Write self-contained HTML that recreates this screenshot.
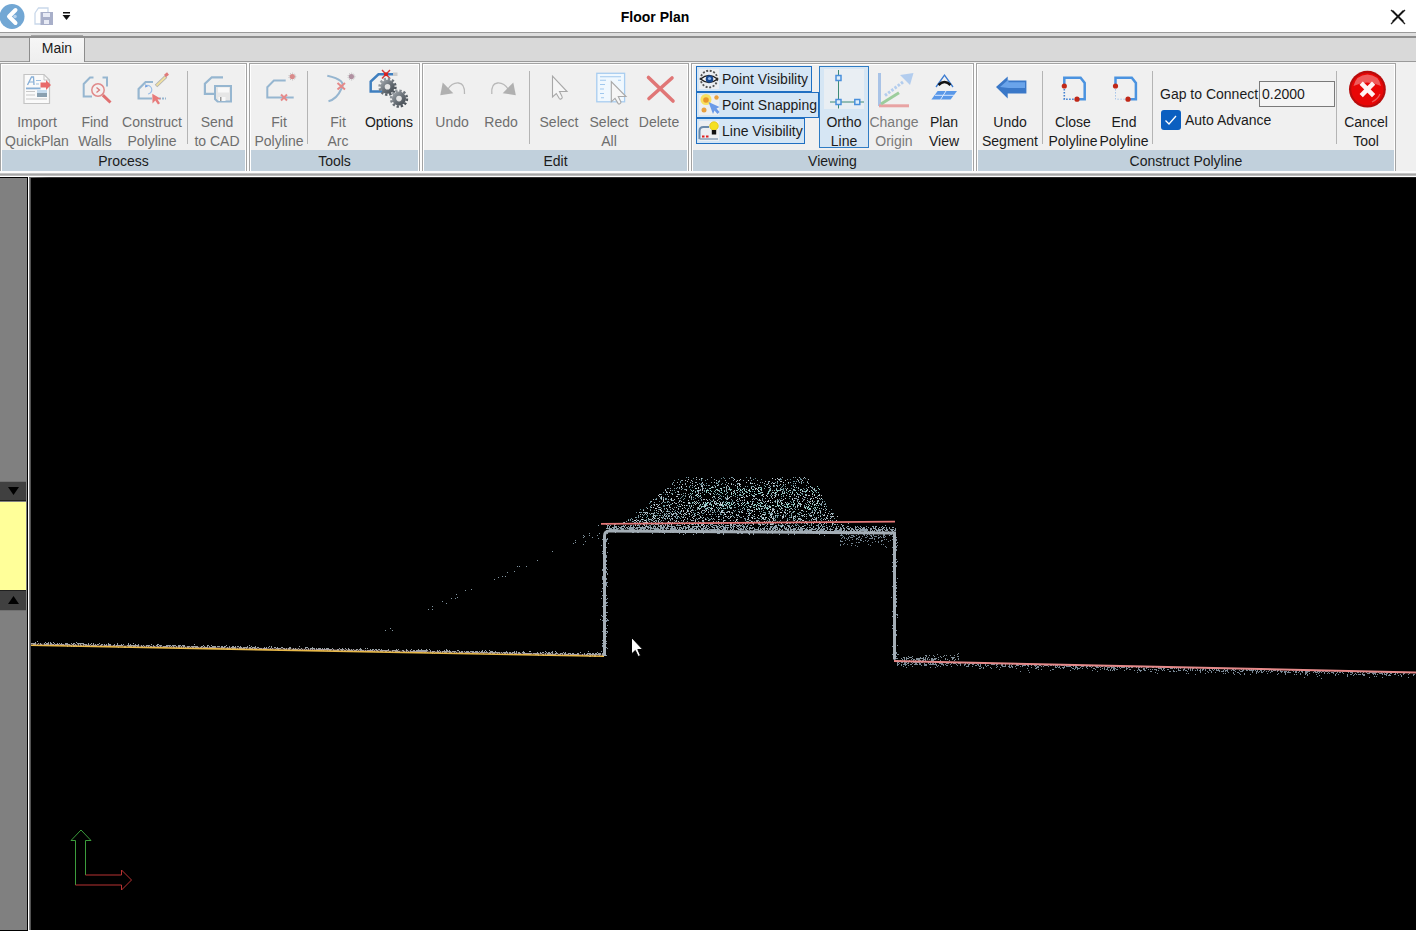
<!DOCTYPE html>
<html><head><meta charset="utf-8">
<style>
*{box-sizing:border-box}
html,body{margin:0;padding:0;width:1416px;height:932px;overflow:hidden;background:#fff;font-family:"Liberation Sans",sans-serif;position:relative}
.a{position:absolute}
.t{position:absolute;white-space:nowrap;font-size:14px;line-height:19px;color:#6e6e6e;text-align:center}
.k{color:#1b1b1b}
.grp{position:absolute;top:63px;height:108px;border:1px solid #a3a3a3;border-bottom:none;background:#f0f0f0;box-shadow:inset 1px 1px 0 #fff,inset -1px 0 0 #fff}
.gl{position:absolute;left:1px;right:1px;bottom:0;height:21px;background:#c1d0dc;font-size:14px;line-height:22px;text-align:center;color:#1b1b1b}
.sep{position:absolute;top:71px;width:1px;height:73px;background:#b4b4b4}
svg{position:absolute;overflow:visible}
</style></head><body>
<!-- title bar -->
<div class="a" style="left:0;top:0;width:1416px;height:32px;background:#fff"></div>
<div class="t k" style="left:600px;top:8px;width:110px;font-weight:bold;font-size:14px;color:#000">Floor Plan</div>
<svg style="left:1390px;top:9px" width="16" height="16"><path d="M1 1L15 15M15 1L1 15" stroke="#222" stroke-width="1.3"/></svg>
<!-- tab strip -->
<div class="a" style="left:0;top:32px;width:1416px;height:1px;background:#9a9a9a"></div>
<div class="a" style="left:0;top:33px;width:1416px;height:4px;background:#dedede"></div>
<div class="a" style="left:31px;top:35px;width:52px;height:1px;background:#a4a4a4"></div>
<div class="a" style="left:0;top:36px;width:1416px;height:2px;background:#8e8e8e"></div>
<div class="a" style="left:0;top:38px;width:1416px;height:24px;background:#d9d9d9"></div>
<div class="a" style="left:29px;top:38px;width:56px;height:25px;background:linear-gradient(#f6f6f6,#eeeeee);border-left:1px solid #8c8c8c;border-right:1px solid #8c8c8c"></div>
<div class="t k" style="left:30px;top:39px;width:54px;font-size:14px">Main</div>
<div class="a" style="left:0;top:61px;width:29px;height:1px;background:#9a9a9a"></div>
<div class="a" style="left:85px;top:61px;width:1331px;height:1px;background:#9a9a9a"></div>
<!-- ribbon background -->
<div class="a" style="left:0;top:62px;width:1416px;height:115px;background:#f0f0f0"></div>
<div class="a" style="left:0;top:171px;width:1416px;height:2px;background:#fcfcfc"></div>
<div class="a" style="left:0;top:173px;width:1416px;height:3px;background:linear-gradient(#d4d4d4,#a6a6a6,#c8c8c8)"></div>
<div class="a" style="left:247px;top:63px;width:2px;height:108px;background:#fcfcfc"></div><div class="a" style="left:420px;top:63px;width:2px;height:108px;background:#fcfcfc"></div><div class="a" style="left:689px;top:63px;width:2px;height:108px;background:#fcfcfc"></div><div class="a" style="left:974px;top:63px;width:2px;height:108px;background:#fcfcfc"></div>

<!-- groups -->
<div class="grp" style="left:0;width:247px"><div class="gl">Process</div></div>
<div class="grp" style="left:249px;width:171px"><div class="gl">Tools</div></div>
<div class="grp" style="left:422px;width:267px"><div class="gl">Edit</div></div>
<div class="grp" style="left:691px;width:283px"><div class="gl">Viewing</div></div>
<div class="grp" style="left:976px;width:420px"><div class="gl">Construct Polyline</div></div>

<!-- separators -->
<div class="sep" style="left:187px"></div>
<div class="sep" style="left:307px"></div>
<div class="sep" style="left:529px"></div>
<div class="sep" style="left:1042px"></div>
<div class="sep" style="left:1152px"></div>
<div class="sep" style="left:1336px"></div>

<!-- button labels -->
<div class="t" style="left:0px;top:113px;width:74px">Import<br>QuickPlan</div>
<div class="t" style="left:65px;top:113px;width:60px">Find<br>Walls</div>
<div class="t" style="left:117px;top:113px;width:70px">Construct<br>Polyline</div>
<div class="t" style="left:187px;top:113px;width:60px">Send<br>to CAD</div>
<div class="t" style="left:249px;top:113px;width:60px">Fit<br>Polyline</div>
<div class="t" style="left:308px;top:113px;width:60px">Fit<br>Arc</div>
<div class="t k" style="left:359px;top:113px;width:60px">Options</div>
<div class="t" style="left:422px;top:113px;width:60px">Undo</div>
<div class="t" style="left:471px;top:113px;width:60px">Redo</div>
<div class="t" style="left:529px;top:113px;width:60px">Select</div>
<div class="t" style="left:579px;top:113px;width:60px">Select<br>All</div>
<div class="t" style="left:629px;top:113px;width:60px">Delete</div>


<svg style="left:0;top:0" width="1416" height="180" viewBox="0 0 1416 180">
<!-- title bar icons -->
<circle cx="12" cy="16.5" r="12.5" fill="#72a7d4"/>
<path d="M15.5 10L9 16.5L15.5 23" fill="none" stroke="#fff" stroke-width="4" stroke-linecap="round" stroke-linejoin="round"/><circle cx="15" cy="16.5" r="1.8" fill="#b8d4ee"/>
<path d="M35 13L38.5 8H48V13" fill="none" stroke="#c9d8ea" stroke-width="1.3"/>
<path d="M35 13V24H41" fill="none" stroke="#c9d8ea" stroke-width="1.3"/>
<rect x="40.5" y="12" width="12.5" height="13" fill="#a8afc9"/>
<rect x="43" y="13" width="7" height="4" fill="#e8ebf5"/>
<rect x="44" y="20" width="5" height="4" fill="#e8ebf5"/>
<rect x="63" y="12" width="7" height="1.5" fill="#111"/>
<path d="M62.5 15L70.5 15L66.5 20Z" fill="#111"/>
<!-- close -->
<path d="M1392.5 10.5L1403.5 21.5M1403.5 10.5L1392.5 21.5" stroke="#111" stroke-width="1.3"/>

<!-- Import QuickPlan -->
<path d="M24 74.5H44L49.5 80V103.5H24Z" fill="#fafafa" stroke="#c4c4c4" stroke-width="1.2"/>
<path d="M44 74.5V80H49.5" fill="none" stroke="#c4c4c4" stroke-width="1"/>
<path d="M27.5 85L31.5 77H33.5L34 85" fill="none" stroke="#86aed6" stroke-width="1.3"/>
<path d="M29 82H33.5" stroke="#86aed6" stroke-width="1"/>
<path d="M36 80.5H41M36 84H39" stroke="#9dbfe0" stroke-width="1"/>
<rect x="26" y="87.5" width="14.5" height="1.8" fill="#8ab0d6"/>
<path d="M26 91.5H35M26 95H35M26 99H47" stroke="#c8c8c8" stroke-width="1"/>
<rect x="37" y="90" width="10" height="7" fill="#8aa0b0"/>
<rect x="37" y="90" width="10" height="3" fill="#c5dbee"/>
<path d="M40.5 82.5H46V80L51 85L46 90V87.5H40.5Z" fill="#e86a6a"/>

<!-- Find Walls -->
<path d="M93.5 77.5H90L83.7 84V96.5H92" fill="none" stroke="#96b6d0" stroke-width="2"/>
<path d="M102.5 77.5H107V86.5" fill="none" stroke="#96b6d0" stroke-width="2"/>
<circle cx="98" cy="90" r="6.2" fill="#f4f0f0" stroke="#e08a8a" stroke-width="1.5"/>
<path d="M96.5 87.5L99.5 90L96.5 92.5" fill="none" stroke="#d87a7a" stroke-width="1.3"/>
<path d="M102.8 95.2L110.5 102.5" stroke="#e07070" stroke-width="3"/>

<!-- Construct Polyline -->
<path d="M153 82H145.6L138.6 89V98.5H152" fill="none" stroke="#96b6d0" stroke-width="2.2"/>
<path d="M159 98.5H166" stroke="#96b6d0" stroke-width="1.8" stroke-dasharray="2 1"/>
<path d="M147 85.5A4 4 0 1 1 148 94" fill="none" stroke="#9bbfe8" stroke-width="1.2"/>
<path d="M145.5 84L148 86.5L145 87.5Z" fill="#6f9fe0"/>
<path d="M156 86L166 76.5" stroke="#b0b0b0" stroke-width="3.6"/>
<path d="M156.5 85.5L165.5 77" stroke="#f0e0a0" stroke-width="1.8"/>
<path d="M165 76L168 73.5" stroke="#e07a7a" stroke-width="3"/>
<path d="M152.3 93.8L152.5 103.5L155.3 100.6L158 104.5L160 103.3L157.5 99.5L161.2 99Z" fill="#e77b7b"/>

<!-- Send to CAD -->
<path d="M223 77.3H211.8L204.9 83.7V93.9H215" fill="none" stroke="#96b6d0" stroke-width="2.2"/>
<path d="M215 86H231V101.5H217.5L215 99Z" fill="#e6e6e6" stroke="#96b6d0" stroke-width="2"/>
<rect x="218" y="87.5" width="11" height="5" fill="#f8f8f8"/>
<rect x="218.5" y="97" width="7" height="4" fill="#f8f8f8"/>
<rect x="220" y="97" width="1.5" height="4" fill="#999"/>

<!-- Fit Polyline -->
<path d="M285.7 80.5H273.9L267.3 87.2V97.6H293.7" fill="none" stroke="#96b6d0" stroke-width="2"/>
<path d="M281 94.5L287 100.5M287 94.5L281 100.5" stroke="#e58a8a" stroke-width="2"/>
<circle cx="292.3" cy="76.6" r="2.6" fill="#d88a8a"/>
<circle cx="292.3" cy="76.6" r="3.4" fill="none" stroke="#a0a0a0" stroke-width="0.7" stroke-dasharray="1 1.2"/>

<!-- Fit Arc -->
<path d="M327.3 75.7Q347 80 341.5 88.5Q337 99 328.5 101.2" fill="none" stroke="#96b6d0" stroke-width="2"/>
<path d="M337.5 83L345 89.5M345 83L337.5 89.5" stroke="#e58a8a" stroke-width="2"/>
<circle cx="351.4" cy="76.6" r="2.6" fill="#b090a0"/>
<circle cx="351.4" cy="76.6" r="3.4" fill="none" stroke="#a0a0a0" stroke-width="0.7" stroke-dasharray="1 1.2"/>

<!-- Options -->
<path d="M396.5 74.3H378.5L370.7 81.6V91.5H386" fill="none" stroke="#3f7fbf" stroke-width="2.5"/>
<rect x="393" y="72.5" width="4.5" height="3.5" fill="#ccc"/>
<path d="M382 70L390 78.5M390 70L382 78.5" stroke="#d43a3a" stroke-width="1.4"/>
<circle cx="386" cy="74.3" r="2" fill="#d42020"/>
<defs><linearGradient id="gg" x1="0" y1="0" x2="1" y2="1"><stop offset="0" stop-color="#a8adb2"/><stop offset="0.5" stop-color="#6a7178"/><stop offset="1" stop-color="#3e454c"/></linearGradient></defs>
<g fill="url(#gg)"><circle cx="387.5" cy="86.8" r="7"/><circle cx="399" cy="98.6" r="7"/></g>
<circle cx="387.5" cy="86.8" r="7.9" fill="none" stroke="url(#gg)" stroke-width="2.6" stroke-dasharray="2.3 1.85"/>
<circle cx="399" cy="98.6" r="7.9" fill="none" stroke="url(#gg)" stroke-width="2.6" stroke-dasharray="2.3 1.85"/>
<circle cx="387.5" cy="86.8" r="2.8" fill="#e4e4e4"/>
<circle cx="399" cy="98.6" r="2.8" fill="#e4e4e4"/>

<!-- Undo / Redo -->
<path d="M447.7 89.5Q452 82.5 458.5 83Q465 83.5 464.5 94" fill="none" stroke="#b8b8b8" stroke-width="1.3"/>
<path d="M442.7 82.5L440.3 95.3L453.3 93.2Z" fill="#b0b0b0"/>
<path d="M508.4 89.5Q504 82.5 497.5 83Q491 83.5 491.8 94" fill="none" stroke="#b8b8b8" stroke-width="1.3"/>
<path d="M513.3 82.5L515.8 95.3L502.7 93.2Z" fill="#b0b0b0"/>

<!-- Select -->
<path d="M552.5 76.2V97L556.3 93.5L559.3 98.5Q560 99.5 561 99L562 98.2Q562.5 97.3 562 96.5L559.5 91.5H567Z" fill="#f6f6f6" stroke="#a8a8a8" stroke-width="1.1"/>
<!-- Select All -->
<rect x="596.8" y="73.3" width="27.8" height="28.5" fill="#f0f8fe" stroke="#a8cdf0" stroke-width="1.3"/>
<path d="M600 76.8H621M600 80.2H606M618 80.2H621M600 84.5H605M600 89H604M600 93.5H604M601 97.8H604" stroke="#a0c8ee" stroke-width="1.1"/>
<path d="M611.3 81.5V101.8L615 98.4L618 103.4Q618.7 104.3 619.7 103.9L620.7 103Q621.2 102.2 620.7 101.4L618.3 96.5H626Z" fill="#f6f6f6" stroke="#a8a8a8" stroke-width="1.1"/>
<!-- Delete -->
<path d="M648.5 77.5L673 101M672 78L649 98.5" stroke="#e07676" stroke-width="3.6" stroke-linecap="round"/>
</svg>


<!-- Viewing toggles -->
<div class="a" style="left:696px;top:66px;width:116px;height:26px;background:#d5e6f5;border:1px solid #1f6fc2"></div>
<div class="a" style="left:696px;top:92px;width:123px;height:26px;background:#d5e6f5;border:1px solid #1f6fc2"></div>
<div class="a" style="left:696px;top:118px;width:109px;height:26px;background:#d5e6f5;border:1px solid #1f6fc2"></div>
<div class="a" style="left:697px;top:91px;width:115px;height:2px;background:#1f6fc2"></div>
<div class="a" style="left:697px;top:117px;width:108px;height:2px;background:#1f6fc2"></div>
<div class="t k" style="left:722px;top:70px;text-align:left">Point Visibility</div>
<div class="t k" style="left:722px;top:96px;text-align:left">Point Snapping</div>
<div class="t k" style="left:722px;top:122px;text-align:left">Line Visibility</div>
<div class="a" style="left:819px;top:66px;width:50px;height:82px;background:#d6e6f4;border:1px solid #2f7cc4"></div>
<div class="a" style="left:824px;top:69px;width:40px;height:40px;background:#e9eef3"></div>
<div class="t k" style="left:814px;top:113px;width:60px">Ortho<br>Line</div>
<div class="t" style="left:864px;top:113px;width:60px;color:#7a7a7a">Change<br>Origin</div>
<div class="t k" style="left:914px;top:113px;width:60px">Plan<br>View</div>
<!-- Construct Polyline labels -->
<div class="t k" style="left:975px;top:113px;width:70px">Undo<br>Segment</div>
<div class="t k" style="left:1038px;top:113px;width:70px">Close<br>Polyline</div>
<div class="t k" style="left:1089px;top:113px;width:70px">End<br>Polyline</div>
<div class="t k" style="left:1160px;top:85px;text-align:left">Gap to Connect</div>
<div class="a" style="left:1259px;top:81px;width:76px;height:26px;background:#f4f4f4;border:1px solid #7a7a7a"></div>
<div class="t k" style="left:1262px;top:85px;text-align:left">0.2000</div>
<div class="a" style="left:1161px;top:110px;width:20px;height:20px;background:#0b5fc0;border-radius:3px"></div>
<div class="t k" style="left:1185px;top:111px;text-align:left">Auto Advance</div>
<div class="t k" style="left:1331px;top:113px;width:70px">Cancel<br>Tool</div>

<svg style="left:0;top:0" width="1416" height="180" viewBox="0 0 1416 180">
<!-- eye icon -->
<rect x="699" y="69" width="20" height="20" fill="#eceff2"/>
<rect x="699" y="95" width="20" height="20" fill="#eceff2"/>
<rect x="699" y="121" width="20" height="20" fill="#eceff2"/>
<g>
<circle cx="709" cy="79" r="8.3" fill="none" stroke="#555" stroke-width="1.8" stroke-dasharray="2 1.6"/>
<path d="M700.5 79Q709 72 717.5 79Q709 86 700.5 79Z" fill="#f4f4f4" stroke="#222" stroke-width="1.5"/>
<circle cx="709.5" cy="79" r="3.8" fill="#1a4a90"/>
<circle cx="709.5" cy="78.5" r="1.6" fill="#8fb8f0"/>
</g>
<!-- snapping -->
<g>
<circle cx="706" cy="99.5" r="5.5" fill="#f8e060"/>
<circle cx="706" cy="100" r="2.8" fill="#e8962a"/>
<circle cx="716.5" cy="97.5" r="2.2" fill="#e8a040"/>
<circle cx="704" cy="110" r="2.5" fill="#e8a040"/>
<path d="M708.5 102L713 114L714.5 110.5L717.5 114L719.5 112L716.5 108.5L719.5 107Z" fill="#6a9ae8"/>
</g>
<!-- line visibility -->
<g>
<path d="M699.5 139V131Q699.5 127 703.5 127H709" fill="none" stroke="#6a8aaa" stroke-width="2"/>
<path d="M699.5 139H718" stroke="#8aa0b8" stroke-width="1.5"/>
<rect x="702" y="135.5" width="2.5" height="2" fill="#e02020"/><rect x="706" y="135.5" width="2.5" height="2" fill="#e02020"/>
<circle cx="714" cy="126" r="4.3" fill="#f5e020" stroke="#d8b800" stroke-width="0.6"/>
<rect x="711.8" y="130" width="4.4" height="4.5" fill="#111"/>
</g>
<!-- ortho -->
<g>
<path d="M838.5 70V108.5M830 102H864" stroke="#3d8a76" stroke-width="1"/>
<rect x="836" y="75.5" width="5" height="5" fill="#dfeefa" stroke="#4a90dc" stroke-width="1.5"/>
<rect x="836" y="99.5" width="5" height="5" fill="#dfeefa" stroke="#4a90dc" stroke-width="1.5"/>
<rect x="854.8" y="99.5" width="5" height="5" fill="#dfeefa" stroke="#4a90dc" stroke-width="1.5"/>
</g>
<!-- change origin -->
<g>
<path d="M879.5 73V106" stroke="#a9c3e6" stroke-width="3"/>
<path d="M879 105.8H909" stroke="#e8a3a3" stroke-width="3"/>
<path d="M881 104L899 92.8" stroke="#9ccd9c" stroke-width="3"/>
<path d="M885 95.5L903 82" stroke="#b3cdee" stroke-width="3" stroke-dasharray="2.5 1.5"/>
<path d="M913.5 73L900 75L910 85Z" fill="#b3cdee"/>
</g>
<!-- plan view -->
<g>
<path d="M936 87L944.5 75L953 87" fill="none" stroke="#3a7ad0" stroke-width="1.3"/>
<path d="M938.5 85Q944.5 79 950.5 85" fill="none" stroke="#111" stroke-width="2.5"/>
<path d="M937.6 91H957L950.6 99.6H931.4Z" fill="#5a98e8"/>
<path d="M935 95.3H954M946 91L940.5 99.6" stroke="#d8e8ff" stroke-width="1"/>
</g>
<!-- undo segment arrow -->
<g>
<path d="M996 87L1007.7 76.5V80.6H1026.4V93.4H1007.7V98.6Z" fill="#3a78c8"/>
<path d="M1000 87L1008.5 79.5V82.3H1025V88H1008.5Z" fill="#6aa4ea"/>
</g>
<!-- close polyline -->
<g>
<path d="M1064.3 85.8V77.7H1080.6L1084.7 82.9V99.2H1077" fill="none" stroke="#4b93e0" stroke-width="2.5"/>
<path d="M1064.3 89V99.2H1075" fill="none" stroke="#3f7fd0" stroke-width="1.6" stroke-dasharray="1.6 1.4"/>
<circle cx="1064.3" cy="86" r="2.6" fill="#c02818"/>
<circle cx="1077" cy="99.2" r="2.6" fill="#c02818"/>
</g>
<!-- end polyline -->
<g>
<path d="M1115.5 85.8V77.7H1131.8L1135.9 82.9V99.2H1128" fill="none" stroke="#4b93e0" stroke-width="2.5"/>
<path d="M1115.5 89V99.2H1126" fill="none" stroke="#a9c6ea" stroke-width="1" stroke-dasharray="1.6 1.4"/>
<circle cx="1115.5" cy="86" r="2.6" fill="#c02818"/>
<circle cx="1128" cy="99.2" r="2.6" fill="#c02818"/>
</g>
<!-- check -->
<path d="M1165.5 120.5L1169 124L1176 116" fill="none" stroke="#fff" stroke-width="1.3"/>
<!-- cancel -->
<g>
<defs><radialGradient id="cg" cx="0.5" cy="0.4" r="0.6"><stop offset="0" stop-color="#ff3030"/><stop offset="0.75" stop-color="#e00808"/><stop offset="1" stop-color="#a00000"/></radialGradient></defs>
<circle cx="1367.4" cy="89.2" r="18.4" fill="#b80c0c"/>
<circle cx="1367.4" cy="89.2" r="16.2" fill="#e80606"/>
<path d="M1353.5 86Q1356 75 1367.4 74.5Q1379 75 1381 86Q1367 79 1353.5 86Z" fill="#f27878" opacity="0.75"/>
<path d="M1372 102Q1378 99 1380 94" fill="none" stroke="#f07070" stroke-width="1.2" opacity="0.8"/>
<path d="M1361.2 83.2L1373.6 95.6M1373.6 83.2L1361.2 95.6" stroke="#fff4f4" stroke-width="4.6"/>
</g>
</svg>

<!-- canvas -->
<div class="a" style="left:0;top:176px;width:1416px;height:756px;background:#fff"></div>
<div class="a" style="left:0;top:177px;width:28px;height:754px;background:#000"></div>
<div class="a" style="left:0;top:178px;width:27px;height:752px;background:#808080"></div>
<div class="a" style="left:29px;top:177px;width:1387px;height:753px;background:#000"></div>
<div class="a" style="left:29px;top:177px;width:2px;height:753px;background:linear-gradient(90deg,#9a9a9a,#3a3a3a)"></div>
<div class="a" style="left:29px;top:177px;width:1387px;height:1px;background:linear-gradient(90deg,#6a6a6a,#3a3a3a 20px,#202020)"></div>

<!-- left scrollbar -->
<div class="a" style="left:0;top:481px;width:26px;height:20px;background:#404040;border-top:1px solid #707070;border-bottom:1px solid #202020"></div>
<svg style="left:8px;top:487px" width="12" height="9"><path d="M0 0H11L5.5 8Z" fill="#000"/></svg>
<div class="a" style="left:0;top:502px;width:26px;height:88px;background:#ffff99"></div>
<div class="a" style="left:0;top:590px;width:26px;height:21px;background:#404040;border-top:1px solid #202020;border-bottom:1px solid #707070"></div>
<svg style="left:8px;top:596px" width="12" height="9"><path d="M0 8H11L5.5 0Z" fill="#000"/></svg>

<svg style="left:0;top:0" width="1416" height="932" viewBox="0 0 1416 932">
<path d="M743 480h1v1h-1zM685 484h1v1h-1zM681 480h1v1h-1zM775 516h1v1h-1zM693 520h1v1h-1zM650 510h1v1h-1zM679 500h1v1h-1zM726 491h1v1h-1zM753 501h1v1h-1zM682 480h1v1h-1zM669 507h1v1h-1zM672 503h1v1h-1zM798 519h1v1h-1zM721 524h1v1h-1zM729 518h1v1h-1zM668 513h1v1h-1zM803 520h1v1h-1zM801 483h1v1h-1zM683 499h1v1h-1zM750 482h1v1h-1zM657 518h1v1h-1zM671 524h1v1h-1zM775 493h1v1h-1zM646 525h1v1h-1zM748 522h1v1h-1zM709 499h1v1h-1zM674 485h1v1h-1zM797 501h1v1h-1zM685 513h1v1h-1zM743 525h1v1h-1zM711 477h1v1h-1zM811 512h1v1h-1zM797 513h1v1h-1zM668 488h1v1h-1zM785 516h1v1h-1zM776 490h1v1h-1zM692 481h1v1h-1zM742 491h1v1h-1zM669 505h1v1h-1zM687 521h1v1h-1zM741 490h1v1h-1zM801 479h1v1h-1zM697 509h1v1h-1zM719 481h1v1h-1zM667 494h1v1h-1zM700 490h1v1h-1zM804 522h1v1h-1zM725 514h1v1h-1zM658 511h1v1h-1zM810 509h1v1h-1zM668 488h1v1h-1zM812 487h1v1h-1zM725 484h1v1h-1zM786 523h1v1h-1zM808 483h1v1h-1zM805 495h1v1h-1zM698 521h1v1h-1zM821 508h1v1h-1zM709 493h1v1h-1zM816 525h1v1h-1zM750 491h1v1h-1zM734 526h1v1h-1zM751 525h1v1h-1zM678 509h1v1h-1zM701 497h1v1h-1zM675 513h1v1h-1zM815 508h1v1h-1zM831 516h1v1h-1zM741 497h1v1h-1zM699 508h1v1h-1zM734 507h1v1h-1zM731 483h1v1h-1zM736 515h1v1h-1zM659 522h1v1h-1zM813 502h1v1h-1zM772 523h1v1h-1zM745 520h1v1h-1zM682 517h1v1h-1zM764 488h1v1h-1zM685 489h1v1h-1zM712 486h1v1h-1zM679 488h1v1h-1zM739 516h1v1h-1zM773 508h1v1h-1zM749 513h1v1h-1zM672 484h1v1h-1zM639 521h1v1h-1zM800 519h1v1h-1zM733 524h1v1h-1zM742 512h1v1h-1zM740 486h1v1h-1zM796 481h1v1h-1zM768 518h1v1h-1zM690 485h1v1h-1zM761 487h1v1h-1zM817 513h1v1h-1zM763 510h1v1h-1zM759 499h1v1h-1zM822 501h1v1h-1zM768 487h1v1h-1zM738 523h1v1h-1zM812 488h1v1h-1zM728 489h1v1h-1zM690 482h1v1h-1zM756 521h1v1h-1zM781 503h1v1h-1zM737 501h1v1h-1zM798 494h1v1h-1zM792 509h1v1h-1zM714 479h1v1h-1zM653 514h1v1h-1zM751 480h1v1h-1zM762 482h1v1h-1zM671 513h1v1h-1zM646 517h1v1h-1zM785 484h1v1h-1zM698 518h1v1h-1zM748 519h1v1h-1zM791 504h1v1h-1zM726 516h1v1h-1zM694 486h1v1h-1zM755 485h1v1h-1zM831 517h1v1h-1zM637 522h1v1h-1zM806 521h1v1h-1zM824 514h1v1h-1zM772 478h1v1h-1zM733 484h1v1h-1zM726 490h1v1h-1zM649 521h1v1h-1zM842 526h1v1h-1zM677 487h1v1h-1zM645 512h1v1h-1zM705 518h1v1h-1zM695 519h1v1h-1zM742 502h1v1h-1zM635 517h1v1h-1zM644 512h1v1h-1zM804 506h1v1h-1zM796 498h1v1h-1zM678 523h1v1h-1zM814 517h1v1h-1zM759 522h1v1h-1zM698 491h1v1h-1zM727 512h1v1h-1zM799 494h1v1h-1zM661 499h1v1h-1zM737 517h1v1h-1zM752 515h1v1h-1zM730 496h1v1h-1zM806 516h1v1h-1zM754 495h1v1h-1zM794 503h1v1h-1zM694 516h1v1h-1zM720 505h1v1h-1zM774 493h1v1h-1zM718 499h1v1h-1zM818 501h1v1h-1zM681 516h1v1h-1zM696 494h1v1h-1zM654 512h1v1h-1zM776 494h1v1h-1zM771 483h1v1h-1zM652 520h1v1h-1zM659 509h1v1h-1zM773 483h1v1h-1zM774 509h1v1h-1zM696 479h1v1h-1zM748 518h1v1h-1zM787 522h1v1h-1zM716 523h1v1h-1zM651 522h1v1h-1zM769 512h1v1h-1zM656 520h1v1h-1zM690 495h1v1h-1zM664 505h1v1h-1zM700 489h1v1h-1zM794 495h1v1h-1zM768 481h1v1h-1zM719 516h1v1h-1zM688 494h1v1h-1zM763 501h1v1h-1zM717 505h1v1h-1zM747 501h1v1h-1zM659 515h1v1h-1zM759 521h1v1h-1zM781 523h1v1h-1zM797 499h1v1h-1zM769 491h1v1h-1zM757 520h1v1h-1zM705 505h1v1h-1zM630 526h1v1h-1zM772 523h1v1h-1zM663 497h1v1h-1zM723 520h1v1h-1zM802 498h1v1h-1zM772 490h1v1h-1zM679 494h1v1h-1zM765 514h1v1h-1zM747 522h1v1h-1zM718 517h1v1h-1zM695 515h1v1h-1zM780 488h1v1h-1zM703 523h1v1h-1zM702 488h1v1h-1zM670 526h1v1h-1zM670 520h1v1h-1zM653 513h1v1h-1zM630 525h1v1h-1zM673 482h1v1h-1zM666 511h1v1h-1zM689 513h1v1h-1zM744 509h1v1h-1zM723 496h1v1h-1zM634 522h1v1h-1zM782 508h1v1h-1zM744 508h1v1h-1zM739 522h1v1h-1zM800 518h1v1h-1zM665 499h1v1h-1zM689 503h1v1h-1zM773 486h1v1h-1zM816 505h1v1h-1zM710 514h1v1h-1zM782 510h1v1h-1zM731 512h1v1h-1zM710 490h1v1h-1zM798 519h1v1h-1zM752 501h1v1h-1zM804 499h1v1h-1zM733 516h1v1h-1zM679 487h1v1h-1zM749 493h1v1h-1zM682 508h1v1h-1zM829 526h1v1h-1zM661 503h1v1h-1zM767 523h1v1h-1zM729 506h1v1h-1zM766 495h1v1h-1zM737 483h1v1h-1zM807 502h1v1h-1zM664 514h1v1h-1zM777 515h1v1h-1zM713 523h1v1h-1zM730 516h1v1h-1zM794 518h1v1h-1zM786 521h1v1h-1zM648 523h1v1h-1zM795 515h1v1h-1zM692 493h1v1h-1zM667 517h1v1h-1zM662 518h1v1h-1zM819 523h1v1h-1zM815 510h1v1h-1zM785 513h1v1h-1zM763 514h1v1h-1zM778 524h1v1h-1zM667 492h1v1h-1zM689 514h1v1h-1zM771 514h1v1h-1zM789 511h1v1h-1zM718 484h1v1h-1zM785 510h1v1h-1zM693 507h1v1h-1zM772 495h1v1h-1zM638 517h1v1h-1zM780 478h1v1h-1zM830 516h1v1h-1zM726 486h1v1h-1zM647 512h1v1h-1zM668 499h1v1h-1zM702 487h1v1h-1zM713 506h1v1h-1zM762 506h1v1h-1zM762 517h1v1h-1zM819 510h1v1h-1zM778 525h1v1h-1zM734 517h1v1h-1zM729 487h1v1h-1zM782 492h1v1h-1zM721 499h1v1h-1zM641 512h1v1h-1zM710 494h1v1h-1zM726 489h1v1h-1zM710 508h1v1h-1zM804 491h1v1h-1zM677 511h1v1h-1zM669 492h1v1h-1zM681 486h1v1h-1zM676 518h1v1h-1zM749 509h1v1h-1zM783 484h1v1h-1zM783 496h1v1h-1zM637 520h1v1h-1zM654 512h1v1h-1zM657 504h1v1h-1zM795 485h1v1h-1zM708 509h1v1h-1zM765 507h1v1h-1zM642 521h1v1h-1zM803 478h1v1h-1zM693 524h1v1h-1zM656 524h1v1h-1zM768 521h1v1h-1zM665 524h1v1h-1zM764 512h1v1h-1zM776 488h1v1h-1zM665 498h1v1h-1zM803 515h1v1h-1zM689 513h1v1h-1zM688 511h1v1h-1zM797 516h1v1h-1zM760 482h1v1h-1zM801 515h1v1h-1zM658 507h1v1h-1zM653 515h1v1h-1zM759 523h1v1h-1zM759 500h1v1h-1zM782 491h1v1h-1zM677 494h1v1h-1zM660 513h1v1h-1zM695 519h1v1h-1zM718 494h1v1h-1zM782 526h1v1h-1zM655 520h1v1h-1zM697 494h1v1h-1zM734 502h1v1h-1zM675 516h1v1h-1zM746 526h1v1h-1zM735 524h1v1h-1zM704 490h1v1h-1zM678 502h1v1h-1zM635 522h1v1h-1zM783 493h1v1h-1zM676 488h1v1h-1zM754 487h1v1h-1zM655 524h1v1h-1zM731 508h1v1h-1zM769 485h1v1h-1zM643 522h1v1h-1zM631 525h1v1h-1zM719 498h1v1h-1zM811 523h1v1h-1zM793 516h1v1h-1zM794 516h1v1h-1zM807 490h1v1h-1zM777 499h1v1h-1zM692 509h1v1h-1zM815 497h1v1h-1zM712 508h1v1h-1zM664 523h1v1h-1zM727 523h1v1h-1zM761 515h1v1h-1zM680 513h1v1h-1zM746 496h1v1h-1zM762 524h1v1h-1zM750 477h1v1h-1zM797 506h1v1h-1zM712 524h1v1h-1zM670 509h1v1h-1zM780 489h1v1h-1zM677 514h1v1h-1zM686 489h1v1h-1zM707 502h1v1h-1zM681 510h1v1h-1zM793 501h1v1h-1zM774 511h1v1h-1zM771 494h1v1h-1zM824 506h1v1h-1zM745 486h1v1h-1zM778 501h1v1h-1zM690 511h1v1h-1zM811 519h1v1h-1zM816 519h1v1h-1zM697 507h1v1h-1zM738 506h1v1h-1zM676 525h1v1h-1zM744 518h1v1h-1zM688 477h1v1h-1zM798 487h1v1h-1zM702 524h1v1h-1zM778 495h1v1h-1zM757 484h1v1h-1zM748 518h1v1h-1zM665 518h1v1h-1zM670 519h1v1h-1zM782 517h1v1h-1zM770 489h1v1h-1zM742 497h1v1h-1zM791 494h1v1h-1zM691 515h1v1h-1zM709 519h1v1h-1zM798 502h1v1h-1zM783 488h1v1h-1zM707 479h1v1h-1zM728 518h1v1h-1zM689 505h1v1h-1zM672 500h1v1h-1zM705 506h1v1h-1zM629 523h1v1h-1zM727 496h1v1h-1zM677 491h1v1h-1zM820 523h1v1h-1zM776 506h1v1h-1zM737 483h1v1h-1zM712 523h1v1h-1zM739 491h1v1h-1zM805 497h1v1h-1zM795 509h1v1h-1zM775 500h1v1h-1zM810 486h1v1h-1zM834 524h1v1h-1zM806 518h1v1h-1zM697 519h1v1h-1zM665 489h1v1h-1zM632 519h1v1h-1zM724 490h1v1h-1zM704 522h1v1h-1zM795 507h1v1h-1zM761 516h1v1h-1zM816 497h1v1h-1zM715 487h1v1h-1zM737 495h1v1h-1zM704 507h1v1h-1zM742 508h1v1h-1zM721 489h1v1h-1zM716 502h1v1h-1zM815 504h1v1h-1zM746 489h1v1h-1zM789 515h1v1h-1zM729 497h1v1h-1zM713 487h1v1h-1zM785 502h1v1h-1zM826 521h1v1h-1zM628 526h1v1h-1zM710 508h1v1h-1zM752 523h1v1h-1zM676 521h1v1h-1zM765 504h1v1h-1zM691 499h1v1h-1zM742 510h1v1h-1zM775 492h1v1h-1zM793 477h1v1h-1zM787 510h1v1h-1zM750 513h1v1h-1zM685 523h1v1h-1zM710 493h1v1h-1zM683 521h1v1h-1zM780 515h1v1h-1zM756 520h1v1h-1zM702 518h1v1h-1zM643 512h1v1h-1zM697 523h1v1h-1zM649 523h1v1h-1zM780 515h1v1h-1zM746 492h1v1h-1zM795 506h1v1h-1zM769 521h1v1h-1zM782 518h1v1h-1zM678 492h1v1h-1zM666 515h1v1h-1zM737 515h1v1h-1zM726 498h1v1h-1zM754 499h1v1h-1zM651 519h1v1h-1zM658 513h1v1h-1zM695 524h1v1h-1zM692 502h1v1h-1zM715 487h1v1h-1zM738 525h1v1h-1zM742 500h1v1h-1zM775 516h1v1h-1zM794 490h1v1h-1zM692 510h1v1h-1zM695 482h1v1h-1zM787 479h1v1h-1zM793 511h1v1h-1zM789 503h1v1h-1zM795 516h1v1h-1zM771 494h1v1h-1zM811 487h1v1h-1zM801 481h1v1h-1zM786 521h1v1h-1zM821 503h1v1h-1zM799 512h1v1h-1zM726 504h1v1h-1zM667 488h1v1h-1zM666 491h1v1h-1zM832 513h1v1h-1zM646 523h1v1h-1zM681 520h1v1h-1zM740 522h1v1h-1zM632 519h1v1h-1zM772 482h1v1h-1zM733 478h1v1h-1zM709 493h1v1h-1zM710 510h1v1h-1zM684 498h1v1h-1zM719 523h1v1h-1zM781 500h1v1h-1zM701 524h1v1h-1zM824 526h1v1h-1zM740 522h1v1h-1zM731 477h1v1h-1zM716 483h1v1h-1zM733 480h1v1h-1zM692 520h1v1h-1zM678 492h1v1h-1zM699 496h1v1h-1zM685 483h1v1h-1zM699 490h1v1h-1zM816 517h1v1h-1zM640 521h1v1h-1zM812 496h1v1h-1zM762 508h1v1h-1zM679 484h1v1h-1zM792 525h1v1h-1zM676 515h1v1h-1zM675 492h1v1h-1zM824 504h1v1h-1zM709 514h1v1h-1zM793 512h1v1h-1zM804 505h1v1h-1zM661 520h1v1h-1zM826 518h1v1h-1zM818 524h1v1h-1zM670 488h1v1h-1zM726 505h1v1h-1zM653 519h1v1h-1zM650 519h1v1h-1zM764 488h1v1h-1zM753 486h1v1h-1zM727 517h1v1h-1zM703 488h1v1h-1zM730 523h1v1h-1zM654 502h1v1h-1zM820 504h1v1h-1zM814 509h1v1h-1zM698 500h1v1h-1zM814 490h1v1h-1zM770 486h1v1h-1zM766 521h1v1h-1zM804 514h1v1h-1zM806 504h1v1h-1zM835 521h1v1h-1zM635 523h1v1h-1zM764 515h1v1h-1zM830 514h1v1h-1zM798 496h1v1h-1zM673 500h1v1h-1zM635 520h1v1h-1zM665 524h1v1h-1zM718 510h1v1h-1zM806 494h1v1h-1zM770 517h1v1h-1zM809 515h1v1h-1zM758 520h1v1h-1zM749 520h1v1h-1zM704 504h1v1h-1zM668 501h1v1h-1zM750 520h1v1h-1zM666 513h1v1h-1zM726 488h1v1h-1zM789 517h1v1h-1zM790 482h1v1h-1zM744 502h1v1h-1zM710 504h1v1h-1zM724 513h1v1h-1zM821 504h1v1h-1zM741 490h1v1h-1zM764 502h1v1h-1zM758 491h1v1h-1zM667 524h1v1h-1zM747 521h1v1h-1zM749 515h1v1h-1zM782 500h1v1h-1zM703 521h1v1h-1zM815 519h1v1h-1zM769 513h1v1h-1zM767 505h1v1h-1zM635 517h1v1h-1zM742 524h1v1h-1zM698 512h1v1h-1zM811 490h1v1h-1zM650 519h1v1h-1zM716 507h1v1h-1zM770 500h1v1h-1zM765 518h1v1h-1zM642 514h1v1h-1zM759 511h1v1h-1zM780 520h1v1h-1zM660 510h1v1h-1zM668 515h1v1h-1zM701 511h1v1h-1zM821 498h1v1h-1zM659 504h1v1h-1zM673 514h1v1h-1zM765 522h1v1h-1zM691 496h1v1h-1zM791 513h1v1h-1zM754 505h1v1h-1zM742 508h1v1h-1zM765 498h1v1h-1zM741 503h1v1h-1zM690 507h1v1h-1zM675 512h1v1h-1zM645 520h1v1h-1zM662 515h1v1h-1zM819 521h1v1h-1zM705 508h1v1h-1zM760 522h1v1h-1zM757 480h1v1h-1zM697 526h1v1h-1zM737 497h1v1h-1zM786 490h1v1h-1zM640 516h1v1h-1zM668 525h1v1h-1zM720 514h1v1h-1zM754 514h1v1h-1zM726 499h1v1h-1zM790 511h1v1h-1zM718 522h1v1h-1zM630 519h1v1h-1zM772 523h1v1h-1zM712 514h1v1h-1zM781 507h1v1h-1zM779 502h1v1h-1zM696 501h1v1h-1zM797 494h1v1h-1zM701 483h1v1h-1zM837 524h1v1h-1zM646 514h1v1h-1zM832 513h1v1h-1zM739 524h1v1h-1zM730 514h1v1h-1zM793 523h1v1h-1zM814 519h1v1h-1zM662 522h1v1h-1zM801 513h1v1h-1zM796 525h1v1h-1zM725 508h1v1h-1zM812 504h1v1h-1zM798 505h1v1h-1zM817 503h1v1h-1zM788 522h1v1h-1zM689 497h1v1h-1zM770 509h1v1h-1zM731 496h1v1h-1zM738 511h1v1h-1zM781 523h1v1h-1zM682 517h1v1h-1zM745 519h1v1h-1zM731 499h1v1h-1zM810 513h1v1h-1zM656 521h1v1h-1zM722 511h1v1h-1zM754 516h1v1h-1zM748 480h1v1h-1zM772 510h1v1h-1zM690 523h1v1h-1zM826 525h1v1h-1zM772 514h1v1h-1zM683 495h1v1h-1zM758 518h1v1h-1zM701 499h1v1h-1zM747 526h1v1h-1zM712 526h1v1h-1zM661 522h1v1h-1zM748 511h1v1h-1zM817 525h1v1h-1zM709 485h1v1h-1zM718 481h1v1h-1zM710 524h1v1h-1zM770 521h1v1h-1zM644 520h1v1h-1zM755 498h1v1h-1zM739 494h1v1h-1zM745 504h1v1h-1zM658 522h1v1h-1zM771 493h1v1h-1zM732 512h1v1h-1zM658 520h1v1h-1zM717 490h1v1h-1zM716 504h1v1h-1zM705 519h1v1h-1zM707 505h1v1h-1zM763 518h1v1h-1zM729 478h1v1h-1zM656 499h1v1h-1zM711 482h1v1h-1zM741 517h1v1h-1zM706 503h1v1h-1zM787 525h1v1h-1zM719 523h1v1h-1zM772 513h1v1h-1zM699 502h1v1h-1zM813 489h1v1h-1zM826 523h1v1h-1zM760 493h1v1h-1zM721 484h1v1h-1zM714 519h1v1h-1zM747 525h1v1h-1zM638 515h1v1h-1zM753 495h1v1h-1zM718 522h1v1h-1zM776 489h1v1h-1zM809 491h1v1h-1zM674 522h1v1h-1zM669 515h1v1h-1zM701 485h1v1h-1zM727 498h1v1h-1zM698 492h1v1h-1zM811 516h1v1h-1zM809 508h1v1h-1zM724 504h1v1h-1zM787 504h1v1h-1zM786 503h1v1h-1zM667 522h1v1h-1zM748 511h1v1h-1zM795 498h1v1h-1zM821 524h1v1h-1zM699 505h1v1h-1zM696 482h1v1h-1zM750 478h1v1h-1zM665 516h1v1h-1zM706 505h1v1h-1zM708 485h1v1h-1zM710 502h1v1h-1zM779 490h1v1h-1zM752 521h1v1h-1zM722 510h1v1h-1zM725 497h1v1h-1zM756 506h1v1h-1zM789 512h1v1h-1zM813 519h1v1h-1zM803 500h1v1h-1zM835 524h1v1h-1zM689 516h1v1h-1zM772 514h1v1h-1zM677 517h1v1h-1zM783 515h1v1h-1zM671 513h1v1h-1zM749 506h1v1h-1zM720 498h1v1h-1zM689 506h1v1h-1zM674 516h1v1h-1zM707 525h1v1h-1zM762 500h1v1h-1zM726 501h1v1h-1zM821 498h1v1h-1zM822 526h1v1h-1zM736 520h1v1h-1zM695 492h1v1h-1zM772 495h1v1h-1zM782 477h1v1h-1zM706 491h1v1h-1zM761 495h1v1h-1zM742 491h1v1h-1zM679 504h1v1h-1zM822 502h1v1h-1zM799 482h1v1h-1zM753 498h1v1h-1zM693 505h1v1h-1zM720 512h1v1h-1zM812 522h1v1h-1zM644 524h1v1h-1zM703 524h1v1h-1zM825 504h1v1h-1zM793 500h1v1h-1zM681 494h1v1h-1zM667 502h1v1h-1zM655 508h1v1h-1zM773 517h1v1h-1zM810 499h1v1h-1zM659 517h1v1h-1zM758 508h1v1h-1zM689 496h1v1h-1zM728 486h1v1h-1zM811 525h1v1h-1zM798 499h1v1h-1zM762 518h1v1h-1zM672 515h1v1h-1zM767 493h1v1h-1zM706 510h1v1h-1zM739 522h1v1h-1zM776 525h1v1h-1zM665 525h1v1h-1zM800 512h1v1h-1zM674 516h1v1h-1zM798 509h1v1h-1zM702 485h1v1h-1zM805 521h1v1h-1zM642 519h1v1h-1zM632 521h1v1h-1zM792 498h1v1h-1zM677 494h1v1h-1zM737 487h1v1h-1zM791 515h1v1h-1zM672 508h1v1h-1zM681 489h1v1h-1zM772 508h1v1h-1zM655 516h1v1h-1zM659 519h1v1h-1zM785 524h1v1h-1zM692 485h1v1h-1zM800 505h1v1h-1z" fill="#9cb4c0" opacity="0.9"/>
<path d="M663 498h1v1h-1zM667 517h1v1h-1zM721 510h1v1h-1zM739 484h1v1h-1zM751 506h1v1h-1zM831 509h1v1h-1zM779 480h1v1h-1zM832 520h1v1h-1zM821 505h1v1h-1zM717 485h1v1h-1zM716 494h1v1h-1zM775 519h1v1h-1zM679 513h1v1h-1zM832 525h1v1h-1zM647 516h1v1h-1zM706 509h1v1h-1zM707 489h1v1h-1zM810 498h1v1h-1zM666 516h1v1h-1zM757 499h1v1h-1zM663 499h1v1h-1zM662 518h1v1h-1zM725 504h1v1h-1zM780 479h1v1h-1zM794 508h1v1h-1zM682 522h1v1h-1zM739 491h1v1h-1zM717 508h1v1h-1zM693 510h1v1h-1zM691 524h1v1h-1zM660 497h1v1h-1zM763 512h1v1h-1zM802 516h1v1h-1zM760 504h1v1h-1zM766 503h1v1h-1zM831 513h1v1h-1zM695 513h1v1h-1zM721 524h1v1h-1zM652 524h1v1h-1zM727 495h1v1h-1zM743 523h1v1h-1zM710 500h1v1h-1zM682 496h1v1h-1zM787 520h1v1h-1zM651 524h1v1h-1zM630 520h1v1h-1zM677 525h1v1h-1zM781 479h1v1h-1zM752 503h1v1h-1zM697 512h1v1h-1zM769 498h1v1h-1zM677 517h1v1h-1zM654 525h1v1h-1zM712 510h1v1h-1zM660 498h1v1h-1zM678 479h1v1h-1zM758 524h1v1h-1zM708 524h1v1h-1zM647 515h1v1h-1zM674 490h1v1h-1zM674 513h1v1h-1zM821 518h1v1h-1zM800 495h1v1h-1zM768 493h1v1h-1zM691 524h1v1h-1zM716 521h1v1h-1zM711 507h1v1h-1zM662 517h1v1h-1zM633 521h1v1h-1zM722 506h1v1h-1zM791 514h1v1h-1zM739 499h1v1h-1zM798 513h1v1h-1zM637 523h1v1h-1zM741 490h1v1h-1zM783 485h1v1h-1zM783 495h1v1h-1zM751 525h1v1h-1zM723 477h1v1h-1zM698 497h1v1h-1zM636 512h1v1h-1zM803 511h1v1h-1zM825 508h1v1h-1zM726 525h1v1h-1zM759 487h1v1h-1zM761 511h1v1h-1zM830 522h1v1h-1zM761 517h1v1h-1zM646 507h1v1h-1zM646 519h1v1h-1zM667 501h1v1h-1zM786 514h1v1h-1zM666 505h1v1h-1zM743 493h1v1h-1zM723 487h1v1h-1zM783 505h1v1h-1zM760 492h1v1h-1zM820 510h1v1h-1zM737 523h1v1h-1zM665 494h1v1h-1zM711 516h1v1h-1zM701 500h1v1h-1zM660 515h1v1h-1zM702 515h1v1h-1zM812 510h1v1h-1zM745 520h1v1h-1zM628 519h1v1h-1zM797 504h1v1h-1zM790 508h1v1h-1zM758 507h1v1h-1zM747 516h1v1h-1zM721 522h1v1h-1zM794 481h1v1h-1zM778 515h1v1h-1zM659 501h1v1h-1zM761 509h1v1h-1zM805 525h1v1h-1zM799 519h1v1h-1zM822 514h1v1h-1zM790 517h1v1h-1zM708 511h1v1h-1zM650 502h1v1h-1zM701 479h1v1h-1zM770 524h1v1h-1zM777 516h1v1h-1zM716 482h1v1h-1zM800 479h1v1h-1zM807 523h1v1h-1zM793 490h1v1h-1zM737 487h1v1h-1zM803 491h1v1h-1zM735 507h1v1h-1zM650 501h1v1h-1zM754 495h1v1h-1zM781 496h1v1h-1zM805 478h1v1h-1zM674 511h1v1h-1zM737 501h1v1h-1zM782 505h1v1h-1zM696 494h1v1h-1zM710 508h1v1h-1zM761 479h1v1h-1zM695 502h1v1h-1zM799 504h1v1h-1zM730 507h1v1h-1zM735 504h1v1h-1zM779 499h1v1h-1zM787 513h1v1h-1zM748 524h1v1h-1zM693 512h1v1h-1zM683 499h1v1h-1zM771 523h1v1h-1zM716 521h1v1h-1zM768 506h1v1h-1zM779 485h1v1h-1zM706 485h1v1h-1zM751 521h1v1h-1zM775 496h1v1h-1zM749 491h1v1h-1zM697 491h1v1h-1zM655 518h1v1h-1zM669 524h1v1h-1zM752 521h1v1h-1zM721 492h1v1h-1zM739 495h1v1h-1zM811 520h1v1h-1zM702 518h1v1h-1zM720 492h1v1h-1zM650 507h1v1h-1zM714 511h1v1h-1zM727 508h1v1h-1zM744 508h1v1h-1zM742 489h1v1h-1zM667 514h1v1h-1zM670 499h1v1h-1zM684 498h1v1h-1zM824 518h1v1h-1zM777 517h1v1h-1zM820 499h1v1h-1zM738 509h1v1h-1zM812 522h1v1h-1zM802 494h1v1h-1zM793 483h1v1h-1zM664 505h1v1h-1zM755 478h1v1h-1zM777 485h1v1h-1zM660 507h1v1h-1zM672 483h1v1h-1zM721 478h1v1h-1zM650 506h1v1h-1zM766 484h1v1h-1zM811 515h1v1h-1zM783 514h1v1h-1zM696 495h1v1h-1zM700 505h1v1h-1zM808 501h1v1h-1zM765 519h1v1h-1zM805 503h1v1h-1zM703 510h1v1h-1zM672 493h1v1h-1zM746 506h1v1h-1zM722 525h1v1h-1zM693 478h1v1h-1zM775 482h1v1h-1zM691 498h1v1h-1zM660 521h1v1h-1zM663 492h1v1h-1zM654 510h1v1h-1zM773 516h1v1h-1zM651 520h1v1h-1zM667 502h1v1h-1zM672 490h1v1h-1zM715 512h1v1h-1zM679 522h1v1h-1zM816 492h1v1h-1zM713 512h1v1h-1zM777 500h1v1h-1zM794 503h1v1h-1zM704 485h1v1h-1zM775 526h1v1h-1zM719 494h1v1h-1zM711 507h1v1h-1zM779 525h1v1h-1zM797 500h1v1h-1zM789 515h1v1h-1zM719 511h1v1h-1zM745 519h1v1h-1zM693 490h1v1h-1zM653 504h1v1h-1zM762 498h1v1h-1zM695 510h1v1h-1zM827 515h1v1h-1zM694 522h1v1h-1zM769 498h1v1h-1zM814 501h1v1h-1zM806 488h1v1h-1zM731 493h1v1h-1zM664 502h1v1h-1zM806 485h1v1h-1zM738 503h1v1h-1zM730 523h1v1h-1zM802 491h1v1h-1zM701 517h1v1h-1zM667 510h1v1h-1zM818 515h1v1h-1zM704 512h1v1h-1zM753 516h1v1h-1zM683 516h1v1h-1zM804 523h1v1h-1zM759 518h1v1h-1zM702 524h1v1h-1zM792 499h1v1h-1zM702 524h1v1h-1zM818 495h1v1h-1zM656 521h1v1h-1zM692 514h1v1h-1zM795 517h1v1h-1zM817 496h1v1h-1zM739 522h1v1h-1zM653 517h1v1h-1zM786 523h1v1h-1zM750 510h1v1h-1zM819 521h1v1h-1zM797 507h1v1h-1zM696 518h1v1h-1zM785 488h1v1h-1zM723 502h1v1h-1zM639 525h1v1h-1zM829 511h1v1h-1zM690 508h1v1h-1zM823 526h1v1h-1zM778 522h1v1h-1zM794 518h1v1h-1zM777 510h1v1h-1zM638 516h1v1h-1zM681 522h1v1h-1zM663 517h1v1h-1zM793 506h1v1h-1zM743 525h1v1h-1zM686 477h1v1h-1zM816 509h1v1h-1zM719 519h1v1h-1zM790 523h1v1h-1zM797 521h1v1h-1zM658 524h1v1h-1zM784 511h1v1h-1zM764 524h1v1h-1zM724 478h1v1h-1zM771 497h1v1h-1zM769 516h1v1h-1zM674 480h1v1h-1zM742 495h1v1h-1zM698 487h1v1h-1zM677 518h1v1h-1zM679 500h1v1h-1zM811 524h1v1h-1zM778 500h1v1h-1zM728 525h1v1h-1zM827 516h1v1h-1zM734 479h1v1h-1zM791 488h1v1h-1zM767 494h1v1h-1zM705 480h1v1h-1zM682 524h1v1h-1zM748 521h1v1h-1zM795 524h1v1h-1zM787 510h1v1h-1zM749 523h1v1h-1zM781 487h1v1h-1zM726 493h1v1h-1zM703 513h1v1h-1zM678 506h1v1h-1zM640 512h1v1h-1zM797 524h1v1h-1zM725 520h1v1h-1zM735 496h1v1h-1zM762 499h1v1h-1zM666 498h1v1h-1zM680 482h1v1h-1zM649 525h1v1h-1zM646 524h1v1h-1zM702 513h1v1h-1zM803 488h1v1h-1zM682 517h1v1h-1zM770 513h1v1h-1zM674 488h1v1h-1zM769 520h1v1h-1zM718 526h1v1h-1zM809 514h1v1h-1zM670 504h1v1h-1zM731 502h1v1h-1zM668 521h1v1h-1zM666 499h1v1h-1zM689 487h1v1h-1zM740 492h1v1h-1zM711 524h1v1h-1zM795 519h1v1h-1zM719 490h1v1h-1zM701 484h1v1h-1zM709 519h1v1h-1zM661 508h1v1h-1zM670 512h1v1h-1zM670 504h1v1h-1zM749 510h1v1h-1zM774 526h1v1h-1zM789 523h1v1h-1zM765 513h1v1h-1zM830 522h1v1h-1zM777 483h1v1h-1zM636 517h1v1h-1zM654 517h1v1h-1zM804 489h1v1h-1zM721 519h1v1h-1zM681 497h1v1h-1zM702 478h1v1h-1zM769 519h1v1h-1zM772 526h1v1h-1zM803 482h1v1h-1zM777 482h1v1h-1zM684 489h1v1h-1zM679 517h1v1h-1zM723 518h1v1h-1zM680 498h1v1h-1zM778 513h1v1h-1zM721 511h1v1h-1zM801 523h1v1h-1zM633 525h1v1h-1zM808 513h1v1h-1zM747 523h1v1h-1zM776 515h1v1h-1zM713 499h1v1h-1zM677 516h1v1h-1zM689 486h1v1h-1zM782 486h1v1h-1zM820 519h1v1h-1zM711 487h1v1h-1zM753 489h1v1h-1zM652 516h1v1h-1zM727 495h1v1h-1zM705 503h1v1h-1zM721 499h1v1h-1zM735 510h1v1h-1zM703 502h1v1h-1zM766 517h1v1h-1zM649 503h1v1h-1zM661 494h1v1h-1zM805 507h1v1h-1zM740 495h1v1h-1zM726 522h1v1h-1zM752 495h1v1h-1zM771 516h1v1h-1zM752 486h1v1h-1zM667 523h1v1h-1zM680 513h1v1h-1zM702 483h1v1h-1zM805 497h1v1h-1zM643 519h1v1h-1zM780 512h1v1h-1zM693 510h1v1h-1zM685 495h1v1h-1zM693 524h1v1h-1zM803 499h1v1h-1zM721 504h1v1h-1zM647 522h1v1h-1zM700 484h1v1h-1zM648 519h1v1h-1zM700 498h1v1h-1zM818 525h1v1h-1zM793 481h1v1h-1zM658 509h1v1h-1zM765 513h1v1h-1zM725 526h1v1h-1zM715 487h1v1h-1zM702 492h1v1h-1zM751 512h1v1h-1zM775 517h1v1h-1zM749 512h1v1h-1zM723 515h1v1h-1zM812 511h1v1h-1zM661 525h1v1h-1zM793 519h1v1h-1zM752 518h1v1h-1zM663 506h1v1h-1zM747 522h1v1h-1zM626 523h1v1h-1zM741 512h1v1h-1zM666 516h1v1h-1zM683 493h1v1h-1zM816 519h1v1h-1zM793 500h1v1h-1zM792 512h1v1h-1zM763 519h1v1h-1zM820 513h1v1h-1zM653 524h1v1h-1zM707 517h1v1h-1zM822 499h1v1h-1zM695 498h1v1h-1zM744 499h1v1h-1zM740 479h1v1h-1zM704 512h1v1h-1zM718 482h1v1h-1zM749 514h1v1h-1zM784 504h1v1h-1zM674 513h1v1h-1zM657 513h1v1h-1zM747 511h1v1h-1zM807 498h1v1h-1zM722 483h1v1h-1zM796 522h1v1h-1zM817 522h1v1h-1zM675 510h1v1h-1zM785 486h1v1h-1zM698 524h1v1h-1zM785 515h1v1h-1zM717 511h1v1h-1zM833 523h1v1h-1zM800 478h1v1h-1zM732 477h1v1h-1zM734 511h1v1h-1zM775 520h1v1h-1zM699 483h1v1h-1zM765 522h1v1h-1zM720 495h1v1h-1zM734 491h1v1h-1zM780 525h1v1h-1zM751 494h1v1h-1zM705 508h1v1h-1zM784 491h1v1h-1zM715 514h1v1h-1zM700 496h1v1h-1zM663 498h1v1h-1zM660 509h1v1h-1zM675 492h1v1h-1zM707 507h1v1h-1zM733 502h1v1h-1zM657 515h1v1h-1zM764 485h1v1h-1zM706 483h1v1h-1zM710 511h1v1h-1zM789 519h1v1h-1zM740 517h1v1h-1zM662 515h1v1h-1zM771 515h1v1h-1zM779 521h1v1h-1zM765 526h1v1h-1zM782 524h1v1h-1zM747 510h1v1h-1zM809 520h1v1h-1zM806 494h1v1h-1zM740 526h1v1h-1zM801 482h1v1h-1zM802 510h1v1h-1zM683 499h1v1h-1zM663 520h1v1h-1zM826 506h1v1h-1zM787 493h1v1h-1zM785 507h1v1h-1zM705 504h1v1h-1zM670 519h1v1h-1zM770 523h1v1h-1zM733 520h1v1h-1zM775 513h1v1h-1zM714 494h1v1h-1zM797 513h1v1h-1zM714 525h1v1h-1zM732 526h1v1h-1zM749 513h1v1h-1zM781 512h1v1h-1zM761 519h1v1h-1zM664 509h1v1h-1zM714 497h1v1h-1zM748 502h1v1h-1zM718 485h1v1h-1zM769 505h1v1h-1zM787 519h1v1h-1zM767 520h1v1h-1zM789 525h1v1h-1zM833 513h1v1h-1zM739 494h1v1h-1zM790 501h1v1h-1zM806 491h1v1h-1zM702 521h1v1h-1zM732 501h1v1h-1zM732 500h1v1h-1zM638 525h1v1h-1zM669 515h1v1h-1zM775 494h1v1h-1zM774 518h1v1h-1zM664 506h1v1h-1zM746 521h1v1h-1zM687 505h1v1h-1zM775 500h1v1h-1zM711 501h1v1h-1zM814 504h1v1h-1zM650 514h1v1h-1zM755 518h1v1h-1zM648 520h1v1h-1zM731 523h1v1h-1zM680 512h1v1h-1zM694 515h1v1h-1zM775 502h1v1h-1zM687 519h1v1h-1zM714 497h1v1h-1zM770 495h1v1h-1zM665 502h1v1h-1zM714 509h1v1h-1zM761 487h1v1h-1zM827 516h1v1h-1zM724 508h1v1h-1zM791 502h1v1h-1zM721 514h1v1h-1zM689 522h1v1h-1zM765 512h1v1h-1zM690 489h1v1h-1zM766 507h1v1h-1zM741 495h1v1h-1zM725 498h1v1h-1zM752 491h1v1h-1zM692 487h1v1h-1zM709 523h1v1h-1zM708 518h1v1h-1zM740 509h1v1h-1zM684 505h1v1h-1zM697 524h1v1h-1zM674 520h1v1h-1zM771 497h1v1h-1zM665 519h1v1h-1zM710 519h1v1h-1zM701 480h1v1h-1zM805 492h1v1h-1zM814 507h1v1h-1zM791 485h1v1h-1zM665 514h1v1h-1zM714 485h1v1h-1zM685 508h1v1h-1zM693 502h1v1h-1zM688 513h1v1h-1zM680 518h1v1h-1zM738 501h1v1h-1zM820 499h1v1h-1zM810 516h1v1h-1zM788 482h1v1h-1zM772 505h1v1h-1zM774 520h1v1h-1zM791 516h1v1h-1zM704 491h1v1h-1zM717 483h1v1h-1zM646 517h1v1h-1zM667 509h1v1h-1zM793 520h1v1h-1zM752 502h1v1h-1zM715 492h1v1h-1zM737 486h1v1h-1zM787 518h1v1h-1zM798 514h1v1h-1zM815 491h1v1h-1zM774 485h1v1h-1zM732 515h1v1h-1zM813 514h1v1h-1zM705 509h1v1h-1zM687 510h1v1h-1zM691 494h1v1h-1zM656 498h1v1h-1zM633 526h1v1h-1zM715 503h1v1h-1zM701 478h1v1h-1zM758 524h1v1h-1zM723 510h1v1h-1zM693 499h1v1h-1zM748 503h1v1h-1zM668 504h1v1h-1zM723 501h1v1h-1zM795 517h1v1h-1zM738 514h1v1h-1zM627 523h1v1h-1zM682 488h1v1h-1zM787 502h1v1h-1zM825 510h1v1h-1zM750 483h1v1h-1zM813 515h1v1h-1zM780 526h1v1h-1zM743 496h1v1h-1zM744 488h1v1h-1zM788 483h1v1h-1zM643 515h1v1h-1zM814 510h1v1h-1zM655 499h1v1h-1zM739 511h1v1h-1zM640 509h1v1h-1zM640 520h1v1h-1zM664 509h1v1h-1zM759 526h1v1h-1zM712 519h1v1h-1zM626 523h1v1h-1zM733 516h1v1h-1zM781 526h1v1h-1zM737 495h1v1h-1zM694 513h1v1h-1zM715 498h1v1h-1zM697 508h1v1h-1zM677 505h1v1h-1zM758 524h1v1h-1zM693 518h1v1h-1zM767 494h1v1h-1zM738 506h1v1h-1zM669 516h1v1h-1zM710 488h1v1h-1zM817 500h1v1h-1zM784 512h1v1h-1zM656 515h1v1h-1zM752 504h1v1h-1zM719 480h1v1h-1zM692 503h1v1h-1zM807 481h1v1h-1zM819 521h1v1h-1zM819 498h1v1h-1zM643 509h1v1h-1zM720 513h1v1h-1zM799 516h1v1h-1zM787 520h1v1h-1zM798 481h1v1h-1zM798 525h1v1h-1zM737 484h1v1h-1zM801 493h1v1h-1zM672 514h1v1h-1zM766 484h1v1h-1zM664 506h1v1h-1zM727 511h1v1h-1zM677 524h1v1h-1zM716 516h1v1h-1zM759 505h1v1h-1zM793 485h1v1h-1zM689 514h1v1h-1zM718 497h1v1h-1zM665 523h1v1h-1zM685 514h1v1h-1zM781 498h1v1h-1zM809 508h1v1h-1zM815 511h1v1h-1zM817 512h1v1h-1zM825 503h1v1h-1zM721 490h1v1h-1zM793 520h1v1h-1zM775 522h1v1h-1zM747 486h1v1h-1zM775 523h1v1h-1zM802 510h1v1h-1zM708 507h1v1h-1zM795 477h1v1h-1zM798 513h1v1h-1zM732 501h1v1h-1zM668 511h1v1h-1zM774 486h1v1h-1zM802 493h1v1h-1zM753 479h1v1h-1zM768 511h1v1h-1zM792 491h1v1h-1zM688 510h1v1h-1zM745 518h1v1h-1zM774 501h1v1h-1zM785 498h1v1h-1zM783 489h1v1h-1zM690 503h1v1h-1zM764 507h1v1h-1zM698 526h1v1h-1zM718 507h1v1h-1zM671 504h1v1h-1zM774 495h1v1h-1zM721 514h1v1h-1zM788 504h1v1h-1zM798 490h1v1h-1zM746 503h1v1h-1zM751 483h1v1h-1zM655 515h1v1h-1zM737 521h1v1h-1zM772 478h1v1h-1zM635 524h1v1h-1zM709 503h1v1h-1zM679 522h1v1h-1zM643 524h1v1h-1zM820 515h1v1h-1zM684 524h1v1h-1zM751 486h1v1h-1zM758 500h1v1h-1zM646 520h1v1h-1zM771 513h1v1h-1zM746 503h1v1h-1zM677 487h1v1h-1zM671 493h1v1h-1zM680 481h1v1h-1zM752 503h1v1h-1zM702 487h1v1h-1zM724 512h1v1h-1zM709 520h1v1h-1zM689 497h1v1h-1zM827 516h1v1h-1zM730 522h1v1h-1zM669 511h1v1h-1zM669 502h1v1h-1zM768 513h1v1h-1zM718 494h1v1h-1zM786 507h1v1h-1zM773 524h1v1h-1zM809 501h1v1h-1zM824 506h1v1h-1zM719 496h1v1h-1zM781 525h1v1h-1zM679 500h1v1h-1zM737 483h1v1h-1zM721 496h1v1h-1zM768 482h1v1h-1zM795 525h1v1h-1zM807 523h1v1h-1zM796 523h1v1h-1zM726 501h1v1h-1zM800 520h1v1h-1zM790 479h1v1h-1zM663 505h1v1h-1zM834 518h1v1h-1zM698 514h1v1h-1zM767 496h1v1h-1zM782 516h1v1h-1zM759 524h1v1h-1zM664 513h1v1h-1zM769 489h1v1h-1zM824 501h1v1h-1zM815 490h1v1h-1zM653 521h1v1h-1zM693 497h1v1h-1zM758 490h1v1h-1zM662 502h1v1h-1zM746 477h1v1h-1zM663 511h1v1h-1zM786 507h1v1h-1zM699 515h1v1h-1zM777 521h1v1h-1zM787 518h1v1h-1zM630 520h1v1h-1zM821 520h1v1h-1zM689 522h1v1h-1zM632 523h1v1h-1zM650 525h1v1h-1zM762 523h1v1h-1zM650 509h1v1h-1zM789 517h1v1h-1zM754 521h1v1h-1zM760 493h1v1h-1zM739 488h1v1h-1zM680 511h1v1h-1zM769 519h1v1h-1zM726 482h1v1h-1zM679 506h1v1h-1zM706 519h1v1h-1zM694 503h1v1h-1zM794 503h1v1h-1zM792 504h1v1h-1zM783 490h1v1h-1zM674 507h1v1h-1zM631 518h1v1h-1zM782 489h1v1h-1zM729 503h1v1h-1zM697 490h1v1h-1zM789 498h1v1h-1zM815 518h1v1h-1zM718 497h1v1h-1zM672 500h1v1h-1z" fill="#6f9ca4" opacity="0.9"/>
<path d="M794 498h1v1h-1zM711 508h1v1h-1zM727 506h1v1h-1zM787 510h1v1h-1zM827 518h1v1h-1zM767 496h1v1h-1zM802 520h1v1h-1zM701 486h1v1h-1zM797 520h1v1h-1zM696 477h1v1h-1zM663 501h1v1h-1zM788 503h1v1h-1zM660 494h1v1h-1zM698 488h1v1h-1zM794 522h1v1h-1zM816 503h1v1h-1zM691 506h1v1h-1zM741 503h1v1h-1zM746 513h1v1h-1zM772 502h1v1h-1zM658 521h1v1h-1zM708 502h1v1h-1zM759 493h1v1h-1zM683 517h1v1h-1zM641 519h1v1h-1zM689 503h1v1h-1zM659 494h1v1h-1zM691 480h1v1h-1zM733 491h1v1h-1zM683 502h1v1h-1zM782 503h1v1h-1zM816 518h1v1h-1zM772 521h1v1h-1zM733 510h1v1h-1zM684 513h1v1h-1zM758 515h1v1h-1zM773 510h1v1h-1zM808 487h1v1h-1zM703 499h1v1h-1zM809 491h1v1h-1zM764 514h1v1h-1zM831 513h1v1h-1zM674 499h1v1h-1zM742 497h1v1h-1zM805 508h1v1h-1zM814 512h1v1h-1zM781 523h1v1h-1zM764 522h1v1h-1zM756 488h1v1h-1zM768 501h1v1h-1zM783 516h1v1h-1zM681 501h1v1h-1zM695 523h1v1h-1zM685 493h1v1h-1zM809 495h1v1h-1zM679 522h1v1h-1zM698 512h1v1h-1zM791 517h1v1h-1zM683 514h1v1h-1zM775 501h1v1h-1zM704 505h1v1h-1zM678 491h1v1h-1zM720 488h1v1h-1zM656 504h1v1h-1zM703 526h1v1h-1zM804 497h1v1h-1zM647 522h1v1h-1zM667 518h1v1h-1zM640 514h1v1h-1zM727 499h1v1h-1zM737 486h1v1h-1zM655 508h1v1h-1zM731 525h1v1h-1zM790 490h1v1h-1zM699 479h1v1h-1zM762 503h1v1h-1zM777 486h1v1h-1zM809 502h1v1h-1zM680 506h1v1h-1zM748 509h1v1h-1zM780 500h1v1h-1zM748 490h1v1h-1zM628 520h1v1h-1zM806 511h1v1h-1zM655 522h1v1h-1zM647 513h1v1h-1zM681 487h1v1h-1zM708 512h1v1h-1zM785 498h1v1h-1zM832 514h1v1h-1zM760 516h1v1h-1zM710 494h1v1h-1zM676 520h1v1h-1zM782 516h1v1h-1zM761 502h1v1h-1zM775 515h1v1h-1zM688 508h1v1h-1zM789 509h1v1h-1zM744 505h1v1h-1zM772 498h1v1h-1zM730 508h1v1h-1zM684 519h1v1h-1zM767 524h1v1h-1zM796 521h1v1h-1zM669 518h1v1h-1zM737 480h1v1h-1zM695 523h1v1h-1zM713 518h1v1h-1zM812 512h1v1h-1zM754 511h1v1h-1zM727 492h1v1h-1zM727 525h1v1h-1zM772 478h1v1h-1zM651 513h1v1h-1zM725 505h1v1h-1zM748 515h1v1h-1zM799 521h1v1h-1zM699 522h1v1h-1zM770 507h1v1h-1zM733 503h1v1h-1zM741 497h1v1h-1zM813 526h1v1h-1zM724 520h1v1h-1zM672 526h1v1h-1zM635 525h1v1h-1zM738 483h1v1h-1zM813 523h1v1h-1zM760 500h1v1h-1zM739 485h1v1h-1zM693 490h1v1h-1zM751 488h1v1h-1zM751 517h1v1h-1zM683 520h1v1h-1zM727 502h1v1h-1zM830 520h1v1h-1zM681 486h1v1h-1zM750 506h1v1h-1zM728 483h1v1h-1zM826 517h1v1h-1zM801 522h1v1h-1zM824 515h1v1h-1zM691 510h1v1h-1zM672 503h1v1h-1zM764 505h1v1h-1zM753 496h1v1h-1zM688 525h1v1h-1zM717 485h1v1h-1zM795 483h1v1h-1zM811 515h1v1h-1zM715 504h1v1h-1zM770 502h1v1h-1zM730 524h1v1h-1zM647 508h1v1h-1zM747 501h1v1h-1zM757 517h1v1h-1zM751 521h1v1h-1zM759 499h1v1h-1zM800 492h1v1h-1zM716 503h1v1h-1zM704 510h1v1h-1zM798 518h1v1h-1zM688 502h1v1h-1zM757 489h1v1h-1zM793 486h1v1h-1zM716 480h1v1h-1zM706 510h1v1h-1zM777 513h1v1h-1zM762 492h1v1h-1zM783 482h1v1h-1zM687 518h1v1h-1zM721 511h1v1h-1zM712 487h1v1h-1zM700 523h1v1h-1zM652 518h1v1h-1zM713 500h1v1h-1zM819 508h1v1h-1zM802 515h1v1h-1zM731 523h1v1h-1zM734 479h1v1h-1zM818 517h1v1h-1zM759 524h1v1h-1zM721 505h1v1h-1zM746 482h1v1h-1zM657 506h1v1h-1zM773 492h1v1h-1zM771 514h1v1h-1zM687 510h1v1h-1zM668 516h1v1h-1zM714 510h1v1h-1zM714 496h1v1h-1zM740 490h1v1h-1zM761 508h1v1h-1zM707 508h1v1h-1zM678 494h1v1h-1zM701 525h1v1h-1zM665 490h1v1h-1zM828 513h1v1h-1zM669 522h1v1h-1zM734 490h1v1h-1zM780 484h1v1h-1zM704 506h1v1h-1zM817 503h1v1h-1zM747 502h1v1h-1zM830 522h1v1h-1zM763 514h1v1h-1zM727 506h1v1h-1zM625 525h1v1h-1zM780 522h1v1h-1zM689 502h1v1h-1zM731 484h1v1h-1zM812 501h1v1h-1zM720 502h1v1h-1zM819 498h1v1h-1zM695 495h1v1h-1zM806 514h1v1h-1zM770 507h1v1h-1zM688 500h1v1h-1zM635 520h1v1h-1zM789 494h1v1h-1zM767 484h1v1h-1zM751 487h1v1h-1zM703 517h1v1h-1zM702 510h1v1h-1zM807 500h1v1h-1zM654 505h1v1h-1zM802 526h1v1h-1zM661 498h1v1h-1zM714 503h1v1h-1zM720 503h1v1h-1zM642 519h1v1h-1zM658 518h1v1h-1zM667 511h1v1h-1zM659 496h1v1h-1zM654 518h1v1h-1zM802 501h1v1h-1zM824 506h1v1h-1zM669 513h1v1h-1zM752 483h1v1h-1zM812 518h1v1h-1zM726 487h1v1h-1zM772 505h1v1h-1zM686 505h1v1h-1zM812 500h1v1h-1zM697 484h1v1h-1zM678 508h1v1h-1zM770 524h1v1h-1zM793 517h1v1h-1zM777 511h1v1h-1zM756 498h1v1h-1zM768 483h1v1h-1zM757 521h1v1h-1zM736 519h1v1h-1zM712 508h1v1h-1zM772 518h1v1h-1zM651 505h1v1h-1zM771 516h1v1h-1zM776 485h1v1h-1zM762 518h1v1h-1zM812 494h1v1h-1zM826 509h1v1h-1zM790 496h1v1h-1zM804 516h1v1h-1zM765 517h1v1h-1zM698 487h1v1h-1zM666 508h1v1h-1zM799 518h1v1h-1zM779 508h1v1h-1zM726 512h1v1h-1zM824 523h1v1h-1zM666 492h1v1h-1zM794 500h1v1h-1zM719 525h1v1h-1zM730 520h1v1h-1zM773 509h1v1h-1zM807 489h1v1h-1zM777 478h1v1h-1zM624 522h1v1h-1zM748 480h1v1h-1zM649 519h1v1h-1zM754 511h1v1h-1zM820 516h1v1h-1zM686 512h1v1h-1zM788 526h1v1h-1zM788 482h1v1h-1zM643 524h1v1h-1zM702 489h1v1h-1zM754 509h1v1h-1zM690 511h1v1h-1zM794 494h1v1h-1zM673 509h1v1h-1zM703 524h1v1h-1zM786 489h1v1h-1zM762 495h1v1h-1zM671 498h1v1h-1zM671 499h1v1h-1zM738 523h1v1h-1zM706 499h1v1h-1zM688 503h1v1h-1zM705 519h1v1h-1zM711 523h1v1h-1zM723 526h1v1h-1zM703 484h1v1h-1zM727 506h1v1h-1zM766 517h1v1h-1zM687 511h1v1h-1zM817 498h1v1h-1zM696 488h1v1h-1zM722 512h1v1h-1zM813 519h1v1h-1zM670 490h1v1h-1zM775 496h1v1h-1zM794 516h1v1h-1zM686 490h1v1h-1zM775 492h1v1h-1zM775 495h1v1h-1zM681 510h1v1h-1zM808 479h1v1h-1zM807 482h1v1h-1zM798 503h1v1h-1zM818 500h1v1h-1zM697 494h1v1h-1zM718 490h1v1h-1zM810 508h1v1h-1zM796 496h1v1h-1zM810 515h1v1h-1zM673 513h1v1h-1zM721 512h1v1h-1zM820 512h1v1h-1zM668 522h1v1h-1zM718 516h1v1h-1zM681 514h1v1h-1zM785 512h1v1h-1zM771 516h1v1h-1zM698 507h1v1h-1zM817 501h1v1h-1zM727 497h1v1h-1zM719 504h1v1h-1zM808 495h1v1h-1zM830 522h1v1h-1zM787 520h1v1h-1zM702 525h1v1h-1zM705 506h1v1h-1zM771 496h1v1h-1zM758 523h1v1h-1zM686 514h1v1h-1zM781 481h1v1h-1zM777 501h1v1h-1zM725 514h1v1h-1zM781 504h1v1h-1zM781 512h1v1h-1zM708 502h1v1h-1zM757 521h1v1h-1zM799 522h1v1h-1zM736 500h1v1h-1zM773 523h1v1h-1zM814 489h1v1h-1zM692 524h1v1h-1zM736 520h1v1h-1zM841 524h1v1h-1zM720 504h1v1h-1zM717 500h1v1h-1zM755 522h1v1h-1zM759 485h1v1h-1zM696 526h1v1h-1zM645 522h1v1h-1zM739 484h1v1h-1zM653 516h1v1h-1zM795 522h1v1h-1zM734 502h1v1h-1zM714 502h1v1h-1zM770 509h1v1h-1zM714 501h1v1h-1zM810 522h1v1h-1zM754 496h1v1h-1zM750 506h1v1h-1zM806 495h1v1h-1zM635 525h1v1h-1zM736 481h1v1h-1zM660 525h1v1h-1zM699 518h1v1h-1zM725 516h1v1h-1zM687 511h1v1h-1zM684 505h1v1h-1zM782 525h1v1h-1zM773 518h1v1h-1zM692 483h1v1h-1zM728 511h1v1h-1zM702 520h1v1h-1zM671 516h1v1h-1zM760 506h1v1h-1zM674 502h1v1h-1zM744 500h1v1h-1zM748 515h1v1h-1zM711 509h1v1h-1zM709 523h1v1h-1zM747 509h1v1h-1zM836 520h1v1h-1zM766 508h1v1h-1zM774 483h1v1h-1zM722 502h1v1h-1zM711 518h1v1h-1zM783 499h1v1h-1zM810 499h1v1h-1zM639 512h1v1h-1zM775 479h1v1h-1zM752 511h1v1h-1zM777 502h1v1h-1zM679 523h1v1h-1zM758 490h1v1h-1zM772 509h1v1h-1zM739 505h1v1h-1zM806 523h1v1h-1zM773 485h1v1h-1zM804 477h1v1h-1zM821 495h1v1h-1zM661 517h1v1h-1zM748 517h1v1h-1zM697 514h1v1h-1zM740 484h1v1h-1zM653 499h1v1h-1zM763 496h1v1h-1zM653 507h1v1h-1zM678 521h1v1h-1zM760 524h1v1h-1zM638 520h1v1h-1zM827 515h1v1h-1zM824 515h1v1h-1zM747 519h1v1h-1zM769 511h1v1h-1zM765 481h1v1h-1zM661 511h1v1h-1zM702 490h1v1h-1zM742 492h1v1h-1zM807 508h1v1h-1zM721 488h1v1h-1zM725 494h1v1h-1zM682 505h1v1h-1zM692 517h1v1h-1zM760 513h1v1h-1zM765 506h1v1h-1zM794 520h1v1h-1zM706 525h1v1h-1zM779 479h1v1h-1zM672 494h1v1h-1zM682 484h1v1h-1zM832 524h1v1h-1zM693 518h1v1h-1zM704 499h1v1h-1zM707 500h1v1h-1zM683 511h1v1h-1zM821 498h1v1h-1zM805 508h1v1h-1zM668 521h1v1h-1zM807 482h1v1h-1zM728 516h1v1h-1zM780 512h1v1h-1zM676 513h1v1h-1zM646 526h1v1h-1zM698 490h1v1h-1zM694 514h1v1h-1zM784 512h1v1h-1zM667 505h1v1h-1zM818 495h1v1h-1zM728 516h1v1h-1zM659 507h1v1h-1zM792 499h1v1h-1zM750 483h1v1h-1zM695 485h1v1h-1zM811 498h1v1h-1zM703 520h1v1h-1zM698 493h1v1h-1zM752 517h1v1h-1zM833 516h1v1h-1zM813 498h1v1h-1zM814 513h1v1h-1zM773 519h1v1h-1zM823 519h1v1h-1zM695 520h1v1h-1zM700 517h1v1h-1zM693 516h1v1h-1zM720 503h1v1h-1zM664 515h1v1h-1zM732 513h1v1h-1zM659 519h1v1h-1zM700 493h1v1h-1zM830 518h1v1h-1zM729 512h1v1h-1zM679 501h1v1h-1zM797 506h1v1h-1zM749 490h1v1h-1zM705 511h1v1h-1zM801 504h1v1h-1zM723 506h1v1h-1zM754 514h1v1h-1zM769 481h1v1h-1zM646 522h1v1h-1zM770 500h1v1h-1zM781 508h1v1h-1zM637 525h1v1h-1zM794 487h1v1h-1zM722 503h1v1h-1zM700 508h1v1h-1zM821 525h1v1h-1zM655 516h1v1h-1zM777 481h1v1h-1zM785 502h1v1h-1zM658 505h1v1h-1zM684 507h1v1h-1zM810 501h1v1h-1zM689 496h1v1h-1zM723 521h1v1h-1zM759 508h1v1h-1zM801 519h1v1h-1zM686 486h1v1h-1zM676 503h1v1h-1zM812 494h1v1h-1zM725 505h1v1h-1zM721 523h1v1h-1zM676 496h1v1h-1zM752 503h1v1h-1zM802 491h1v1h-1zM807 500h1v1h-1zM753 524h1v1h-1zM742 512h1v1h-1zM654 521h1v1h-1zM672 522h1v1h-1zM744 502h1v1h-1zM677 482h1v1h-1zM680 525h1v1h-1zM738 515h1v1h-1zM705 519h1v1h-1zM703 502h1v1h-1zM752 510h1v1h-1zM697 502h1v1h-1zM754 511h1v1h-1zM764 519h1v1h-1zM715 486h1v1h-1zM810 503h1v1h-1zM765 501h1v1h-1zM767 501h1v1h-1zM747 496h1v1h-1zM756 509h1v1h-1zM773 520h1v1h-1zM694 501h1v1h-1zM706 514h1v1h-1zM695 521h1v1h-1zM781 504h1v1h-1zM768 508h1v1h-1zM684 524h1v1h-1zM802 480h1v1h-1zM742 497h1v1h-1zM744 493h1v1h-1zM687 481h1v1h-1zM751 510h1v1h-1zM762 495h1v1h-1zM828 520h1v1h-1zM695 504h1v1h-1zM672 518h1v1h-1zM678 516h1v1h-1zM739 498h1v1h-1zM681 504h1v1h-1zM730 524h1v1h-1zM825 512h1v1h-1zM802 510h1v1h-1zM770 514h1v1h-1zM820 511h1v1h-1zM730 517h1v1h-1zM766 495h1v1h-1zM737 519h1v1h-1zM755 488h1v1h-1zM642 517h1v1h-1zM814 495h1v1h-1zM664 518h1v1h-1zM758 487h1v1h-1zM701 512h1v1h-1zM693 490h1v1h-1zM691 520h1v1h-1zM837 516h1v1h-1zM772 511h1v1h-1zM663 500h1v1h-1zM704 523h1v1h-1zM772 524h1v1h-1zM669 505h1v1h-1zM781 526h1v1h-1zM739 480h1v1h-1zM669 492h1v1h-1zM634 520h1v1h-1zM671 524h1v1h-1zM683 510h1v1h-1zM696 503h1v1h-1zM736 520h1v1h-1zM712 497h1v1h-1zM718 509h1v1h-1zM654 504h1v1h-1zM702 486h1v1h-1zM700 516h1v1h-1zM771 512h1v1h-1zM721 504h1v1h-1zM654 518h1v1h-1zM785 509h1v1h-1zM780 481h1v1h-1zM745 523h1v1h-1zM653 517h1v1h-1zM654 515h1v1h-1zM783 517h1v1h-1zM778 494h1v1h-1zM721 523h1v1h-1zM671 500h1v1h-1zM792 492h1v1h-1zM731 516h1v1h-1zM677 496h1v1h-1zM743 494h1v1h-1zM799 501h1v1h-1zM635 520h1v1h-1zM796 492h1v1h-1zM750 513h1v1h-1zM740 479h1v1h-1zM823 509h1v1h-1zM799 514h1v1h-1zM678 512h1v1h-1zM804 514h1v1h-1zM774 512h1v1h-1zM799 503h1v1h-1zM796 522h1v1h-1zM777 505h1v1h-1zM706 490h1v1h-1zM763 494h1v1h-1zM656 508h1v1h-1zM737 499h1v1h-1zM714 482h1v1h-1zM816 520h1v1h-1zM728 498h1v1h-1zM832 516h1v1h-1zM770 515h1v1h-1zM784 493h1v1h-1zM718 514h1v1h-1zM760 525h1v1h-1zM786 495h1v1h-1zM798 497h1v1h-1zM708 520h1v1h-1zM751 504h1v1h-1zM819 521h1v1h-1zM688 479h1v1h-1zM727 485h1v1h-1zM698 524h1v1h-1zM739 483h1v1h-1zM814 521h1v1h-1zM737 492h1v1h-1zM755 489h1v1h-1zM729 511h1v1h-1zM723 517h1v1h-1zM682 508h1v1h-1zM735 485h1v1h-1zM785 509h1v1h-1zM697 496h1v1h-1zM797 479h1v1h-1zM672 514h1v1h-1zM695 521h1v1h-1zM656 510h1v1h-1zM724 514h1v1h-1zM764 483h1v1h-1zM826 517h1v1h-1zM676 507h1v1h-1zM740 500h1v1h-1zM736 514h1v1h-1zM636 521h1v1h-1zM672 511h1v1h-1zM648 518h1v1h-1zM685 517h1v1h-1zM743 488h1v1h-1zM743 516h1v1h-1zM713 506h1v1h-1zM800 503h1v1h-1zM723 512h1v1h-1zM691 497h1v1h-1zM774 497h1v1h-1zM798 480h1v1h-1zM784 506h1v1h-1zM653 516h1v1h-1zM785 480h1v1h-1zM744 497h1v1h-1zM702 482h1v1h-1zM744 490h1v1h-1zM733 493h1v1h-1zM703 522h1v1h-1zM758 505h1v1h-1zM722 510h1v1h-1zM713 521h1v1h-1zM644 525h1v1h-1zM756 508h1v1h-1zM801 510h1v1h-1zM777 503h1v1h-1zM774 511h1v1h-1zM754 483h1v1h-1zM766 517h1v1h-1zM678 498h1v1h-1zM689 513h1v1h-1zM764 521h1v1h-1zM773 505h1v1h-1zM773 483h1v1h-1zM781 502h1v1h-1zM691 512h1v1h-1zM781 504h1v1h-1zM814 504h1v1h-1zM738 489h1v1h-1zM736 490h1v1h-1zM803 520h1v1h-1zM720 507h1v1h-1zM749 495h1v1h-1zM777 522h1v1h-1zM805 521h1v1h-1zM761 490h1v1h-1zM700 522h1v1h-1zM753 523h1v1h-1zM658 495h1v1h-1zM747 519h1v1h-1zM769 506h1v1h-1zM803 496h1v1h-1zM645 520h1v1h-1zM818 512h1v1h-1zM718 522h1v1h-1zM771 517h1v1h-1zM798 488h1v1h-1zM746 495h1v1h-1zM800 506h1v1h-1zM775 496h1v1h-1zM794 504h1v1h-1zM661 510h1v1h-1zM646 521h1v1h-1zM651 507h1v1h-1zM700 504h1v1h-1zM768 500h1v1h-1zM668 496h1v1h-1zM694 503h1v1h-1zM769 519h1v1h-1zM705 502h1v1h-1zM718 521h1v1h-1zM803 526h1v1h-1zM823 515h1v1h-1zM741 505h1v1h-1zM763 517h1v1h-1zM775 525h1v1h-1zM787 523h1v1h-1zM787 513h1v1h-1zM763 494h1v1h-1zM769 487h1v1h-1zM691 497h1v1h-1zM718 497h1v1h-1zM737 503h1v1h-1zM750 491h1v1h-1zM646 512h1v1h-1zM712 512h1v1h-1zM763 518h1v1h-1zM698 525h1v1h-1zM791 508h1v1h-1zM643 510h1v1h-1zM685 480h1v1h-1zM799 477h1v1h-1zM709 504h1v1h-1zM731 492h1v1h-1zM668 523h1v1h-1zM778 479h1v1h-1zM725 480h1v1h-1zM787 488h1v1h-1zM698 495h1v1h-1zM666 508h1v1h-1zM735 521h1v1h-1zM808 506h1v1h-1zM771 524h1v1h-1zM718 519h1v1h-1zM752 518h1v1h-1zM752 499h1v1h-1zM699 513h1v1h-1zM832 523h1v1h-1zM660 509h1v1h-1zM762 514h1v1h-1zM801 489h1v1h-1zM661 496h1v1h-1zM748 513h1v1h-1zM816 521h1v1h-1zM793 489h1v1h-1zM780 490h1v1h-1zM645 513h1v1h-1zM783 516h1v1h-1zM763 524h1v1h-1zM701 478h1v1h-1zM691 512h1v1h-1zM755 494h1v1h-1zM661 497h1v1h-1zM754 518h1v1h-1zM797 505h1v1h-1zM695 488h1v1h-1zM741 511h1v1h-1zM695 502h1v1h-1zM689 526h1v1h-1zM794 498h1v1h-1zM698 508h1v1h-1zM793 518h1v1h-1zM825 519h1v1h-1zM729 497h1v1h-1zM819 495h1v1h-1zM763 496h1v1h-1zM739 512h1v1h-1zM815 497h1v1h-1zM651 501h1v1h-1zM663 499h1v1h-1z" fill="#dce8ee" opacity="0.85"/>
<path d="M708 490h1v1h-1zM749 489h1v1h-1zM797 493h1v1h-1zM817 502h1v1h-1zM814 488h1v1h-1zM705 488h1v1h-1zM717 503h1v1h-1zM722 493h1v1h-1zM717 493h1v1h-1zM814 494h1v1h-1zM772 492h1v1h-1zM721 492h1v1h-1zM721 492h1v1h-1zM735 494h1v1h-1zM702 506h1v1h-1zM730 489h1v1h-1zM806 491h1v1h-1zM761 506h1v1h-1zM758 503h1v1h-1zM744 493h1v1h-1zM703 506h1v1h-1zM780 506h1v1h-1zM778 506h1v1h-1zM718 503h1v1h-1zM711 487h1v1h-1zM701 506h1v1h-1zM768 492h1v1h-1zM800 490h1v1h-1zM713 493h1v1h-1zM768 491h1v1h-1zM725 508h1v1h-1zM719 505h1v1h-1zM740 489h1v1h-1zM814 494h1v1h-1zM778 490h1v1h-1zM722 505h1v1h-1zM798 503h1v1h-1zM807 507h1v1h-1zM788 504h1v1h-1zM770 490h1v1h-1zM784 492h1v1h-1zM793 505h1v1h-1zM748 503h1v1h-1zM756 505h1v1h-1zM818 505h1v1h-1zM740 494h1v1h-1zM723 508h1v1h-1zM724 487h1v1h-1zM796 492h1v1h-1zM700 495h1v1h-1zM770 506h1v1h-1zM729 505h1v1h-1zM742 504h1v1h-1zM726 503h1v1h-1zM802 490h1v1h-1zM728 504h1v1h-1zM715 490h1v1h-1zM767 509h1v1h-1zM819 494h1v1h-1zM765 486h1v1h-1zM777 491h1v1h-1zM732 504h1v1h-1zM703 503h1v1h-1zM814 505h1v1h-1zM696 495h1v1h-1zM812 493h1v1h-1zM727 503h1v1h-1zM787 504h1v1h-1zM792 493h1v1h-1zM717 489h1v1h-1zM761 489h1v1h-1zM730 490h1v1h-1zM818 492h1v1h-1zM758 488h1v1h-1zM698 503h1v1h-1zM807 508h1v1h-1zM767 508h1v1h-1zM749 490h1v1h-1zM811 490h1v1h-1zM698 495h1v1h-1zM812 491h1v1h-1zM729 489h1v1h-1zM713 496h1v1h-1zM699 509h1v1h-1zM769 490h1v1h-1zM734 492h1v1h-1zM753 489h1v1h-1zM729 488h1v1h-1zM750 491h1v1h-1zM816 509h1v1h-1zM789 490h1v1h-1zM735 493h1v1h-1zM695 491h1v1h-1zM704 494h1v1h-1zM731 494h1v1h-1zM716 507h1v1h-1zM712 501h1v1h-1zM734 505h1v1h-1zM781 494h1v1h-1zM715 501h1v1h-1zM756 494h1v1h-1zM706 491h1v1h-1zM731 503h1v1h-1zM709 507h1v1h-1zM743 503h1v1h-1zM740 490h1v1h-1zM794 503h1v1h-1zM787 506h1v1h-1zM762 494h1v1h-1zM760 505h1v1h-1zM743 507h1v1h-1zM727 507h1v1h-1zM738 504h1v1h-1zM753 505h1v1h-1zM760 487h1v1h-1zM710 490h1v1h-1zM788 507h1v1h-1zM702 504h1v1h-1zM707 490h1v1h-1zM782 505h1v1h-1zM796 487h1v1h-1zM780 509h1v1h-1zM776 492h1v1h-1zM753 507h1v1h-1zM795 490h1v1h-1zM805 494h1v1h-1zM692 493h1v1h-1zM749 493h1v1h-1zM805 491h1v1h-1zM725 502h1v1h-1zM706 508h1v1h-1zM765 505h1v1h-1zM757 504h1v1h-1zM777 490h1v1h-1zM800 489h1v1h-1zM794 511h1v1h-1zM774 490h1v1h-1zM793 502h1v1h-1zM731 507h1v1h-1zM812 503h1v1h-1zM756 506h1v1h-1zM737 488h1v1h-1zM705 505h1v1h-1zM761 492h1v1h-1zM790 492h1v1h-1zM724 491h1v1h-1zM742 492h1v1h-1zM754 493h1v1h-1zM815 507h1v1h-1zM723 505h1v1h-1zM706 503h1v1h-1zM721 508h1v1h-1zM777 504h1v1h-1zM809 509h1v1h-1zM806 506h1v1h-1zM805 507h1v1h-1zM719 508h1v1h-1zM733 495h1v1h-1zM789 506h1v1h-1zM757 502h1v1h-1zM691 490h1v1h-1zM711 504h1v1h-1zM756 508h1v1h-1zM699 506h1v1h-1zM766 508h1v1h-1zM708 492h1v1h-1zM812 491h1v1h-1zM819 489h1v1h-1zM705 504h1v1h-1zM764 508h1v1h-1zM774 490h1v1h-1zM762 503h1v1h-1zM758 493h1v1h-1zM759 509h1v1h-1zM758 491h1v1h-1zM794 489h1v1h-1zM813 492h1v1h-1zM705 502h1v1h-1zM744 489h1v1h-1zM782 493h1v1h-1zM710 508h1v1h-1zM805 494h1v1h-1zM811 506h1v1h-1zM790 506h1v1h-1zM748 505h1v1h-1zM768 493h1v1h-1zM785 506h1v1h-1zM747 492h1v1h-1zM729 503h1v1h-1zM819 503h1v1h-1zM697 490h1v1h-1zM759 493h1v1h-1zM706 504h1v1h-1zM724 504h1v1h-1zM759 491h1v1h-1zM760 489h1v1h-1zM720 488h1v1h-1zM813 508h1v1h-1zM755 504h1v1h-1zM744 490h1v1h-1zM714 491h1v1h-1zM731 504h1v1h-1zM710 488h1v1h-1zM717 489h1v1h-1zM727 492h1v1h-1zM695 488h1v1h-1zM742 489h1v1h-1zM793 504h1v1h-1zM691 505h1v1h-1zM757 509h1v1h-1zM810 486h1v1h-1zM707 503h1v1h-1zM787 507h1v1h-1zM787 510h1v1h-1zM781 489h1v1h-1zM692 491h1v1h-1zM781 489h1v1h-1zM763 506h1v1h-1zM789 496h1v1h-1zM692 502h1v1h-1zM775 506h1v1h-1zM809 508h1v1h-1zM752 489h1v1h-1zM722 504h1v1h-1zM776 489h1v1h-1zM809 505h1v1h-1zM719 491h1v1h-1zM729 502h1v1h-1zM745 491h1v1h-1zM769 507h1v1h-1zM749 493h1v1h-1zM770 488h1v1h-1zM787 505h1v1h-1zM713 505h1v1h-1zM804 507h1v1h-1zM808 507h1v1h-1zM728 502h1v1h-1zM706 490h1v1h-1zM759 503h1v1h-1zM779 505h1v1h-1zM772 505h1v1h-1zM775 493h1v1h-1zM695 502h1v1h-1zM754 504h1v1h-1zM754 507h1v1h-1zM788 491h1v1h-1zM767 507h1v1h-1zM759 508h1v1h-1zM754 505h1v1h-1zM746 491h1v1h-1zM786 492h1v1h-1zM806 490h1v1h-1zM738 489h1v1h-1zM747 503h1v1h-1zM750 507h1v1h-1zM721 490h1v1h-1zM707 502h1v1h-1zM737 490h1v1h-1zM777 504h1v1h-1zM731 489h1v1h-1zM721 490h1v1h-1zM780 501h1v1h-1zM752 495h1v1h-1zM731 493h1v1h-1zM711 491h1v1h-1zM761 503h1v1h-1zM781 503h1v1h-1zM701 507h1v1h-1zM750 501h1v1h-1zM817 507h1v1h-1zM753 505h1v1h-1zM730 505h1v1h-1zM778 505h1v1h-1zM786 504h1v1h-1zM817 486h1v1h-1zM816 490h1v1h-1zM800 504h1v1h-1zM716 489h1v1h-1zM709 488h1v1h-1zM777 503h1v1h-1zM757 504h1v1h-1zM706 504h1v1h-1zM702 506h1v1h-1zM710 503h1v1h-1zM808 504h1v1h-1zM760 502h1v1h-1zM761 488h1v1h-1zM744 505h1v1h-1zM719 501h1v1h-1zM729 507h1v1h-1zM754 491h1v1h-1zM808 509h1v1h-1zM747 507h1v1h-1zM818 488h1v1h-1zM800 495h1v1h-1zM706 492h1v1h-1zM690 493h1v1h-1zM753 505h1v1h-1zM711 505h1v1h-1zM755 504h1v1h-1z" fill="#a0e0d8" opacity="0.9"/>
<path d="M644 514h1v1h-1zM689 497h1v1h-1zM688 502h1v1h-1zM666 516h1v1h-1zM667 527h1v1h-1zM669 518h1v1h-1zM667 526h1v1h-1zM680 500h1v1h-1zM667 509h1v1h-1zM685 496h1v1h-1zM666 513h1v1h-1zM681 511h1v1h-1zM630 523h1v1h-1zM623 523h1v1h-1zM623 525h1v1h-1zM622 526h1v1h-1zM653 515h1v1h-1zM684 502h1v1h-1zM689 514h1v1h-1zM675 503h1v1h-1zM690 519h1v1h-1zM680 513h1v1h-1zM689 524h1v1h-1zM670 519h1v1h-1zM623 522h1v1h-1zM628 520h1v1h-1zM671 518h1v1h-1zM639 526h1v1h-1zM669 523h1v1h-1zM669 506h1v1h-1zM654 513h1v1h-1zM622 523h1v1h-1zM675 521h1v1h-1zM670 522h1v1h-1zM659 526h1v1h-1zM640 521h1v1h-1zM636 519h1v1h-1zM651 524h1v1h-1zM662 523h1v1h-1zM661 528h1v1h-1zM684 526h1v1h-1zM690 519h1v1h-1zM656 512h1v1h-1zM653 526h1v1h-1zM687 509h1v1h-1zM644 522h1v1h-1zM684 515h1v1h-1zM675 517h1v1h-1zM684 524h1v1h-1zM664 508h1v1h-1zM662 512h1v1h-1zM644 520h1v1h-1zM663 516h1v1h-1zM670 507h1v1h-1zM671 514h1v1h-1zM660 523h1v1h-1zM686 522h1v1h-1zM676 514h1v1h-1zM679 504h1v1h-1zM649 513h1v1h-1zM626 521h1v1h-1zM623 528h1v1h-1zM657 524h1v1h-1zM672 519h1v1h-1zM652 513h1v1h-1zM678 512h1v1h-1z" fill="#a9c0cc" opacity="0.8"/>
<path d="M661 525h1v1h-1zM824 531h1v1h-1zM653 527h1v1h-1zM788 534h1v1h-1zM660 527h1v1h-1zM627 527h1v1h-1zM796 530h1v1h-1zM802 530h1v1h-1zM885 533h1v1h-1zM647 530h1v1h-1zM623 529h1v1h-1zM817 530h1v1h-1zM868 531h1v1h-1zM620 528h1v1h-1zM724 528h1v1h-1zM842 531h1v1h-1zM636 527h1v1h-1zM795 528h1v1h-1zM643 530h1v1h-1zM683 534h1v1h-1zM736 525h1v1h-1zM765 523h1v1h-1zM640 527h1v1h-1zM775 527h1v1h-1zM717 529h1v1h-1zM764 528h1v1h-1zM763 532h1v1h-1zM675 527h1v1h-1zM717 527h1v1h-1zM624 527h1v1h-1zM893 529h1v1h-1zM650 529h1v1h-1zM610 529h1v1h-1zM769 529h1v1h-1zM879 530h1v1h-1zM688 526h1v1h-1zM801 530h1v1h-1zM672 527h1v1h-1zM725 525h1v1h-1zM777 527h1v1h-1zM683 528h1v1h-1zM637 527h1v1h-1zM609 526h1v1h-1zM740 528h1v1h-1zM766 530h1v1h-1zM775 530h1v1h-1zM723 524h1v1h-1zM741 529h1v1h-1zM821 532h1v1h-1zM622 529h1v1h-1zM663 529h1v1h-1zM652 530h1v1h-1zM876 529h1v1h-1zM627 530h1v1h-1zM713 529h1v1h-1zM864 527h1v1h-1zM784 528h1v1h-1zM847 528h1v1h-1zM736 530h1v1h-1zM836 531h1v1h-1zM623 529h1v1h-1zM803 532h1v1h-1zM741 528h1v1h-1zM776 527h1v1h-1zM617 523h1v1h-1zM772 532h1v1h-1zM704 525h1v1h-1zM741 525h1v1h-1zM726 531h1v1h-1zM671 525h1v1h-1zM799 529h1v1h-1zM838 531h1v1h-1zM711 531h1v1h-1zM857 529h1v1h-1zM643 528h1v1h-1zM854 530h1v1h-1zM863 528h1v1h-1zM886 530h1v1h-1zM718 528h1v1h-1zM872 531h1v1h-1zM838 526h1v1h-1zM848 529h1v1h-1zM799 532h1v1h-1zM858 532h1v1h-1zM743 526h1v1h-1zM661 530h1v1h-1zM671 526h1v1h-1zM639 522h1v1h-1zM798 529h1v1h-1zM653 528h1v1h-1zM694 528h1v1h-1zM714 528h1v1h-1zM785 529h1v1h-1zM848 523h1v1h-1zM661 526h1v1h-1zM766 528h1v1h-1zM779 528h1v1h-1zM799 530h1v1h-1zM858 529h1v1h-1zM883 527h1v1h-1zM679 525h1v1h-1zM795 528h1v1h-1zM606 524h1v1h-1zM665 528h1v1h-1zM720 531h1v1h-1zM763 529h1v1h-1zM779 530h1v1h-1zM866 528h1v1h-1zM810 527h1v1h-1zM693 530h1v1h-1zM621 527h1v1h-1zM692 529h1v1h-1zM850 531h1v1h-1zM654 528h1v1h-1zM708 528h1v1h-1zM839 530h1v1h-1zM651 527h1v1h-1zM793 529h1v1h-1zM640 524h1v1h-1zM611 528h1v1h-1zM662 532h1v1h-1zM800 531h1v1h-1zM676 529h1v1h-1zM747 528h1v1h-1zM817 529h1v1h-1zM620 528h1v1h-1zM659 532h1v1h-1zM693 527h1v1h-1zM620 527h1v1h-1zM864 529h1v1h-1zM871 531h1v1h-1zM831 526h1v1h-1zM846 527h1v1h-1zM610 530h1v1h-1zM807 524h1v1h-1zM833 532h1v1h-1zM737 528h1v1h-1zM784 527h1v1h-1zM608 528h1v1h-1zM809 531h1v1h-1zM871 528h1v1h-1zM790 527h1v1h-1zM648 528h1v1h-1zM824 532h1v1h-1zM727 528h1v1h-1zM697 527h1v1h-1zM655 526h1v1h-1zM638 530h1v1h-1zM875 533h1v1h-1zM706 529h1v1h-1zM877 530h1v1h-1zM806 530h1v1h-1zM715 530h1v1h-1zM733 526h1v1h-1zM797 529h1v1h-1zM662 527h1v1h-1zM795 529h1v1h-1zM653 528h1v1h-1zM730 531h1v1h-1zM720 530h1v1h-1zM691 529h1v1h-1zM625 525h1v1h-1zM779 532h1v1h-1zM891 530h1v1h-1zM673 529h1v1h-1zM674 530h1v1h-1zM652 528h1v1h-1zM841 532h1v1h-1zM829 533h1v1h-1zM790 530h1v1h-1zM683 532h1v1h-1zM645 528h1v1h-1zM679 527h1v1h-1zM879 533h1v1h-1zM871 532h1v1h-1zM742 526h1v1h-1zM622 528h1v1h-1zM639 529h1v1h-1zM645 528h1v1h-1zM691 529h1v1h-1zM853 530h1v1h-1zM852 532h1v1h-1zM611 528h1v1h-1zM615 526h1v1h-1zM863 530h1v1h-1zM884 529h1v1h-1zM773 528h1v1h-1zM615 527h1v1h-1zM810 529h1v1h-1zM616 527h1v1h-1zM772 528h1v1h-1zM857 531h1v1h-1zM769 531h1v1h-1zM814 532h1v1h-1zM770 531h1v1h-1zM794 529h1v1h-1zM622 528h1v1h-1zM730 530h1v1h-1zM754 531h1v1h-1zM622 530h1v1h-1zM679 528h1v1h-1zM701 528h1v1h-1zM840 529h1v1h-1zM654 526h1v1h-1zM823 530h1v1h-1zM727 528h1v1h-1zM764 529h1v1h-1zM844 528h1v1h-1zM782 531h1v1h-1zM804 525h1v1h-1zM800 529h1v1h-1zM714 530h1v1h-1zM840 528h1v1h-1zM867 529h1v1h-1zM755 532h1v1h-1zM818 529h1v1h-1zM706 531h1v1h-1zM801 529h1v1h-1zM723 528h1v1h-1zM712 529h1v1h-1zM725 529h1v1h-1zM663 527h1v1h-1zM792 525h1v1h-1zM612 529h1v1h-1zM734 531h1v1h-1zM708 526h1v1h-1zM755 529h1v1h-1zM629 528h1v1h-1zM672 529h1v1h-1zM688 528h1v1h-1zM767 528h1v1h-1zM695 526h1v1h-1zM705 532h1v1h-1zM715 529h1v1h-1zM690 529h1v1h-1zM649 531h1v1h-1zM700 530h1v1h-1zM758 530h1v1h-1zM701 532h1v1h-1zM623 531h1v1h-1zM725 529h1v1h-1zM691 529h1v1h-1zM733 528h1v1h-1zM716 527h1v1h-1zM866 528h1v1h-1zM667 527h1v1h-1zM833 531h1v1h-1zM852 529h1v1h-1zM714 528h1v1h-1zM676 529h1v1h-1zM676 530h1v1h-1zM881 533h1v1h-1zM698 529h1v1h-1zM774 528h1v1h-1zM662 530h1v1h-1zM777 528h1v1h-1zM836 527h1v1h-1zM812 529h1v1h-1zM743 527h1v1h-1zM650 528h1v1h-1zM671 531h1v1h-1zM611 528h1v1h-1zM660 526h1v1h-1zM892 529h1v1h-1zM867 533h1v1h-1zM890 532h1v1h-1zM822 531h1v1h-1zM788 529h1v1h-1zM804 530h1v1h-1zM843 527h1v1h-1zM703 529h1v1h-1zM884 527h1v1h-1zM700 526h1v1h-1zM826 527h1v1h-1zM808 530h1v1h-1zM698 530h1v1h-1zM794 532h1v1h-1zM641 529h1v1h-1zM662 528h1v1h-1zM814 532h1v1h-1zM880 530h1v1h-1zM854 531h1v1h-1zM776 532h1v1h-1zM644 527h1v1h-1zM711 529h1v1h-1zM689 531h1v1h-1zM855 531h1v1h-1zM895 529h1v1h-1zM884 527h1v1h-1zM879 533h1v1h-1zM818 528h1v1h-1zM828 532h1v1h-1zM704 528h1v1h-1zM651 528h1v1h-1zM836 528h1v1h-1zM730 532h1v1h-1zM811 529h1v1h-1zM799 530h1v1h-1zM680 529h1v1h-1zM749 531h1v1h-1zM863 529h1v1h-1zM733 527h1v1h-1zM779 530h1v1h-1zM781 530h1v1h-1zM878 529h1v1h-1zM886 529h1v1h-1zM836 530h1v1h-1zM616 530h1v1h-1zM826 530h1v1h-1zM813 533h1v1h-1zM830 528h1v1h-1zM616 527h1v1h-1zM778 532h1v1h-1zM830 530h1v1h-1zM647 526h1v1h-1zM650 529h1v1h-1zM664 527h1v1h-1zM650 528h1v1h-1zM670 532h1v1h-1zM638 527h1v1h-1zM772 529h1v1h-1zM679 529h1v1h-1zM794 534h1v1h-1zM689 529h1v1h-1zM707 530h1v1h-1zM644 528h1v1h-1zM743 528h1v1h-1zM774 531h1v1h-1zM881 529h1v1h-1zM714 529h1v1h-1zM852 529h1v1h-1zM678 529h1v1h-1zM672 527h1v1h-1zM800 531h1v1h-1zM814 531h1v1h-1zM844 530h1v1h-1zM859 530h1v1h-1zM806 528h1v1h-1zM628 528h1v1h-1zM849 528h1v1h-1zM850 527h1v1h-1zM879 531h1v1h-1zM864 528h1v1h-1zM709 527h1v1h-1zM804 531h1v1h-1zM631 530h1v1h-1zM633 527h1v1h-1zM666 527h1v1h-1zM880 529h1v1h-1zM748 531h1v1h-1zM659 532h1v1h-1zM864 530h1v1h-1zM693 532h1v1h-1zM878 528h1v1h-1zM657 529h1v1h-1zM632 529h1v1h-1zM809 532h1v1h-1zM709 529h1v1h-1zM817 533h1v1h-1zM883 531h1v1h-1zM692 526h1v1h-1zM694 530h1v1h-1zM851 531h1v1h-1zM742 529h1v1h-1zM648 526h1v1h-1zM887 529h1v1h-1zM816 533h1v1h-1zM844 529h1v1h-1zM717 528h1v1h-1zM707 528h1v1h-1zM872 531h1v1h-1zM749 529h1v1h-1zM723 527h1v1h-1zM681 527h1v1h-1zM860 526h1v1h-1zM815 531h1v1h-1zM889 527h1v1h-1zM829 529h1v1h-1zM672 532h1v1h-1zM807 530h1v1h-1zM823 530h1v1h-1zM860 528h1v1h-1zM791 532h1v1h-1zM856 529h1v1h-1zM622 529h1v1h-1zM799 532h1v1h-1zM718 533h1v1h-1zM627 530h1v1h-1zM863 530h1v1h-1zM777 532h1v1h-1zM674 528h1v1h-1zM760 530h1v1h-1zM686 527h1v1h-1zM641 528h1v1h-1zM807 529h1v1h-1zM723 534h1v1h-1zM682 528h1v1h-1zM713 525h1v1h-1zM818 526h1v1h-1zM693 534h1v1h-1zM617 531h1v1h-1zM787 529h1v1h-1zM689 527h1v1h-1zM711 530h1v1h-1zM661 526h1v1h-1zM614 527h1v1h-1zM861 530h1v1h-1zM669 531h1v1h-1zM801 527h1v1h-1zM724 530h1v1h-1zM753 534h1v1h-1zM729 532h1v1h-1zM702 530h1v1h-1zM835 528h1v1h-1zM729 531h1v1h-1zM687 530h1v1h-1zM664 533h1v1h-1zM742 529h1v1h-1zM839 529h1v1h-1zM643 527h1v1h-1zM774 530h1v1h-1zM778 532h1v1h-1zM670 529h1v1h-1zM745 524h1v1h-1zM886 530h1v1h-1zM740 529h1v1h-1zM708 531h1v1h-1zM884 529h1v1h-1zM653 528h1v1h-1zM621 528h1v1h-1zM812 531h1v1h-1zM732 529h1v1h-1zM872 530h1v1h-1zM809 530h1v1h-1zM807 532h1v1h-1zM856 533h1v1h-1zM877 531h1v1h-1zM809 527h1v1h-1zM642 527h1v1h-1zM703 527h1v1h-1zM696 532h1v1h-1zM827 531h1v1h-1zM609 528h1v1h-1zM764 529h1v1h-1zM654 530h1v1h-1zM757 529h1v1h-1zM682 529h1v1h-1zM694 528h1v1h-1zM671 528h1v1h-1zM855 528h1v1h-1zM701 530h1v1h-1zM631 530h1v1h-1zM650 526h1v1h-1zM668 528h1v1h-1zM658 526h1v1h-1zM745 529h1v1h-1zM800 530h1v1h-1zM625 528h1v1h-1zM836 529h1v1h-1zM702 528h1v1h-1zM695 530h1v1h-1zM812 528h1v1h-1zM631 530h1v1h-1zM791 530h1v1h-1zM735 531h1v1h-1zM798 527h1v1h-1zM894 534h1v1h-1zM632 527h1v1h-1zM722 530h1v1h-1zM752 531h1v1h-1zM633 530h1v1h-1zM787 530h1v1h-1zM723 526h1v1h-1zM808 530h1v1h-1zM811 528h1v1h-1zM857 530h1v1h-1zM618 528h1v1h-1zM778 530h1v1h-1zM786 531h1v1h-1zM772 531h1v1h-1zM804 532h1v1h-1zM684 530h1v1h-1zM717 531h1v1h-1zM785 532h1v1h-1zM841 529h1v1h-1zM722 529h1v1h-1zM629 531h1v1h-1zM606 530h1v1h-1zM718 532h1v1h-1zM892 531h1v1h-1zM615 524h1v1h-1zM679 533h1v1h-1zM696 533h1v1h-1zM718 528h1v1h-1zM800 530h1v1h-1zM607 526h1v1h-1zM714 527h1v1h-1zM734 524h1v1h-1zM725 527h1v1h-1zM612 530h1v1h-1zM870 530h1v1h-1zM608 528h1v1h-1zM697 531h1v1h-1zM857 532h1v1h-1zM764 530h1v1h-1zM663 528h1v1h-1zM717 528h1v1h-1zM872 530h1v1h-1zM823 529h1v1h-1zM688 530h1v1h-1zM720 527h1v1h-1zM881 527h1v1h-1zM629 529h1v1h-1zM881 532h1v1h-1zM738 528h1v1h-1zM739 525h1v1h-1zM715 529h1v1h-1zM893 527h1v1h-1zM684 531h1v1h-1zM857 529h1v1h-1zM791 526h1v1h-1zM629 527h1v1h-1zM687 525h1v1h-1zM660 529h1v1h-1zM831 531h1v1h-1zM740 530h1v1h-1zM813 526h1v1h-1zM806 529h1v1h-1zM717 527h1v1h-1zM858 529h1v1h-1zM694 529h1v1h-1zM678 530h1v1h-1zM840 529h1v1h-1zM727 527h1v1h-1zM865 531h1v1h-1zM879 530h1v1h-1zM623 530h1v1h-1zM882 530h1v1h-1zM615 526h1v1h-1zM843 525h1v1h-1zM771 530h1v1h-1zM879 531h1v1h-1zM856 530h1v1h-1zM783 531h1v1h-1zM694 530h1v1h-1zM638 532h1v1h-1zM789 527h1v1h-1zM858 531h1v1h-1zM822 530h1v1h-1zM840 529h1v1h-1zM835 531h1v1h-1zM817 529h1v1h-1zM857 526h1v1h-1zM631 527h1v1h-1zM681 530h1v1h-1zM671 525h1v1h-1zM771 526h1v1h-1zM721 530h1v1h-1zM698 529h1v1h-1zM711 526h1v1h-1zM812 529h1v1h-1zM660 531h1v1h-1zM705 528h1v1h-1zM696 529h1v1h-1zM708 528h1v1h-1zM866 532h1v1h-1zM852 529h1v1h-1zM631 529h1v1h-1zM862 530h1v1h-1zM868 527h1v1h-1zM722 529h1v1h-1zM721 530h1v1h-1zM828 531h1v1h-1zM630 529h1v1h-1zM668 526h1v1h-1zM878 529h1v1h-1zM699 529h1v1h-1zM660 529h1v1h-1zM616 529h1v1h-1zM761 529h1v1h-1zM738 531h1v1h-1zM631 527h1v1h-1zM648 527h1v1h-1zM823 524h1v1h-1zM674 527h1v1h-1zM731 531h1v1h-1zM688 529h1v1h-1zM860 530h1v1h-1zM888 532h1v1h-1zM805 529h1v1h-1zM666 529h1v1h-1zM702 529h1v1h-1zM837 528h1v1h-1zM745 529h1v1h-1zM762 530h1v1h-1zM875 532h1v1h-1zM735 532h1v1h-1zM643 528h1v1h-1zM871 529h1v1h-1zM661 526h1v1h-1zM796 530h1v1h-1zM650 530h1v1h-1zM726 531h1v1h-1zM754 528h1v1h-1zM785 528h1v1h-1zM688 526h1v1h-1zM667 525h1v1h-1zM858 527h1v1h-1zM747 528h1v1h-1zM620 531h1v1h-1zM750 530h1v1h-1zM632 523h1v1h-1zM664 526h1v1h-1zM885 530h1v1h-1zM637 530h1v1h-1zM835 531h1v1h-1zM614 526h1v1h-1zM728 531h1v1h-1zM658 531h1v1h-1zM753 530h1v1h-1zM762 528h1v1h-1zM722 526h1v1h-1zM712 529h1v1h-1zM830 529h1v1h-1zM739 527h1v1h-1zM878 530h1v1h-1zM694 528h1v1h-1zM864 530h1v1h-1zM846 531h1v1h-1zM689 529h1v1h-1zM614 524h1v1h-1zM814 529h1v1h-1zM751 531h1v1h-1zM698 528h1v1h-1zM683 527h1v1h-1zM642 527h1v1h-1zM748 533h1v1h-1zM786 528h1v1h-1zM855 527h1v1h-1zM807 530h1v1h-1zM664 526h1v1h-1zM692 527h1v1h-1zM750 530h1v1h-1zM639 531h1v1h-1zM735 531h1v1h-1zM634 529h1v1h-1zM844 533h1v1h-1zM692 529h1v1h-1zM882 529h1v1h-1zM799 530h1v1h-1zM676 529h1v1h-1zM683 526h1v1h-1zM777 529h1v1h-1zM630 530h1v1h-1zM675 529h1v1h-1zM726 530h1v1h-1zM736 527h1v1h-1zM803 528h1v1h-1zM783 525h1v1h-1zM647 529h1v1h-1zM685 533h1v1h-1zM860 530h1v1h-1zM724 530h1v1h-1zM875 528h1v1h-1zM866 529h1v1h-1zM726 530h1v1h-1zM882 528h1v1h-1zM613 528h1v1h-1zM717 531h1v1h-1zM836 529h1v1h-1zM865 533h1v1h-1zM750 528h1v1h-1zM693 532h1v1h-1zM821 528h1v1h-1zM622 526h1v1h-1zM645 526h1v1h-1zM700 527h1v1h-1zM637 529h1v1h-1zM650 528h1v1h-1zM835 530h1v1h-1zM727 529h1v1h-1zM697 530h1v1h-1zM779 529h1v1h-1zM813 527h1v1h-1zM772 530h1v1h-1zM827 527h1v1h-1zM613 527h1v1h-1zM846 530h1v1h-1zM653 530h1v1h-1zM650 527h1v1h-1zM808 530h1v1h-1zM733 531h1v1h-1zM789 526h1v1h-1zM835 529h1v1h-1zM886 528h1v1h-1zM749 528h1v1h-1zM706 530h1v1h-1zM807 527h1v1h-1zM843 528h1v1h-1zM737 525h1v1h-1zM807 531h1v1h-1zM843 528h1v1h-1zM687 531h1v1h-1zM765 532h1v1h-1zM884 529h1v1h-1zM641 527h1v1h-1zM866 530h1v1h-1zM759 530h1v1h-1zM813 529h1v1h-1zM832 529h1v1h-1zM801 527h1v1h-1zM749 533h1v1h-1zM828 531h1v1h-1zM825 530h1v1h-1zM804 528h1v1h-1zM614 525h1v1h-1zM853 531h1v1h-1zM693 529h1v1h-1zM750 531h1v1h-1zM646 529h1v1h-1zM703 528h1v1h-1zM838 530h1v1h-1zM615 529h1v1h-1zM723 533h1v1h-1zM879 529h1v1h-1zM758 531h1v1h-1zM723 531h1v1h-1zM836 529h1v1h-1zM753 527h1v1h-1zM873 533h1v1h-1zM610 525h1v1h-1zM753 527h1v1h-1zM723 529h1v1h-1zM743 528h1v1h-1zM664 531h1v1h-1zM721 526h1v1h-1zM833 527h1v1h-1zM675 528h1v1h-1zM829 526h1v1h-1zM682 523h1v1h-1zM722 529h1v1h-1zM827 528h1v1h-1zM852 531h1v1h-1zM690 531h1v1h-1zM685 526h1v1h-1zM790 532h1v1h-1zM717 527h1v1h-1zM663 525h1v1h-1zM856 527h1v1h-1zM855 529h1v1h-1zM668 525h1v1h-1zM611 529h1v1h-1zM719 527h1v1h-1zM752 528h1v1h-1zM848 532h1v1h-1zM688 531h1v1h-1zM630 527h1v1h-1zM739 529h1v1h-1zM655 527h1v1h-1zM894 530h1v1h-1zM667 526h1v1h-1zM801 530h1v1h-1zM643 529h1v1h-1zM630 527h1v1h-1zM730 527h1v1h-1zM816 528h1v1h-1zM696 530h1v1h-1zM842 525h1v1h-1zM624 526h1v1h-1zM717 530h1v1h-1zM660 528h1v1h-1zM654 528h1v1h-1zM727 531h1v1h-1zM885 530h1v1h-1zM801 527h1v1h-1zM774 526h1v1h-1zM820 526h1v1h-1zM859 530h1v1h-1zM606 528h1v1h-1zM791 529h1v1h-1zM627 528h1v1h-1zM645 526h1v1h-1zM850 530h1v1h-1zM717 533h1v1h-1zM767 526h1v1h-1zM708 530h1v1h-1zM754 529h1v1h-1zM638 530h1v1h-1zM682 528h1v1h-1zM648 531h1v1h-1zM650 531h1v1h-1zM631 528h1v1h-1zM856 530h1v1h-1zM884 527h1v1h-1zM760 529h1v1h-1zM632 528h1v1h-1zM740 525h1v1h-1zM626 527h1v1h-1zM627 530h1v1h-1zM877 531h1v1h-1zM832 532h1v1h-1zM658 529h1v1h-1zM671 528h1v1h-1zM691 530h1v1h-1zM671 527h1v1h-1zM769 531h1v1h-1zM817 529h1v1h-1zM771 530h1v1h-1zM696 529h1v1h-1zM879 532h1v1h-1zM779 529h1v1h-1zM763 529h1v1h-1zM808 532h1v1h-1zM621 526h1v1h-1zM891 533h1v1h-1zM742 529h1v1h-1zM874 533h1v1h-1zM630 527h1v1h-1zM793 531h1v1h-1zM644 530h1v1h-1zM693 531h1v1h-1zM633 529h1v1h-1zM676 529h1v1h-1zM773 528h1v1h-1zM856 527h1v1h-1zM875 527h1v1h-1zM677 531h1v1h-1zM871 536h1v1h-1zM699 529h1v1h-1zM672 528h1v1h-1zM856 533h1v1h-1zM670 531h1v1h-1zM829 531h1v1h-1zM772 531h1v1h-1zM767 529h1v1h-1zM811 529h1v1h-1zM852 528h1v1h-1zM836 529h1v1h-1zM730 529h1v1h-1zM827 533h1v1h-1zM844 529h1v1h-1zM613 528h1v1h-1zM766 532h1v1h-1zM644 529h1v1h-1zM830 533h1v1h-1zM670 529h1v1h-1zM895 528h1v1h-1zM851 530h1v1h-1zM688 530h1v1h-1zM617 528h1v1h-1zM687 527h1v1h-1zM625 530h1v1h-1zM867 530h1v1h-1zM892 527h1v1h-1zM621 527h1v1h-1zM658 525h1v1h-1zM725 530h1v1h-1zM742 533h1v1h-1zM846 530h1v1h-1zM822 532h1v1h-1zM705 529h1v1h-1zM788 530h1v1h-1zM725 529h1v1h-1zM698 530h1v1h-1zM642 527h1v1h-1zM668 528h1v1h-1zM710 532h1v1h-1zM667 528h1v1h-1zM850 531h1v1h-1zM836 529h1v1h-1zM788 525h1v1h-1zM800 528h1v1h-1zM793 531h1v1h-1zM636 527h1v1h-1zM608 528h1v1h-1zM859 528h1v1h-1zM887 530h1v1h-1zM772 530h1v1h-1zM612 529h1v1h-1zM692 529h1v1h-1zM734 530h1v1h-1zM825 532h1v1h-1zM847 526h1v1h-1zM836 529h1v1h-1zM816 528h1v1h-1zM844 532h1v1h-1zM677 528h1v1h-1zM780 529h1v1h-1zM639 527h1v1h-1zM639 529h1v1h-1zM863 527h1v1h-1zM819 534h1v1h-1zM776 526h1v1h-1zM840 530h1v1h-1zM661 527h1v1h-1zM660 528h1v1h-1zM669 530h1v1h-1zM731 524h1v1h-1zM656 529h1v1h-1zM713 530h1v1h-1zM861 527h1v1h-1zM787 529h1v1h-1zM657 527h1v1h-1zM625 530h1v1h-1zM694 526h1v1h-1zM683 527h1v1h-1zM627 527h1v1h-1zM607 528h1v1h-1zM884 529h1v1h-1zM698 524h1v1h-1zM829 531h1v1h-1zM616 526h1v1h-1zM685 527h1v1h-1zM771 531h1v1h-1zM660 528h1v1h-1zM722 529h1v1h-1zM640 528h1v1h-1zM850 530h1v1h-1zM672 526h1v1h-1zM618 528h1v1h-1zM764 530h1v1h-1zM788 528h1v1h-1zM815 528h1v1h-1zM754 528h1v1h-1zM799 526h1v1h-1zM823 531h1v1h-1zM823 528h1v1h-1zM656 529h1v1h-1zM692 528h1v1h-1zM696 528h1v1h-1zM649 527h1v1h-1zM844 529h1v1h-1zM624 526h1v1h-1zM847 532h1v1h-1zM719 533h1v1h-1zM769 528h1v1h-1zM701 530h1v1h-1zM623 531h1v1h-1zM794 529h1v1h-1zM784 531h1v1h-1zM719 530h1v1h-1zM834 530h1v1h-1zM718 529h1v1h-1zM607 525h1v1h-1zM705 527h1v1h-1zM644 527h1v1h-1zM895 529h1v1h-1zM734 532h1v1h-1zM892 530h1v1h-1zM794 530h1v1h-1zM806 530h1v1h-1zM657 528h1v1h-1zM743 529h1v1h-1zM647 529h1v1h-1zM619 527h1v1h-1zM614 529h1v1h-1zM633 527h1v1h-1zM706 526h1v1h-1zM839 532h1v1h-1zM876 530h1v1h-1zM621 529h1v1h-1zM707 531h1v1h-1zM626 530h1v1h-1zM775 526h1v1h-1zM726 527h1v1h-1zM770 528h1v1h-1zM699 530h1v1h-1zM674 526h1v1h-1zM775 530h1v1h-1zM700 526h1v1h-1zM763 529h1v1h-1zM862 529h1v1h-1zM724 527h1v1h-1zM826 531h1v1h-1zM655 529h1v1h-1zM611 530h1v1h-1zM732 530h1v1h-1zM712 530h1v1h-1zM865 529h1v1h-1zM790 528h1v1h-1zM753 531h1v1h-1zM809 529h1v1h-1zM839 530h1v1h-1zM755 529h1v1h-1zM716 525h1v1h-1zM732 530h1v1h-1zM763 529h1v1h-1zM775 525h1v1h-1zM758 531h1v1h-1zM661 530h1v1h-1zM829 529h1v1h-1zM773 528h1v1h-1zM859 531h1v1h-1zM712 527h1v1h-1zM759 524h1v1h-1zM852 532h1v1h-1zM864 531h1v1h-1zM879 530h1v1h-1zM710 529h1v1h-1zM721 532h1v1h-1zM666 530h1v1h-1zM630 528h1v1h-1zM720 530h1v1h-1zM737 526h1v1h-1zM723 531h1v1h-1zM825 532h1v1h-1zM669 526h1v1h-1zM710 525h1v1h-1zM673 528h1v1h-1zM720 526h1v1h-1zM607 527h1v1h-1zM660 531h1v1h-1zM745 529h1v1h-1zM642 526h1v1h-1zM801 528h1v1h-1zM868 527h1v1h-1zM713 527h1v1h-1zM853 530h1v1h-1zM701 529h1v1h-1zM844 532h1v1h-1zM821 531h1v1h-1zM891 533h1v1h-1zM703 529h1v1h-1zM784 526h1v1h-1zM673 532h1v1h-1zM702 529h1v1h-1zM844 532h1v1h-1zM818 526h1v1h-1zM816 531h1v1h-1zM872 526h1v1h-1zM860 528h1v1h-1zM632 532h1v1h-1zM659 530h1v1h-1zM882 528h1v1h-1zM702 530h1v1h-1zM861 530h1v1h-1zM840 527h1v1h-1zM616 529h1v1h-1zM877 530h1v1h-1zM747 530h1v1h-1zM744 526h1v1h-1zM659 529h1v1h-1zM836 529h1v1h-1zM865 532h1v1h-1zM820 529h1v1h-1zM728 525h1v1h-1zM706 525h1v1h-1zM656 528h1v1h-1zM809 525h1v1h-1zM811 530h1v1h-1zM873 528h1v1h-1zM678 530h1v1h-1zM666 528h1v1h-1zM787 531h1v1h-1zM770 529h1v1h-1zM886 527h1v1h-1zM758 527h1v1h-1zM744 527h1v1h-1zM704 528h1v1h-1zM753 531h1v1h-1zM734 526h1v1h-1zM891 529h1v1h-1zM775 531h1v1h-1zM782 529h1v1h-1zM774 527h1v1h-1zM674 529h1v1h-1zM890 533h1v1h-1zM745 531h1v1h-1zM706 527h1v1h-1zM703 533h1v1h-1zM773 527h1v1h-1zM767 531h1v1h-1zM760 529h1v1h-1zM794 530h1v1h-1zM607 526h1v1h-1zM820 529h1v1h-1zM700 530h1v1h-1zM702 529h1v1h-1zM793 528h1v1h-1zM882 526h1v1h-1zM767 532h1v1h-1zM708 530h1v1h-1zM781 530h1v1h-1zM677 530h1v1h-1zM802 531h1v1h-1zM752 528h1v1h-1zM790 529h1v1h-1zM683 527h1v1h-1zM795 528h1v1h-1zM788 531h1v1h-1zM767 531h1v1h-1zM668 528h1v1h-1zM723 532h1v1h-1zM623 526h1v1h-1zM656 529h1v1h-1zM806 533h1v1h-1zM654 529h1v1h-1zM842 526h1v1h-1zM707 529h1v1h-1zM875 528h1v1h-1zM647 527h1v1h-1zM843 531h1v1h-1zM827 527h1v1h-1zM690 528h1v1h-1zM776 532h1v1h-1zM882 531h1v1h-1zM738 526h1v1h-1zM716 529h1v1h-1zM874 530h1v1h-1zM806 532h1v1h-1zM822 529h1v1h-1zM805 530h1v1h-1zM642 528h1v1h-1zM861 529h1v1h-1zM842 525h1v1h-1zM831 529h1v1h-1zM800 529h1v1h-1zM640 529h1v1h-1zM634 527h1v1h-1zM879 527h1v1h-1zM717 526h1v1h-1zM835 533h1v1h-1zM889 535h1v1h-1zM725 529h1v1h-1zM837 530h1v1h-1zM823 532h1v1h-1zM814 529h1v1h-1zM870 529h1v1h-1zM622 529h1v1h-1zM786 527h1v1h-1zM670 529h1v1h-1zM678 525h1v1h-1zM875 526h1v1h-1zM673 530h1v1h-1zM714 529h1v1h-1zM647 529h1v1h-1zM650 526h1v1h-1zM637 528h1v1h-1zM871 528h1v1h-1zM685 527h1v1h-1zM727 531h1v1h-1zM751 528h1v1h-1zM873 527h1v1h-1zM626 530h1v1h-1zM811 531h1v1h-1zM631 529h1v1h-1zM861 533h1v1h-1zM750 527h1v1h-1zM638 524h1v1h-1zM815 529h1v1h-1zM607 533h1v1h-1zM776 529h1v1h-1zM612 527h1v1h-1zM607 525h1v1h-1zM734 530h1v1h-1zM802 529h1v1h-1zM827 529h1v1h-1zM685 530h1v1h-1zM672 527h1v1h-1zM870 529h1v1h-1zM610 528h1v1h-1zM735 532h1v1h-1zM630 527h1v1h-1zM837 531h1v1h-1zM675 527h1v1h-1zM726 527h1v1h-1zM619 527h1v1h-1zM675 528h1v1h-1zM873 532h1v1h-1zM652 533h1v1h-1zM615 532h1v1h-1zM865 531h1v1h-1zM685 528h1v1h-1zM789 531h1v1h-1zM694 526h1v1h-1zM685 529h1v1h-1zM645 527h1v1h-1zM607 526h1v1h-1zM731 530h1v1h-1zM801 527h1v1h-1zM888 531h1v1h-1zM649 530h1v1h-1zM866 526h1v1h-1zM796 527h1v1h-1zM704 528h1v1h-1zM752 527h1v1h-1zM787 530h1v1h-1zM824 528h1v1h-1zM763 528h1v1h-1zM758 528h1v1h-1zM633 526h1v1h-1zM717 526h1v1h-1zM731 527h1v1h-1zM889 528h1v1h-1zM849 529h1v1h-1zM622 526h1v1h-1zM802 530h1v1h-1zM795 532h1v1h-1zM855 532h1v1h-1zM704 530h1v1h-1zM705 529h1v1h-1zM738 533h1v1h-1zM765 531h1v1h-1zM789 531h1v1h-1zM642 527h1v1h-1zM766 530h1v1h-1zM629 530h1v1h-1zM874 530h1v1h-1zM616 528h1v1h-1zM733 525h1v1h-1zM714 528h1v1h-1zM677 527h1v1h-1zM870 528h1v1h-1zM739 527h1v1h-1zM836 529h1v1h-1zM696 527h1v1h-1zM725 531h1v1h-1zM639 529h1v1h-1zM798 528h1v1h-1zM669 530h1v1h-1zM678 529h1v1h-1zM737 533h1v1h-1zM764 527h1v1h-1zM779 534h1v1h-1zM655 528h1v1h-1zM894 530h1v1h-1zM820 530h1v1h-1zM869 532h1v1h-1zM830 530h1v1h-1zM663 526h1v1h-1zM794 528h1v1h-1zM622 528h1v1h-1zM758 531h1v1h-1zM790 528h1v1h-1zM636 531h1v1h-1zM693 526h1v1h-1zM814 529h1v1h-1zM860 528h1v1h-1zM620 528h1v1h-1zM845 531h1v1h-1zM819 530h1v1h-1zM754 532h1v1h-1zM770 527h1v1h-1zM768 530h1v1h-1zM698 528h1v1h-1zM788 530h1v1h-1zM843 530h1v1h-1zM719 531h1v1h-1zM658 529h1v1h-1zM821 530h1v1h-1zM645 528h1v1h-1zM663 531h1v1h-1zM774 528h1v1h-1zM802 530h1v1h-1zM791 531h1v1h-1zM830 529h1v1h-1zM786 529h1v1h-1zM695 528h1v1h-1zM730 530h1v1h-1zM844 530h1v1h-1zM638 527h1v1h-1zM758 529h1v1h-1zM719 529h1v1h-1zM686 531h1v1h-1zM879 529h1v1h-1zM820 530h1v1h-1zM653 528h1v1h-1zM873 526h1v1h-1zM756 529h1v1h-1zM842 526h1v1h-1zM781 532h1v1h-1zM716 527h1v1h-1zM713 531h1v1h-1zM715 525h1v1h-1zM873 531h1v1h-1zM704 526h1v1h-1zM686 528h1v1h-1zM740 532h1v1h-1zM670 531h1v1h-1zM661 531h1v1h-1zM655 528h1v1h-1zM723 529h1v1h-1zM665 530h1v1h-1zM749 527h1v1h-1zM741 533h1v1h-1zM879 530h1v1h-1zM608 525h1v1h-1zM851 528h1v1h-1zM883 533h1v1h-1zM648 526h1v1h-1zM893 533h1v1h-1zM860 529h1v1h-1zM681 528h1v1h-1zM742 529h1v1h-1zM892 529h1v1h-1zM697 526h1v1h-1zM667 527h1v1h-1zM747 530h1v1h-1zM771 527h1v1h-1zM726 530h1v1h-1zM750 525h1v1h-1zM865 530h1v1h-1zM775 529h1v1h-1zM653 527h1v1h-1zM697 531h1v1h-1zM871 532h1v1h-1zM792 529h1v1h-1zM829 531h1v1h-1zM772 533h1v1h-1zM824 535h1v1h-1zM884 533h1v1h-1zM875 529h1v1h-1zM879 531h1v1h-1zM761 531h1v1h-1zM790 530h1v1h-1zM829 531h1v1h-1zM885 525h1v1h-1zM859 530h1v1h-1zM866 531h1v1h-1zM798 531h1v1h-1zM841 530h1v1h-1zM802 528h1v1h-1zM613 528h1v1h-1zM754 530h1v1h-1zM642 527h1v1h-1zM840 528h1v1h-1zM700 530h1v1h-1zM630 528h1v1h-1zM751 525h1v1h-1zM614 528h1v1h-1zM658 528h1v1h-1zM843 532h1v1h-1zM798 529h1v1h-1zM828 532h1v1h-1zM767 531h1v1h-1zM613 529h1v1h-1zM738 529h1v1h-1zM704 530h1v1h-1zM856 530h1v1h-1zM644 529h1v1h-1zM730 525h1v1h-1zM816 531h1v1h-1zM684 530h1v1h-1zM847 532h1v1h-1zM671 529h1v1h-1zM883 528h1v1h-1zM882 532h1v1h-1zM777 532h1v1h-1zM718 524h1v1h-1zM745 528h1v1h-1zM769 529h1v1h-1zM825 530h1v1h-1zM636 528h1v1h-1zM770 529h1v1h-1zM680 527h1v1h-1zM822 527h1v1h-1zM843 531h1v1h-1zM672 528h1v1h-1zM746 531h1v1h-1zM666 528h1v1h-1zM757 529h1v1h-1zM839 530h1v1h-1zM738 529h1v1h-1zM704 528h1v1h-1zM640 529h1v1h-1zM781 527h1v1h-1zM621 526h1v1h-1zM810 530h1v1h-1zM674 530h1v1h-1zM754 529h1v1h-1zM742 529h1v1h-1zM617 529h1v1h-1zM870 533h1v1h-1zM645 528h1v1h-1zM662 528h1v1h-1zM705 529h1v1h-1zM688 527h1v1h-1zM767 533h1v1h-1zM895 530h1v1h-1zM826 530h1v1h-1zM816 530h1v1h-1zM841 528h1v1h-1zM635 528h1v1h-1zM770 526h1v1h-1zM784 527h1v1h-1zM743 529h1v1h-1zM782 530h1v1h-1zM767 528h1v1h-1zM719 530h1v1h-1zM608 531h1v1h-1zM860 531h1v1h-1zM821 530h1v1h-1zM731 528h1v1h-1zM875 532h1v1h-1zM793 526h1v1h-1zM677 532h1v1h-1zM633 528h1v1h-1zM836 526h1v1h-1zM721 528h1v1h-1zM683 527h1v1h-1zM878 533h1v1h-1zM766 525h1v1h-1zM811 528h1v1h-1zM874 531h1v1h-1zM821 531h1v1h-1zM725 528h1v1h-1zM871 533h1v1h-1zM862 528h1v1h-1zM682 528h1v1h-1zM738 528h1v1h-1zM609 527h1v1h-1zM724 529h1v1h-1zM800 527h1v1h-1zM876 526h1v1h-1zM695 528h1v1h-1zM679 530h1v1h-1zM850 530h1v1h-1zM793 526h1v1h-1zM691 528h1v1h-1zM633 532h1v1h-1zM893 531h1v1h-1zM826 531h1v1h-1zM869 532h1v1h-1zM753 533h1v1h-1zM642 527h1v1h-1zM793 529h1v1h-1zM788 532h1v1h-1zM855 526h1v1h-1zM801 529h1v1h-1zM848 526h1v1h-1zM749 534h1v1h-1zM663 527h1v1h-1zM667 527h1v1h-1zM728 527h1v1h-1zM750 530h1v1h-1zM777 531h1v1h-1zM824 529h1v1h-1zM667 528h1v1h-1zM746 529h1v1h-1zM819 528h1v1h-1zM672 527h1v1h-1zM663 532h1v1h-1zM849 529h1v1h-1zM742 529h1v1h-1zM762 530h1v1h-1zM746 530h1v1h-1zM743 531h1v1h-1zM865 529h1v1h-1zM691 529h1v1h-1zM775 528h1v1h-1zM822 530h1v1h-1zM821 529h1v1h-1zM651 530h1v1h-1zM853 529h1v1h-1zM654 531h1v1h-1zM670 528h1v1h-1zM870 531h1v1h-1zM730 526h1v1h-1zM673 526h1v1h-1zM819 527h1v1h-1zM811 531h1v1h-1zM690 529h1v1h-1zM760 528h1v1h-1zM607 526h1v1h-1zM695 528h1v1h-1zM688 531h1v1h-1zM662 529h1v1h-1zM861 532h1v1h-1zM669 531h1v1h-1zM865 529h1v1h-1zM862 530h1v1h-1zM662 524h1v1h-1zM788 528h1v1h-1zM685 529h1v1h-1zM793 530h1v1h-1zM851 530h1v1h-1zM842 531h1v1h-1zM607 528h1v1h-1zM760 530h1v1h-1zM773 529h1v1h-1zM733 529h1v1h-1zM818 527h1v1h-1zM637 532h1v1h-1zM637 528h1v1h-1zM609 529h1v1h-1zM716 526h1v1h-1zM874 528h1v1h-1zM618 526h1v1h-1zM746 527h1v1h-1zM706 530h1v1h-1zM851 529h1v1h-1zM679 529h1v1h-1zM848 528h1v1h-1zM859 530h1v1h-1zM890 529h1v1h-1zM699 529h1v1h-1zM638 530h1v1h-1zM699 526h1v1h-1zM794 533h1v1h-1zM656 523h1v1h-1z" fill="#9fb0bc" opacity="0.9"/>
<path d="M865 537h1v1h-1zM869 538h1v1h-1zM865 540h1v1h-1zM861 538h1v1h-1zM856 542h1v1h-1zM848 538h1v1h-1zM866 535h1v1h-1zM840 545h1v1h-1zM859 542h1v1h-1zM853 536h1v1h-1zM880 536h1v1h-1zM846 534h1v1h-1zM842 535h1v1h-1zM892 539h1v1h-1zM888 541h1v1h-1zM874 536h1v1h-1zM884 539h1v1h-1zM852 539h1v1h-1zM852 535h1v1h-1zM856 539h1v1h-1zM872 538h1v1h-1zM873 535h1v1h-1zM883 535h1v1h-1zM874 539h1v1h-1zM841 541h1v1h-1zM883 537h1v1h-1zM846 538h1v1h-1zM885 536h1v1h-1zM881 541h1v1h-1zM851 545h1v1h-1zM847 539h1v1h-1zM892 536h1v1h-1zM842 541h1v1h-1zM857 538h1v1h-1zM848 534h1v1h-1zM856 535h1v1h-1zM844 543h1v1h-1zM886 547h1v1h-1zM870 538h1v1h-1zM882 540h1v1h-1zM885 546h1v1h-1zM859 537h1v1h-1zM891 534h1v1h-1zM875 536h1v1h-1zM843 544h1v1h-1zM883 544h1v1h-1zM854 536h1v1h-1zM864 534h1v1h-1zM884 535h1v1h-1zM859 537h1v1h-1zM859 536h1v1h-1zM844 538h1v1h-1zM875 541h1v1h-1zM858 534h1v1h-1zM889 535h1v1h-1zM861 540h1v1h-1zM886 539h1v1h-1zM871 536h1v1h-1zM843 536h1v1h-1zM890 534h1v1h-1zM883 536h1v1h-1zM876 536h1v1h-1zM869 538h1v1h-1zM852 537h1v1h-1zM862 536h1v1h-1zM853 535h1v1h-1zM841 534h1v1h-1zM859 537h1v1h-1zM872 542h1v1h-1zM884 534h1v1h-1zM870 535h1v1h-1zM840 541h1v1h-1zM860 539h1v1h-1zM860 540h1v1h-1zM863 541h1v1h-1zM855 545h1v1h-1zM848 537h1v1h-1zM850 537h1v1h-1zM878 535h1v1h-1zM891 534h1v1h-1zM847 544h1v1h-1zM870 545h1v1h-1zM881 537h1v1h-1zM883 534h1v1h-1zM878 537h1v1h-1zM844 537h1v1h-1zM883 537h1v1h-1zM871 538h1v1h-1zM867 534h1v1h-1zM840 540h1v1h-1zM879 537h1v1h-1zM864 535h1v1h-1zM872 537h1v1h-1zM858 542h1v1h-1zM881 540h1v1h-1zM867 541h1v1h-1zM871 536h1v1h-1zM867 536h1v1h-1zM859 542h1v1h-1zM851 537h1v1h-1zM849 540h1v1h-1zM878 541h1v1h-1zM858 539h1v1h-1zM867 534h1v1h-1zM842 537h1v1h-1zM857 546h1v1h-1zM878 538h1v1h-1zM874 538h1v1h-1zM878 542h1v1h-1zM856 538h1v1h-1zM852 543h1v1h-1zM867 536h1v1h-1zM840 544h1v1h-1zM849 536h1v1h-1zM871 535h1v1h-1zM881 540h1v1h-1zM858 537h1v1h-1zM893 539h1v1h-1zM841 535h1v1h-1zM866 537h1v1h-1zM882 540h1v1h-1zM852 537h1v1h-1zM869 534h1v1h-1zM841 538h1v1h-1zM892 547h1v1h-1zM873 534h1v1h-1zM858 539h1v1h-1zM881 544h1v1h-1zM871 538h1v1h-1zM863 534h1v1h-1zM845 540h1v1h-1zM851 535h1v1h-1zM868 544h1v1h-1zM884 537h1v1h-1zM856 535h1v1h-1zM890 540h1v1h-1zM851 543h1v1h-1zM841 538h1v1h-1zM868 540h1v1h-1zM840 535h1v1h-1z" fill="#8ea4b4" opacity="0.8"/>
<path d="M205 647h1v1h-1zM80 646h1v1h-1zM296 649h1v1h-1zM106 645h1v1h-1zM209 648h1v1h-1zM219 646h1v1h-1zM542 652h1v1h-1zM117 645h1v1h-1zM65 644h1v1h-1zM379 649h1v1h-1zM196 647h1v1h-1zM527 654h1v1h-1zM426 650h1v1h-1zM578 653h1v1h-1zM534 653h1v1h-1zM527 653h1v1h-1zM314 649h1v1h-1zM153 647h1v1h-1zM45 642h1v1h-1zM80 645h1v1h-1zM293 648h1v1h-1zM330 650h1v1h-1zM602 654h1v1h-1zM121 645h1v1h-1zM582 655h1v1h-1zM529 653h1v1h-1zM555 654h1v1h-1zM154 646h1v1h-1zM427 650h1v1h-1zM434 651h1v1h-1zM506 652h1v1h-1zM251 648h1v1h-1zM96 646h1v1h-1zM201 647h1v1h-1zM536 653h1v1h-1zM410 650h1v1h-1zM496 652h1v1h-1zM255 648h1v1h-1zM466 651h1v1h-1zM184 648h1v1h-1zM526 653h1v1h-1zM223 648h1v1h-1zM446 650h1v1h-1zM271 647h1v1h-1zM467 652h1v1h-1zM213 647h1v1h-1zM319 648h1v1h-1zM397 650h1v1h-1zM143 645h1v1h-1zM215 647h1v1h-1zM132 645h1v1h-1zM109 644h1v1h-1zM208 645h1v1h-1zM554 654h1v1h-1zM575 655h1v1h-1zM398 651h1v1h-1zM266 647h1v1h-1zM584 653h1v1h-1zM569 653h1v1h-1zM423 651h1v1h-1zM604 655h1v1h-1zM529 654h1v1h-1zM349 649h1v1h-1zM504 653h1v1h-1zM280 648h1v1h-1zM485 650h1v1h-1zM395 651h1v1h-1zM514 653h1v1h-1zM412 652h1v1h-1zM46 645h1v1h-1zM486 652h1v1h-1zM58 644h1v1h-1zM527 653h1v1h-1zM564 653h1v1h-1zM142 646h1v1h-1zM531 653h1v1h-1zM524 654h1v1h-1zM117 644h1v1h-1zM493 652h1v1h-1zM50 645h1v1h-1zM202 648h1v1h-1zM313 650h1v1h-1zM425 652h1v1h-1zM194 646h1v1h-1zM146 645h1v1h-1zM215 648h1v1h-1zM200 647h1v1h-1zM121 644h1v1h-1zM289 649h1v1h-1zM241 647h1v1h-1zM57 643h1v1h-1zM459 652h1v1h-1zM572 654h1v1h-1zM419 650h1v1h-1zM571 655h1v1h-1zM93 645h1v1h-1zM210 648h1v1h-1zM250 647h1v1h-1zM454 651h1v1h-1zM333 650h1v1h-1zM89 645h1v1h-1zM506 651h1v1h-1zM141 645h1v1h-1zM502 654h1v1h-1zM69 645h1v1h-1zM475 652h1v1h-1zM419 651h1v1h-1zM545 651h1v1h-1zM255 647h1v1h-1zM225 646h1v1h-1zM525 653h1v1h-1zM233 646h1v1h-1zM368 650h1v1h-1zM65 643h1v1h-1zM239 648h1v1h-1zM491 651h1v1h-1zM314 648h1v1h-1zM451 652h1v1h-1zM259 648h1v1h-1zM245 647h1v1h-1zM310 650h1v1h-1zM485 652h1v1h-1zM260 648h1v1h-1zM51 645h1v1h-1zM505 652h1v1h-1zM321 650h1v1h-1zM552 652h1v1h-1zM62 644h1v1h-1zM327 649h1v1h-1zM376 649h1v1h-1zM157 645h1v1h-1zM421 650h1v1h-1zM332 648h1v1h-1zM589 654h1v1h-1zM223 648h1v1h-1zM156 645h1v1h-1zM570 653h1v1h-1zM252 649h1v1h-1zM319 649h1v1h-1zM179 646h1v1h-1zM407 650h1v1h-1zM223 647h1v1h-1zM323 650h1v1h-1zM129 645h1v1h-1zM209 646h1v1h-1zM67 644h1v1h-1zM535 654h1v1h-1zM216 648h1v1h-1zM420 652h1v1h-1zM516 651h1v1h-1zM165 647h1v1h-1zM594 654h1v1h-1zM166 645h1v1h-1zM571 654h1v1h-1zM386 650h1v1h-1zM435 652h1v1h-1zM277 649h1v1h-1zM486 652h1v1h-1zM570 655h1v1h-1zM124 646h1v1h-1zM148 645h1v1h-1zM294 649h1v1h-1zM170 647h1v1h-1zM550 654h1v1h-1zM90 644h1v1h-1zM263 649h1v1h-1zM493 653h1v1h-1zM329 650h1v1h-1zM104 645h1v1h-1zM134 645h1v1h-1zM538 655h1v1h-1zM294 649h1v1h-1zM207 648h1v1h-1zM590 654h1v1h-1zM51 644h1v1h-1zM322 648h1v1h-1zM254 647h1v1h-1zM537 652h1v1h-1zM344 650h1v1h-1zM172 645h1v1h-1zM56 644h1v1h-1zM476 651h1v1h-1zM265 648h1v1h-1zM211 647h1v1h-1zM132 645h1v1h-1zM354 650h1v1h-1zM320 649h1v1h-1zM196 648h1v1h-1zM574 654h1v1h-1zM343 649h1v1h-1zM326 649h1v1h-1zM316 649h1v1h-1zM442 652h1v1h-1zM179 645h1v1h-1zM447 651h1v1h-1zM558 655h1v1h-1zM265 648h1v1h-1zM247 647h1v1h-1zM469 652h1v1h-1zM286 649h1v1h-1zM379 649h1v1h-1zM516 652h1v1h-1zM104 644h1v1h-1zM381 650h1v1h-1zM248 649h1v1h-1zM600 653h1v1h-1zM593 654h1v1h-1zM183 646h1v1h-1zM551 654h1v1h-1zM81 645h1v1h-1zM487 652h1v1h-1zM198 647h1v1h-1zM38 643h1v1h-1zM128 646h1v1h-1zM530 653h1v1h-1zM170 647h1v1h-1zM579 655h1v1h-1zM398 649h1v1h-1zM253 647h1v1h-1zM179 646h1v1h-1zM161 645h1v1h-1zM564 653h1v1h-1zM449 652h1v1h-1zM492 652h1v1h-1zM502 653h1v1h-1zM181 646h1v1h-1zM496 654h1v1h-1zM419 651h1v1h-1zM489 652h1v1h-1zM411 651h1v1h-1zM169 645h1v1h-1zM425 652h1v1h-1zM424 650h1v1h-1zM557 655h1v1h-1zM504 653h1v1h-1zM233 646h1v1h-1zM462 653h1v1h-1zM85 645h1v1h-1zM135 645h1v1h-1zM528 653h1v1h-1zM552 654h1v1h-1zM360 649h1v1h-1zM429 649h1v1h-1zM48 643h1v1h-1zM96 645h1v1h-1zM397 651h1v1h-1zM351 651h1v1h-1zM498 652h1v1h-1zM263 648h1v1h-1zM538 654h1v1h-1zM92 645h1v1h-1zM48 644h1v1h-1zM342 650h1v1h-1zM120 645h1v1h-1zM146 645h1v1h-1zM270 649h1v1h-1zM357 651h1v1h-1zM73 644h1v1h-1zM595 655h1v1h-1zM547 654h1v1h-1zM88 644h1v1h-1zM129 645h1v1h-1zM143 647h1v1h-1zM370 649h1v1h-1zM444 652h1v1h-1zM535 653h1v1h-1zM105 646h1v1h-1zM500 654h1v1h-1zM347 650h1v1h-1zM187 646h1v1h-1zM83 643h1v1h-1zM320 648h1v1h-1zM241 648h1v1h-1zM555 654h1v1h-1zM163 646h1v1h-1zM577 653h1v1h-1zM538 653h1v1h-1zM50 642h1v1h-1zM431 652h1v1h-1zM372 650h1v1h-1zM159 647h1v1h-1zM272 648h1v1h-1zM548 653h1v1h-1zM151 646h1v1h-1zM37 644h1v1h-1zM204 646h1v1h-1zM100 645h1v1h-1zM562 654h1v1h-1zM488 653h1v1h-1zM80 643h1v1h-1zM66 644h1v1h-1zM242 648h1v1h-1zM167 646h1v1h-1zM157 645h1v1h-1zM566 654h1v1h-1zM168 645h1v1h-1zM564 653h1v1h-1zM573 654h1v1h-1zM447 651h1v1h-1zM76 645h1v1h-1zM74 643h1v1h-1zM271 649h1v1h-1zM540 653h1v1h-1zM466 652h1v1h-1zM477 652h1v1h-1zM61 645h1v1h-1zM221 647h1v1h-1zM233 646h1v1h-1zM261 648h1v1h-1zM191 646h1v1h-1zM413 651h1v1h-1zM530 651h1v1h-1zM294 649h1v1h-1zM540 652h1v1h-1zM499 652h1v1h-1zM59 643h1v1h-1zM571 654h1v1h-1zM470 651h1v1h-1zM198 647h1v1h-1zM264 648h1v1h-1zM47 643h1v1h-1zM497 653h1v1h-1zM464 651h1v1h-1zM486 652h1v1h-1zM423 651h1v1h-1zM127 645h1v1h-1zM231 649h1v1h-1zM529 653h1v1h-1zM427 652h1v1h-1zM382 651h1v1h-1zM61 643h1v1h-1zM278 648h1v1h-1zM527 653h1v1h-1zM175 645h1v1h-1zM406 650h1v1h-1zM252 648h1v1h-1zM421 651h1v1h-1zM125 647h1v1h-1zM444 653h1v1h-1zM143 645h1v1h-1zM512 652h1v1h-1zM128 646h1v1h-1zM230 648h1v1h-1zM130 644h1v1h-1zM268 649h1v1h-1zM448 651h1v1h-1zM48 644h1v1h-1zM313 648h1v1h-1zM402 650h1v1h-1zM124 647h1v1h-1zM600 654h1v1h-1zM392 650h1v1h-1zM401 652h1v1h-1zM290 648h1v1h-1zM210 647h1v1h-1zM93 644h1v1h-1zM440 651h1v1h-1zM562 653h1v1h-1zM497 652h1v1h-1zM492 653h1v1h-1zM38 643h1v1h-1zM420 650h1v1h-1zM594 654h1v1h-1zM195 646h1v1h-1zM446 649h1v1h-1zM203 647h1v1h-1zM133 645h1v1h-1zM483 653h1v1h-1zM535 654h1v1h-1zM485 652h1v1h-1zM314 649h1v1h-1zM282 647h1v1h-1zM468 651h1v1h-1zM70 645h1v1h-1zM348 650h1v1h-1zM196 646h1v1h-1zM35 644h1v1h-1zM133 646h1v1h-1zM527 653h1v1h-1zM411 649h1v1h-1zM394 650h1v1h-1zM503 652h1v1h-1zM254 648h1v1h-1zM51 643h1v1h-1zM438 651h1v1h-1zM212 648h1v1h-1zM426 649h1v1h-1zM296 649h1v1h-1zM578 655h1v1h-1zM361 650h1v1h-1zM138 646h1v1h-1zM482 651h1v1h-1zM352 651h1v1h-1zM76 642h1v1h-1zM132 647h1v1h-1zM299 646h1v1h-1zM261 648h1v1h-1zM490 653h1v1h-1zM74 646h1v1h-1zM377 651h1v1h-1zM171 646h1v1h-1zM183 645h1v1h-1zM564 654h1v1h-1zM449 651h1v1h-1zM454 652h1v1h-1zM243 648h1v1h-1zM312 648h1v1h-1zM278 648h1v1h-1zM232 648h1v1h-1zM214 648h1v1h-1zM308 649h1v1h-1zM214 647h1v1h-1zM176 646h1v1h-1zM189 646h1v1h-1zM241 648h1v1h-1zM577 654h1v1h-1zM76 645h1v1h-1zM406 649h1v1h-1zM206 647h1v1h-1zM247 646h1v1h-1zM492 652h1v1h-1zM417 651h1v1h-1zM165 647h1v1h-1zM395 651h1v1h-1zM533 653h1v1h-1zM341 649h1v1h-1zM237 648h1v1h-1zM150 646h1v1h-1zM380 650h1v1h-1zM83 644h1v1h-1zM426 651h1v1h-1zM522 652h1v1h-1zM330 650h1v1h-1zM327 649h1v1h-1zM476 652h1v1h-1zM136 645h1v1h-1zM433 652h1v1h-1zM157 646h1v1h-1zM440 652h1v1h-1zM442 651h1v1h-1zM214 647h1v1h-1zM275 647h1v1h-1zM79 643h1v1h-1zM239 647h1v1h-1zM104 644h1v1h-1zM72 644h1v1h-1zM345 650h1v1h-1zM181 648h1v1h-1zM492 652h1v1h-1zM144 646h1v1h-1zM147 645h1v1h-1zM67 645h1v1h-1zM170 645h1v1h-1zM277 647h1v1h-1zM572 653h1v1h-1zM187 647h1v1h-1zM318 650h1v1h-1zM141 645h1v1h-1zM528 654h1v1h-1zM585 655h1v1h-1zM231 647h1v1h-1zM542 654h1v1h-1zM594 656h1v1h-1zM509 652h1v1h-1zM202 648h1v1h-1zM479 651h1v1h-1zM206 647h1v1h-1zM256 648h1v1h-1zM360 650h1v1h-1zM360 650h1v1h-1zM383 650h1v1h-1zM71 645h1v1h-1zM57 644h1v1h-1zM148 646h1v1h-1zM317 650h1v1h-1zM108 644h1v1h-1zM327 650h1v1h-1zM552 653h1v1h-1zM565 653h1v1h-1zM45 644h1v1h-1zM430 650h1v1h-1zM201 647h1v1h-1zM493 653h1v1h-1zM438 652h1v1h-1zM330 649h1v1h-1zM454 653h1v1h-1zM37 645h1v1h-1zM310 649h1v1h-1zM427 652h1v1h-1zM75 645h1v1h-1zM193 646h1v1h-1zM590 653h1v1h-1zM141 646h1v1h-1zM378 649h1v1h-1zM438 651h1v1h-1zM290 647h1v1h-1zM316 650h1v1h-1zM50 643h1v1h-1zM54 643h1v1h-1zM232 647h1v1h-1zM592 654h1v1h-1zM529 653h1v1h-1zM260 648h1v1h-1zM104 645h1v1h-1zM157 646h1v1h-1zM411 652h1v1h-1zM449 653h1v1h-1zM142 646h1v1h-1zM136 647h1v1h-1zM159 645h1v1h-1zM477 651h1v1h-1zM93 646h1v1h-1zM105 645h1v1h-1zM44 644h1v1h-1zM365 650h1v1h-1zM440 653h1v1h-1zM373 651h1v1h-1zM184 645h1v1h-1zM290 647h1v1h-1zM425 650h1v1h-1zM327 649h1v1h-1zM395 650h1v1h-1zM55 644h1v1h-1zM525 654h1v1h-1zM410 651h1v1h-1zM570 654h1v1h-1zM367 651h1v1h-1zM514 653h1v1h-1zM393 652h1v1h-1zM481 652h1v1h-1zM598 654h1v1h-1zM194 644h1v1h-1zM280 648h1v1h-1zM227 649h1v1h-1zM207 648h1v1h-1zM261 648h1v1h-1zM203 645h1v1h-1zM231 647h1v1h-1zM555 654h1v1h-1zM133 646h1v1h-1zM245 647h1v1h-1zM470 651h1v1h-1zM313 648h1v1h-1zM421 650h1v1h-1zM510 653h1v1h-1zM53 644h1v1h-1zM369 650h1v1h-1zM173 647h1v1h-1zM62 645h1v1h-1zM165 646h1v1h-1zM189 646h1v1h-1zM360 648h1v1h-1zM188 647h1v1h-1zM44 643h1v1h-1zM507 652h1v1h-1zM228 648h1v1h-1zM564 654h1v1h-1zM556 652h1v1h-1zM205 647h1v1h-1zM592 655h1v1h-1zM114 644h1v1h-1zM229 646h1v1h-1zM293 648h1v1h-1zM160 646h1v1h-1zM384 650h1v1h-1zM156 645h1v1h-1zM395 651h1v1h-1zM483 652h1v1h-1zM568 654h1v1h-1zM208 645h1v1h-1zM546 652h1v1h-1zM266 648h1v1h-1zM229 646h1v1h-1zM565 652h1v1h-1zM437 650h1v1h-1zM78 645h1v1h-1zM306 647h1v1h-1zM511 653h1v1h-1zM403 651h1v1h-1zM169 646h1v1h-1zM255 646h1v1h-1zM382 651h1v1h-1zM436 652h1v1h-1zM548 652h1v1h-1zM75 644h1v1h-1zM57 644h1v1h-1zM44 645h1v1h-1zM169 645h1v1h-1zM571 654h1v1h-1zM478 652h1v1h-1zM153 646h1v1h-1zM489 652h1v1h-1zM231 647h1v1h-1zM317 649h1v1h-1zM252 647h1v1h-1zM588 653h1v1h-1zM51 643h1v1h-1zM492 652h1v1h-1zM497 653h1v1h-1zM587 655h1v1h-1zM286 648h1v1h-1zM217 648h1v1h-1zM602 653h1v1h-1zM457 650h1v1h-1zM132 645h1v1h-1zM443 651h1v1h-1zM582 654h1v1h-1zM430 652h1v1h-1zM449 650h1v1h-1zM242 649h1v1h-1zM131 646h1v1h-1zM549 653h1v1h-1zM277 648h1v1h-1zM293 648h1v1h-1zM377 651h1v1h-1zM182 645h1v1h-1zM48 643h1v1h-1zM218 648h1v1h-1zM481 651h1v1h-1zM314 648h1v1h-1zM522 654h1v1h-1zM390 651h1v1h-1zM565 654h1v1h-1zM340 649h1v1h-1zM108 645h1v1h-1zM289 647h1v1h-1zM133 643h1v1h-1zM514 653h1v1h-1zM395 651h1v1h-1zM586 654h1v1h-1zM599 653h1v1h-1zM408 651h1v1h-1zM562 653h1v1h-1zM357 649h1v1h-1zM217 648h1v1h-1zM560 654h1v1h-1zM296 649h1v1h-1zM33 643h1v1h-1zM48 642h1v1h-1zM528 653h1v1h-1zM465 652h1v1h-1zM117 644h1v1h-1zM340 651h1v1h-1zM101 645h1v1h-1zM562 654h1v1h-1zM84 646h1v1h-1zM447 650h1v1h-1zM166 647h1v1h-1zM218 646h1v1h-1zM95 645h1v1h-1zM378 651h1v1h-1zM91 643h1v1h-1zM445 652h1v1h-1zM176 646h1v1h-1zM489 650h1v1h-1zM54 645h1v1h-1zM537 654h1v1h-1zM53 644h1v1h-1zM442 652h1v1h-1zM337 649h1v1h-1zM77 643h1v1h-1zM451 652h1v1h-1zM600 654h1v1h-1zM578 653h1v1h-1zM549 654h1v1h-1zM314 649h1v1h-1zM348 650h1v1h-1zM158 646h1v1h-1zM204 647h1v1h-1zM128 643h1v1h-1zM149 645h1v1h-1zM50 644h1v1h-1zM256 649h1v1h-1zM528 653h1v1h-1zM556 652h1v1h-1zM157 646h1v1h-1zM380 650h1v1h-1zM342 650h1v1h-1zM565 655h1v1h-1zM470 651h1v1h-1zM240 646h1v1h-1zM44 643h1v1h-1zM563 655h1v1h-1zM113 645h1v1h-1zM338 651h1v1h-1zM84 644h1v1h-1zM195 648h1v1h-1zM410 651h1v1h-1zM46 643h1v1h-1zM396 651h1v1h-1zM595 654h1v1h-1zM178 647h1v1h-1zM322 649h1v1h-1zM381 650h1v1h-1zM514 652h1v1h-1zM339 648h1v1h-1zM153 645h1v1h-1zM478 652h1v1h-1zM73 644h1v1h-1zM430 652h1v1h-1zM412 651h1v1h-1zM186 648h1v1h-1zM284 649h1v1h-1zM265 649h1v1h-1zM234 648h1v1h-1zM341 650h1v1h-1zM261 648h1v1h-1zM63 645h1v1h-1zM430 651h1v1h-1zM56 644h1v1h-1zM575 654h1v1h-1zM68 644h1v1h-1zM351 650h1v1h-1zM342 649h1v1h-1zM322 649h1v1h-1zM34 644h1v1h-1zM388 649h1v1h-1zM254 648h1v1h-1zM527 653h1v1h-1zM114 645h1v1h-1zM501 652h1v1h-1zM232 646h1v1h-1zM206 648h1v1h-1zM238 646h1v1h-1zM223 648h1v1h-1zM590 653h1v1h-1zM467 652h1v1h-1zM449 652h1v1h-1zM416 650h1v1h-1zM32 643h1v1h-1zM324 649h1v1h-1zM588 655h1v1h-1zM144 647h1v1h-1zM595 656h1v1h-1zM252 648h1v1h-1zM318 649h1v1h-1zM109 645h1v1h-1zM64 645h1v1h-1zM590 656h1v1h-1zM557 653h1v1h-1zM368 651h1v1h-1zM316 648h1v1h-1zM135 644h1v1h-1zM556 653h1v1h-1zM441 653h1v1h-1zM221 647h1v1h-1zM192 646h1v1h-1zM351 651h1v1h-1zM334 650h1v1h-1zM275 649h1v1h-1zM71 646h1v1h-1zM233 648h1v1h-1zM433 651h1v1h-1zM131 647h1v1h-1zM286 650h1v1h-1zM43 645h1v1h-1zM90 644h1v1h-1zM121 644h1v1h-1zM338 650h1v1h-1zM275 647h1v1h-1zM187 648h1v1h-1zM526 653h1v1h-1zM337 650h1v1h-1zM437 652h1v1h-1zM385 650h1v1h-1zM358 650h1v1h-1zM181 647h1v1h-1zM195 647h1v1h-1zM327 648h1v1h-1zM590 655h1v1h-1zM387 650h1v1h-1zM100 646h1v1h-1zM207 647h1v1h-1zM96 646h1v1h-1zM155 647h1v1h-1zM286 650h1v1h-1zM328 648h1v1h-1zM417 652h1v1h-1zM342 649h1v1h-1zM62 645h1v1h-1zM495 652h1v1h-1zM570 654h1v1h-1zM296 649h1v1h-1zM116 645h1v1h-1zM493 653h1v1h-1zM335 650h1v1h-1zM235 647h1v1h-1zM81 645h1v1h-1zM183 646h1v1h-1zM479 653h1v1h-1zM109 646h1v1h-1zM44 643h1v1h-1zM356 649h1v1h-1zM471 651h1v1h-1zM83 643h1v1h-1zM239 648h1v1h-1zM85 645h1v1h-1zM602 655h1v1h-1zM300 649h1v1h-1zM116 646h1v1h-1zM266 648h1v1h-1zM174 645h1v1h-1zM446 651h1v1h-1zM194 648h1v1h-1zM62 644h1v1h-1zM590 655h1v1h-1zM100 646h1v1h-1zM208 648h1v1h-1zM256 648h1v1h-1zM582 654h1v1h-1zM261 648h1v1h-1zM547 653h1v1h-1zM311 648h1v1h-1zM165 647h1v1h-1zM295 649h1v1h-1zM132 645h1v1h-1zM48 643h1v1h-1zM148 646h1v1h-1zM509 653h1v1h-1zM73 645h1v1h-1zM211 645h1v1h-1zM545 654h1v1h-1zM237 648h1v1h-1zM399 651h1v1h-1zM336 650h1v1h-1zM164 646h1v1h-1zM193 647h1v1h-1zM246 648h1v1h-1zM315 650h1v1h-1zM229 648h1v1h-1zM359 651h1v1h-1zM392 651h1v1h-1zM100 646h1v1h-1zM439 650h1v1h-1zM550 654h1v1h-1zM381 651h1v1h-1zM185 647h1v1h-1zM222 647h1v1h-1zM158 644h1v1h-1zM206 647h1v1h-1zM326 648h1v1h-1zM184 646h1v1h-1zM519 653h1v1h-1zM426 650h1v1h-1zM372 649h1v1h-1zM306 649h1v1h-1zM255 648h1v1h-1zM504 652h1v1h-1zM48 644h1v1h-1zM93 643h1v1h-1zM489 653h1v1h-1zM167 645h1v1h-1zM473 651h1v1h-1zM355 650h1v1h-1zM475 651h1v1h-1zM543 654h1v1h-1zM541 653h1v1h-1zM292 649h1v1h-1zM383 650h1v1h-1zM360 650h1v1h-1zM558 654h1v1h-1zM207 647h1v1h-1zM552 654h1v1h-1zM194 646h1v1h-1zM359 649h1v1h-1zM308 648h1v1h-1zM412 651h1v1h-1zM298 648h1v1h-1zM135 646h1v1h-1zM519 653h1v1h-1zM137 646h1v1h-1zM110 645h1v1h-1zM109 646h1v1h-1zM385 651h1v1h-1zM421 649h1v1h-1zM568 653h1v1h-1zM180 645h1v1h-1zM79 643h1v1h-1zM398 651h1v1h-1zM108 643h1v1h-1zM312 648h1v1h-1zM442 651h1v1h-1zM482 650h1v1h-1zM117 643h1v1h-1zM200 647h1v1h-1zM373 649h1v1h-1zM38 643h1v1h-1zM579 655h1v1h-1zM403 650h1v1h-1zM106 644h1v1h-1zM565 655h1v1h-1zM471 653h1v1h-1zM461 651h1v1h-1zM240 648h1v1h-1zM302 649h1v1h-1zM174 647h1v1h-1zM212 647h1v1h-1zM505 653h1v1h-1zM81 646h1v1h-1zM137 645h1v1h-1zM328 649h1v1h-1zM382 650h1v1h-1zM546 655h1v1h-1zM217 646h1v1h-1zM420 650h1v1h-1zM450 652h1v1h-1zM192 647h1v1h-1zM545 653h1v1h-1zM197 648h1v1h-1zM264 647h1v1h-1zM362 651h1v1h-1zM288 649h1v1h-1zM538 653h1v1h-1zM37 641h1v1h-1zM497 654h1v1h-1zM122 645h1v1h-1zM83 644h1v1h-1zM190 647h1v1h-1zM516 653h1v1h-1zM362 650h1v1h-1zM375 649h1v1h-1zM374 650h1v1h-1zM138 645h1v1h-1zM352 650h1v1h-1zM212 648h1v1h-1zM250 647h1v1h-1zM299 649h1v1h-1zM194 646h1v1h-1zM582 654h1v1h-1zM473 652h1v1h-1zM543 654h1v1h-1zM187 648h1v1h-1zM555 653h1v1h-1zM296 650h1v1h-1zM446 651h1v1h-1zM47 644h1v1h-1zM396 649h1v1h-1zM519 652h1v1h-1zM602 654h1v1h-1zM67 643h1v1h-1zM434 651h1v1h-1zM148 645h1v1h-1zM123 644h1v1h-1zM432 653h1v1h-1zM432 652h1v1h-1zM141 645h1v1h-1zM78 644h1v1h-1zM348 649h1v1h-1zM71 645h1v1h-1zM206 647h1v1h-1zM76 646h1v1h-1zM454 651h1v1h-1zM438 651h1v1h-1zM472 651h1v1h-1zM80 645h1v1h-1zM141 645h1v1h-1zM60 644h1v1h-1zM318 648h1v1h-1zM498 654h1v1h-1zM160 647h1v1h-1zM205 647h1v1h-1zM192 646h1v1h-1zM318 649h1v1h-1zM476 651h1v1h-1zM449 650h1v1h-1zM365 650h1v1h-1zM373 649h1v1h-1zM520 653h1v1h-1zM321 649h1v1h-1zM198 648h1v1h-1zM371 650h1v1h-1zM250 647h1v1h-1zM578 654h1v1h-1zM425 651h1v1h-1zM302 649h1v1h-1zM331 649h1v1h-1zM288 649h1v1h-1zM348 650h1v1h-1zM598 654h1v1h-1zM231 647h1v1h-1zM99 643h1v1h-1zM510 652h1v1h-1zM34 643h1v1h-1zM249 647h1v1h-1zM599 654h1v1h-1zM333 649h1v1h-1zM146 646h1v1h-1zM422 650h1v1h-1zM487 652h1v1h-1zM109 646h1v1h-1zM40 644h1v1h-1zM434 653h1v1h-1zM377 650h1v1h-1zM288 648h1v1h-1zM95 645h1v1h-1zM367 648h1v1h-1zM543 652h1v1h-1zM567 655h1v1h-1zM118 645h1v1h-1zM346 651h1v1h-1zM100 646h1v1h-1zM440 651h1v1h-1zM564 654h1v1h-1zM260 648h1v1h-1zM515 653h1v1h-1zM292 649h1v1h-1zM256 648h1v1h-1zM301 648h1v1h-1zM370 650h1v1h-1zM393 650h1v1h-1zM360 651h1v1h-1zM234 647h1v1h-1zM603 655h1v1h-1zM202 646h1v1h-1zM376 650h1v1h-1zM59 643h1v1h-1zM226 648h1v1h-1zM473 652h1v1h-1zM60 644h1v1h-1zM295 648h1v1h-1zM551 652h1v1h-1zM567 654h1v1h-1zM318 649h1v1h-1zM446 652h1v1h-1zM183 647h1v1h-1zM325 649h1v1h-1zM258 647h1v1h-1zM470 653h1v1h-1zM179 647h1v1h-1zM209 647h1v1h-1zM268 647h1v1h-1zM221 647h1v1h-1zM421 652h1v1h-1zM83 645h1v1h-1zM156 645h1v1h-1zM130 646h1v1h-1zM350 651h1v1h-1zM522 652h1v1h-1zM365 651h1v1h-1zM597 654h1v1h-1zM95 646h1v1h-1zM415 651h1v1h-1zM86 644h1v1h-1zM459 653h1v1h-1zM130 645h1v1h-1zM40 644h1v1h-1zM433 652h1v1h-1zM334 651h1v1h-1zM71 643h1v1h-1zM467 651h1v1h-1zM229 647h1v1h-1zM293 649h1v1h-1zM424 651h1v1h-1zM110 646h1v1h-1zM426 651h1v1h-1zM392 652h1v1h-1zM371 650h1v1h-1zM588 651h1v1h-1zM179 647h1v1h-1zM302 650h1v1h-1zM197 647h1v1h-1zM491 652h1v1h-1zM328 648h1v1h-1zM594 654h1v1h-1zM403 651h1v1h-1zM69 644h1v1h-1zM316 648h1v1h-1zM166 645h1v1h-1zM559 654h1v1h-1zM524 653h1v1h-1zM422 651h1v1h-1zM418 650h1v1h-1zM543 655h1v1h-1zM570 653h1v1h-1zM577 655h1v1h-1zM74 645h1v1h-1zM440 651h1v1h-1zM518 653h1v1h-1zM232 647h1v1h-1zM349 650h1v1h-1zM388 650h1v1h-1zM231 647h1v1h-1zM278 650h1v1h-1zM571 655h1v1h-1zM104 645h1v1h-1zM69 645h1v1h-1zM88 643h1v1h-1zM329 650h1v1h-1zM362 650h1v1h-1zM304 649h1v1h-1zM552 652h1v1h-1zM73 644h1v1h-1zM337 649h1v1h-1zM67 644h1v1h-1zM276 648h1v1h-1zM284 648h1v1h-1zM206 647h1v1h-1zM258 647h1v1h-1zM593 653h1v1h-1zM486 651h1v1h-1zM294 649h1v1h-1zM599 655h1v1h-1zM61 644h1v1h-1zM406 652h1v1h-1zM587 653h1v1h-1zM459 651h1v1h-1zM73 646h1v1h-1zM416 651h1v1h-1zM249 647h1v1h-1zM162 647h1v1h-1zM174 645h1v1h-1zM277 649h1v1h-1zM599 653h1v1h-1zM249 648h1v1h-1zM82 643h1v1h-1zM279 648h1v1h-1zM80 644h1v1h-1zM458 650h1v1h-1zM237 646h1v1h-1zM549 652h1v1h-1zM468 652h1v1h-1zM186 648h1v1h-1zM351 649h1v1h-1zM137 645h1v1h-1zM94 645h1v1h-1zM213 648h1v1h-1zM479 653h1v1h-1zM549 654h1v1h-1zM137 646h1v1h-1zM452 651h1v1h-1zM461 651h1v1h-1zM72 644h1v1h-1zM499 653h1v1h-1zM432 652h1v1h-1zM565 653h1v1h-1zM44 644h1v1h-1zM242 648h1v1h-1zM221 646h1v1h-1zM516 653h1v1h-1zM563 652h1v1h-1zM342 648h1v1h-1zM522 652h1v1h-1zM108 645h1v1h-1zM213 647h1v1h-1zM197 646h1v1h-1zM596 653h1v1h-1zM320 648h1v1h-1zM105 645h1v1h-1zM193 646h1v1h-1zM230 648h1v1h-1zM530 654h1v1h-1zM530 654h1v1h-1zM113 645h1v1h-1zM314 648h1v1h-1zM423 650h1v1h-1zM131 647h1v1h-1zM445 651h1v1h-1zM201 646h1v1h-1zM251 648h1v1h-1zM394 650h1v1h-1zM249 647h1v1h-1zM507 653h1v1h-1zM494 653h1v1h-1zM80 645h1v1h-1zM552 651h1v1h-1zM78 645h1v1h-1zM154 646h1v1h-1zM178 646h1v1h-1zM87 646h1v1h-1zM223 648h1v1h-1zM510 652h1v1h-1zM526 654h1v1h-1zM176 647h1v1h-1zM33 644h1v1h-1zM596 654h1v1h-1zM484 651h1v1h-1zM305 647h1v1h-1zM529 651h1v1h-1zM314 649h1v1h-1zM210 647h1v1h-1zM592 654h1v1h-1zM403 651h1v1h-1zM80 645h1v1h-1zM46 644h1v1h-1zM318 649h1v1h-1zM289 648h1v1h-1zM490 652h1v1h-1zM362 651h1v1h-1zM341 651h1v1h-1zM409 652h1v1h-1zM160 646h1v1h-1zM413 650h1v1h-1zM486 652h1v1h-1zM83 644h1v1h-1zM467 652h1v1h-1zM284 648h1v1h-1zM493 652h1v1h-1zM232 647h1v1h-1zM93 644h1v1h-1zM486 652h1v1h-1zM438 652h1v1h-1zM146 647h1v1h-1zM586 655h1v1h-1zM492 652h1v1h-1zM173 645h1v1h-1zM105 645h1v1h-1zM599 654h1v1h-1zM585 655h1v1h-1zM370 651h1v1h-1zM547 654h1v1h-1zM382 650h1v1h-1zM202 646h1v1h-1zM219 646h1v1h-1zM390 651h1v1h-1zM457 650h1v1h-1zM480 652h1v1h-1zM78 643h1v1h-1zM41 644h1v1h-1zM589 656h1v1h-1zM592 653h1v1h-1zM50 644h1v1h-1zM202 646h1v1h-1zM439 652h1v1h-1zM266 647h1v1h-1zM477 653h1v1h-1zM530 653h1v1h-1zM283 648h1v1h-1zM85 644h1v1h-1zM430 651h1v1h-1zM227 647h1v1h-1zM449 652h1v1h-1zM424 652h1v1h-1zM530 654h1v1h-1zM150 646h1v1h-1zM222 646h1v1h-1zM239 649h1v1h-1zM166 646h1v1h-1zM254 648h1v1h-1zM264 648h1v1h-1zM421 651h1v1h-1zM53 644h1v1h-1zM470 651h1v1h-1zM141 646h1v1h-1zM121 645h1v1h-1zM207 645h1v1h-1zM361 649h1v1h-1zM506 654h1v1h-1zM47 643h1v1h-1zM566 654h1v1h-1zM518 652h1v1h-1zM264 649h1v1h-1zM492 651h1v1h-1zM553 654h1v1h-1zM320 648h1v1h-1zM372 651h1v1h-1zM392 652h1v1h-1zM176 646h1v1h-1zM510 654h1v1h-1zM88 646h1v1h-1zM255 647h1v1h-1zM123 644h1v1h-1zM48 643h1v1h-1zM229 648h1v1h-1zM293 648h1v1h-1zM452 651h1v1h-1zM414 650h1v1h-1zM386 651h1v1h-1zM235 648h1v1h-1zM566 654h1v1h-1zM301 648h1v1h-1zM97 646h1v1h-1zM404 651h1v1h-1zM33 643h1v1h-1zM52 644h1v1h-1zM190 647h1v1h-1zM598 654h1v1h-1zM264 647h1v1h-1zM591 654h1v1h-1zM44 643h1v1h-1zM240 647h1v1h-1zM249 645h1v1h-1zM471 651h1v1h-1zM193 647h1v1h-1zM490 653h1v1h-1zM169 645h1v1h-1zM389 651h1v1h-1zM356 650h1v1h-1zM541 653h1v1h-1zM310 648h1v1h-1zM444 651h1v1h-1zM481 652h1v1h-1zM598 653h1v1h-1zM67 646h1v1h-1zM444 650h1v1h-1zM329 649h1v1h-1zM462 652h1v1h-1zM226 645h1v1h-1zM81 643h1v1h-1zM300 649h1v1h-1zM257 649h1v1h-1zM455 651h1v1h-1zM271 647h1v1h-1zM584 654h1v1h-1zM542 654h1v1h-1zM286 649h1v1h-1zM131 645h1v1h-1zM52 644h1v1h-1zM423 650h1v1h-1zM550 654h1v1h-1zM573 655h1v1h-1zM528 653h1v1h-1zM370 650h1v1h-1zM241 647h1v1h-1zM573 654h1v1h-1zM193 647h1v1h-1zM306 650h1v1h-1zM474 652h1v1h-1zM499 653h1v1h-1zM596 654h1v1h-1zM374 651h1v1h-1zM87 645h1v1h-1zM165 646h1v1h-1zM564 654h1v1h-1zM523 652h1v1h-1zM338 649h1v1h-1zM548 654h1v1h-1zM271 647h1v1h-1zM226 648h1v1h-1zM235 646h1v1h-1zM73 643h1v1h-1zM549 653h1v1h-1zM252 647h1v1h-1zM305 648h1v1h-1zM233 647h1v1h-1zM341 651h1v1h-1zM341 650h1v1h-1zM414 651h1v1h-1zM285 649h1v1h-1zM151 644h1v1h-1zM418 649h1v1h-1zM98 644h1v1h-1zM268 649h1v1h-1zM484 652h1v1h-1zM479 651h1v1h-1zM414 651h1v1h-1zM462 651h1v1h-1zM380 651h1v1h-1zM348 648h1v1h-1zM597 654h1v1h-1zM595 653h1v1h-1zM128 645h1v1h-1zM214 646h1v1h-1zM368 650h1v1h-1zM85 644h1v1h-1zM94 645h1v1h-1zM365 648h1v1h-1zM125 646h1v1h-1zM582 655h1v1h-1zM109 645h1v1h-1zM526 653h1v1h-1zM217 648h1v1h-1zM288 650h1v1h-1zM213 646h1v1h-1zM416 650h1v1h-1zM421 650h1v1h-1zM189 646h1v1h-1zM120 645h1v1h-1zM524 652h1v1h-1zM528 654h1v1h-1zM219 648h1v1h-1zM548 653h1v1h-1zM573 653h1v1h-1zM188 646h1v1h-1zM88 645h1v1h-1zM215 646h1v1h-1zM380 651h1v1h-1zM334 650h1v1h-1zM569 653h1v1h-1zM257 647h1v1h-1zM246 647h1v1h-1zM212 646h1v1h-1zM297 649h1v1h-1zM560 653h1v1h-1zM589 654h1v1h-1zM95 645h1v1h-1zM91 645h1v1h-1zM573 654h1v1h-1zM151 646h1v1h-1zM442 651h1v1h-1zM53 645h1v1h-1zM233 648h1v1h-1zM472 652h1v1h-1zM301 648h1v1h-1zM110 644h1v1h-1zM437 651h1v1h-1zM132 645h1v1h-1zM363 650h1v1h-1zM319 648h1v1h-1zM138 646h1v1h-1zM159 647h1v1h-1zM551 655h1v1h-1zM482 652h1v1h-1zM178 646h1v1h-1zM324 648h1v1h-1zM453 651h1v1h-1zM40 643h1v1h-1zM490 651h1v1h-1zM367 650h1v1h-1zM278 649h1v1h-1zM31 643h1v1h-1zM165 647h1v1h-1zM384 650h1v1h-1zM118 647h1v1h-1zM157 644h1v1h-1zM597 652h1v1h-1zM587 654h1v1h-1zM555 651h1v1h-1zM319 649h1v1h-1zM497 652h1v1h-1zM128 644h1v1h-1zM523 653h1v1h-1zM476 653h1v1h-1zM218 646h1v1h-1zM397 652h1v1h-1zM423 651h1v1h-1zM439 650h1v1h-1zM368 650h1v1h-1zM40 644h1v1h-1zM307 647h1v1h-1zM112 646h1v1h-1zM592 655h1v1h-1zM269 646h1v1h-1zM490 653h1v1h-1zM69 645h1v1h-1zM108 645h1v1h-1zM383 650h1v1h-1zM575 655h1v1h-1zM436 652h1v1h-1zM483 652h1v1h-1zM207 646h1v1h-1zM392 650h1v1h-1zM298 648h1v1h-1zM227 648h1v1h-1zM338 651h1v1h-1zM490 652h1v1h-1zM523 651h1v1h-1zM95 644h1v1h-1zM173 646h1v1h-1zM35 643h1v1h-1zM312 647h1v1h-1zM396 651h1v1h-1zM595 654h1v1h-1zM569 655h1v1h-1zM417 650h1v1h-1zM271 646h1v1h-1zM53 642h1v1h-1zM271 649h1v1h-1zM251 646h1v1h-1zM63 644h1v1h-1zM368 650h1v1h-1zM566 655h1v1h-1zM354 651h1v1h-1zM350 650h1v1h-1zM211 647h1v1h-1zM299 650h1v1h-1zM436 652h1v1h-1zM224 646h1v1h-1zM73 644h1v1h-1zM329 649h1v1h-1zM381 649h1v1h-1zM512 653h1v1h-1zM359 651h1v1h-1zM95 646h1v1h-1zM221 648h1v1h-1zM589 653h1v1h-1zM160 645h1v1h-1zM367 650h1v1h-1zM138 644h1v1h-1zM561 653h1v1h-1zM129 646h1v1h-1zM346 649h1v1h-1zM514 651h1v1h-1zM101 644h1v1h-1zM178 645h1v1h-1zM101 645h1v1h-1zM526 653h1v1h-1zM110 644h1v1h-1zM46 643h1v1h-1zM480 652h1v1h-1zM594 655h1v1h-1zM560 654h1v1h-1zM461 652h1v1h-1zM35 642h1v1h-1zM418 651h1v1h-1zM102 644h1v1h-1zM571 655h1v1h-1zM278 649h1v1h-1zM274 647h1v1h-1zM416 651h1v1h-1zM355 650h1v1h-1zM494 652h1v1h-1zM224 647h1v1h-1zM295 648h1v1h-1zM410 651h1v1h-1zM456 652h1v1h-1zM263 648h1v1h-1zM101 645h1v1h-1zM188 647h1v1h-1zM62 645h1v1h-1zM423 651h1v1h-1zM101 644h1v1h-1zM81 643h1v1h-1zM371 650h1v1h-1zM537 653h1v1h-1zM260 648h1v1h-1zM450 651h1v1h-1zM349 650h1v1h-1zM250 648h1v1h-1zM214 646h1v1h-1zM333 649h1v1h-1zM317 649h1v1h-1zM301 650h1v1h-1zM134 646h1v1h-1zM278 648h1v1h-1zM406 651h1v1h-1zM462 652h1v1h-1zM109 644h1v1h-1zM147 647h1v1h-1zM134 646h1v1h-1zM324 649h1v1h-1zM312 649h1v1h-1zM460 652h1v1h-1zM76 645h1v1h-1zM244 648h1v1h-1zM308 649h1v1h-1zM414 650h1v1h-1zM33 644h1v1h-1zM407 650h1v1h-1zM507 652h1v1h-1zM561 655h1v1h-1zM345 648h1v1h-1zM536 653h1v1h-1zM553 654h1v1h-1zM314 649h1v1h-1zM119 645h1v1h-1zM513 652h1v1h-1zM584 653h1v1h-1zM536 654h1v1h-1zM554 654h1v1h-1zM201 646h1v1h-1zM141 645h1v1h-1zM265 649h1v1h-1zM524 653h1v1h-1zM386 650h1v1h-1zM86 645h1v1h-1zM477 652h1v1h-1zM356 651h1v1h-1zM550 653h1v1h-1zM270 648h1v1h-1zM576 654h1v1h-1zM76 645h1v1h-1zM88 645h1v1h-1zM105 645h1v1h-1zM331 649h1v1h-1zM600 654h1v1h-1zM291 650h1v1h-1zM135 644h1v1h-1zM265 648h1v1h-1zM420 651h1v1h-1zM396 650h1v1h-1zM552 655h1v1h-1zM46 643h1v1h-1zM323 649h1v1h-1zM476 652h1v1h-1zM281 647h1v1h-1zM591 654h1v1h-1zM243 647h1v1h-1zM66 643h1v1h-1zM590 655h1v1h-1zM73 645h1v1h-1zM244 647h1v1h-1zM308 649h1v1h-1zM202 648h1v1h-1zM57 644h1v1h-1zM570 655h1v1h-1zM53 645h1v1h-1zM578 654h1v1h-1zM432 651h1v1h-1zM306 649h1v1h-1zM533 653h1v1h-1zM495 651h1v1h-1zM279 648h1v1h-1zM556 653h1v1h-1zM527 653h1v1h-1zM340 649h1v1h-1zM199 648h1v1h-1zM580 652h1v1h-1zM38 643h1v1h-1zM97 644h1v1h-1zM353 649h1v1h-1z" fill="#a8b2b8" opacity="0.9"/>
<path d="M1113 669h1v1h-1zM1069 666h1v1h-1zM930 667h1v1h-1zM1398 675h1v1h-1zM1368 671h1v1h-1zM1378 671h1v1h-1zM1392 672h1v1h-1zM924 663h1v1h-1zM1106 666h1v1h-1zM1075 667h1v1h-1zM1313 670h1v1h-1zM1205 669h1v1h-1zM1148 669h1v1h-1zM1048 666h1v1h-1zM1029 672h1v1h-1zM1151 671h1v1h-1zM1360 674h1v1h-1zM1161 669h1v1h-1zM1055 666h1v1h-1zM1347 675h1v1h-1zM1380 673h1v1h-1zM911 662h1v1h-1zM1252 670h1v1h-1zM1024 664h1v1h-1zM1274 670h1v1h-1zM1066 665h1v1h-1zM1065 665h1v1h-1zM905 665h1v1h-1zM1071 665h1v1h-1zM1121 666h1v1h-1zM1401 676h1v1h-1zM1303 670h1v1h-1zM1219 668h1v1h-1zM1148 667h1v1h-1zM898 664h1v1h-1zM1362 673h1v1h-1zM1102 666h1v1h-1zM1216 668h1v1h-1zM1369 672h1v1h-1zM1020 664h1v1h-1zM1139 670h1v1h-1zM1271 670h1v1h-1zM1205 670h1v1h-1zM1156 670h1v1h-1zM1252 671h1v1h-1zM1065 665h1v1h-1zM1107 669h1v1h-1zM1170 667h1v1h-1zM1003 666h1v1h-1zM921 662h1v1h-1zM1199 670h1v1h-1zM1246 669h1v1h-1zM1290 672h1v1h-1zM1037 666h1v1h-1zM1225 670h1v1h-1zM1303 670h1v1h-1zM904 662h1v1h-1zM1362 674h1v1h-1zM1277 674h1v1h-1zM1036 667h1v1h-1zM1384 673h1v1h-1zM1002 666h1v1h-1zM953 663h1v1h-1zM1256 672h1v1h-1zM979 666h1v1h-1zM1205 673h1v1h-1zM1321 672h1v1h-1zM922 662h1v1h-1zM1325 671h1v1h-1zM1317 671h1v1h-1zM1257 670h1v1h-1zM1306 673h1v1h-1zM1161 668h1v1h-1zM935 662h1v1h-1zM929 664h1v1h-1zM1317 676h1v1h-1zM1346 671h1v1h-1zM1372 672h1v1h-1zM1178 669h1v1h-1zM1017 665h1v1h-1zM1382 674h1v1h-1zM1075 665h1v1h-1zM1192 669h1v1h-1zM1009 664h1v1h-1zM1260 669h1v1h-1zM1288 671h1v1h-1zM1172 668h1v1h-1zM1059 667h1v1h-1zM1087 668h1v1h-1zM1074 669h1v1h-1zM997 666h1v1h-1zM932 664h1v1h-1zM1127 668h1v1h-1zM964 665h1v1h-1zM1023 665h1v1h-1zM1160 667h1v1h-1zM1323 671h1v1h-1zM1055 665h1v1h-1zM1190 667h1v1h-1zM1176 671h1v1h-1zM968 666h1v1h-1zM1351 672h1v1h-1zM1028 665h1v1h-1zM897 664h1v1h-1zM997 664h1v1h-1zM951 663h1v1h-1zM1235 671h1v1h-1zM1413 675h1v1h-1zM913 662h1v1h-1zM1143 668h1v1h-1zM1303 670h1v1h-1zM1064 666h1v1h-1zM1178 667h1v1h-1zM1370 671h1v1h-1zM1313 670h1v1h-1zM1184 668h1v1h-1zM968 664h1v1h-1zM948 662h1v1h-1zM1163 669h1v1h-1zM1275 670h1v1h-1zM1187 671h1v1h-1zM1005 666h1v1h-1zM1169 671h1v1h-1zM1001 665h1v1h-1zM1191 667h1v1h-1zM942 662h1v1h-1zM1158 667h1v1h-1zM1073 665h1v1h-1zM1386 672h1v1h-1zM1215 668h1v1h-1zM1034 665h1v1h-1zM1313 670h1v1h-1zM1397 672h1v1h-1zM1294 674h1v1h-1zM979 668h1v1h-1zM921 662h1v1h-1zM1021 664h1v1h-1zM964 664h1v1h-1zM912 666h1v1h-1zM1129 669h1v1h-1zM1281 672h1v1h-1zM1050 670h1v1h-1zM1145 670h1v1h-1zM1373 674h1v1h-1zM1302 671h1v1h-1zM1406 672h1v1h-1zM1282 671h1v1h-1zM1138 666h1v1h-1zM1134 670h1v1h-1zM1150 669h1v1h-1zM1278 673h1v1h-1zM1328 670h1v1h-1zM1053 669h1v1h-1zM1311 670h1v1h-1zM1251 669h1v1h-1zM948 663h1v1h-1zM1082 668h1v1h-1zM1093 668h1v1h-1zM1261 672h1v1h-1zM1374 673h1v1h-1zM901 662h1v1h-1zM1386 673h1v1h-1zM930 662h1v1h-1zM1216 669h1v1h-1zM921 665h1v1h-1zM976 665h1v1h-1zM901 665h1v1h-1zM1156 669h1v1h-1zM1338 674h1v1h-1zM950 664h1v1h-1zM916 662h1v1h-1zM1193 668h1v1h-1zM1282 671h1v1h-1zM1389 672h1v1h-1zM1096 667h1v1h-1zM915 663h1v1h-1zM1178 668h1v1h-1zM1261 669h1v1h-1zM1130 669h1v1h-1zM940 662h1v1h-1zM1375 672h1v1h-1zM1240 674h1v1h-1zM1077 668h1v1h-1zM1352 671h1v1h-1zM967 663h1v1h-1zM1164 668h1v1h-1zM1040 664h1v1h-1zM1401 675h1v1h-1zM1002 665h1v1h-1zM1192 667h1v1h-1zM1067 666h1v1h-1zM1372 673h1v1h-1zM1153 667h1v1h-1zM994 663h1v1h-1zM1375 674h1v1h-1zM987 665h1v1h-1zM966 666h1v1h-1zM1188 668h1v1h-1zM904 663h1v1h-1zM1304 677h1v1h-1zM1167 667h1v1h-1zM915 664h1v1h-1zM1016 665h1v1h-1zM1339 672h1v1h-1zM1394 672h1v1h-1zM1123 667h1v1h-1zM958 663h1v1h-1zM916 664h1v1h-1zM1340 672h1v1h-1zM1221 668h1v1h-1zM1132 666h1v1h-1zM1126 668h1v1h-1zM1055 666h1v1h-1zM1343 673h1v1h-1zM1316 672h1v1h-1zM1391 673h1v1h-1zM926 664h1v1h-1zM910 664h1v1h-1zM1335 671h1v1h-1zM925 665h1v1h-1zM1233 669h1v1h-1zM1070 666h1v1h-1zM1309 670h1v1h-1zM1051 665h1v1h-1zM1170 667h1v1h-1zM1190 670h1v1h-1zM1337 672h1v1h-1zM1350 672h1v1h-1zM1404 673h1v1h-1zM1403 673h1v1h-1zM946 662h1v1h-1zM1321 678h1v1h-1zM999 669h1v1h-1zM1027 668h1v1h-1zM1299 670h1v1h-1zM1384 674h1v1h-1zM1239 673h1v1h-1zM1363 674h1v1h-1zM1388 672h1v1h-1zM1061 665h1v1h-1zM990 663h1v1h-1zM1246 670h1v1h-1zM1300 674h1v1h-1zM1314 671h1v1h-1zM1160 668h1v1h-1zM915 662h1v1h-1zM957 665h1v1h-1zM1223 671h1v1h-1zM960 664h1v1h-1zM1195 670h1v1h-1zM1036 668h1v1h-1zM1211 672h1v1h-1zM925 664h1v1h-1zM1255 670h1v1h-1zM1174 668h1v1h-1zM1158 670h1v1h-1zM1244 674h1v1h-1zM1062 665h1v1h-1zM1292 670h1v1h-1zM926 664h1v1h-1zM1305 671h1v1h-1zM1208 672h1v1h-1zM1323 670h1v1h-1zM1278 670h1v1h-1zM1318 673h1v1h-1zM1063 667h1v1h-1zM946 662h1v1h-1zM1086 666h1v1h-1zM1377 674h1v1h-1zM1102 668h1v1h-1zM973 663h1v1h-1zM1296 670h1v1h-1zM1313 672h1v1h-1zM1171 668h1v1h-1zM1097 666h1v1h-1zM1289 669h1v1h-1zM1241 669h1v1h-1zM965 664h1v1h-1zM976 663h1v1h-1zM902 662h1v1h-1zM1090 666h1v1h-1zM1319 671h1v1h-1zM1207 668h1v1h-1zM1111 668h1v1h-1zM1117 666h1v1h-1zM1211 668h1v1h-1zM1227 671h1v1h-1zM1295 672h1v1h-1zM1200 672h1v1h-1zM1234 670h1v1h-1zM1209 668h1v1h-1zM954 663h1v1h-1zM1367 673h1v1h-1zM1363 672h1v1h-1zM1148 667h1v1h-1zM1154 669h1v1h-1zM1216 668h1v1h-1zM1287 669h1v1h-1zM1266 671h1v1h-1zM960 663h1v1h-1zM1404 672h1v1h-1zM1374 676h1v1h-1zM1275 669h1v1h-1zM1192 670h1v1h-1zM1038 669h1v1h-1zM1200 670h1v1h-1zM1209 669h1v1h-1zM1337 671h1v1h-1zM943 665h1v1h-1zM1409 673h1v1h-1zM986 666h1v1h-1zM921 662h1v1h-1zM1063 668h1v1h-1zM1238 672h1v1h-1zM1359 674h1v1h-1zM1342 672h1v1h-1zM969 664h1v1h-1zM1347 674h1v1h-1zM1009 664h1v1h-1zM1192 668h1v1h-1zM1231 670h1v1h-1zM1138 667h1v1h-1zM1223 673h1v1h-1zM1183 669h1v1h-1zM1218 669h1v1h-1zM1205 669h1v1h-1zM1099 666h1v1h-1zM924 664h1v1h-1zM1092 670h1v1h-1zM936 664h1v1h-1zM1126 666h1v1h-1zM908 663h1v1h-1zM1001 664h1v1h-1zM1326 671h1v1h-1zM1009 667h1v1h-1zM1016 664h1v1h-1zM1115 666h1v1h-1zM1366 671h1v1h-1zM969 663h1v1h-1zM1333 672h1v1h-1zM942 664h1v1h-1zM1028 666h1v1h-1zM1025 665h1v1h-1zM1173 671h1v1h-1zM972 663h1v1h-1zM897 662h1v1h-1zM1036 665h1v1h-1zM1020 666h1v1h-1zM973 664h1v1h-1zM1169 667h1v1h-1zM1315 671h1v1h-1zM1038 667h1v1h-1zM1234 674h1v1h-1zM1386 674h1v1h-1zM1395 672h1v1h-1zM1218 670h1v1h-1zM1315 672h1v1h-1zM1069 666h1v1h-1zM996 664h1v1h-1zM940 666h1v1h-1zM1215 672h1v1h-1zM1011 665h1v1h-1zM1129 669h1v1h-1zM957 665h1v1h-1zM1244 673h1v1h-1zM1016 668h1v1h-1zM1216 670h1v1h-1zM1227 669h1v1h-1zM1113 667h1v1h-1zM1028 666h1v1h-1zM1005 664h1v1h-1zM980 665h1v1h-1zM1120 668h1v1h-1zM1050 665h1v1h-1zM1219 670h1v1h-1zM1374 672h1v1h-1zM915 663h1v1h-1zM1011 666h1v1h-1zM917 664h1v1h-1zM908 662h1v1h-1zM1271 671h1v1h-1zM1020 664h1v1h-1zM1225 673h1v1h-1zM1089 666h1v1h-1zM907 663h1v1h-1zM1110 669h1v1h-1zM1217 668h1v1h-1zM1009 665h1v1h-1zM1286 671h1v1h-1zM1073 666h1v1h-1zM1179 670h1v1h-1zM1261 671h1v1h-1zM1183 670h1v1h-1zM1298 672h1v1h-1zM947 665h1v1h-1zM1035 665h1v1h-1zM1285 671h1v1h-1zM924 665h1v1h-1zM1247 670h1v1h-1zM1173 670h1v1h-1zM1302 671h1v1h-1zM1186 670h1v1h-1zM1041 669h1v1h-1zM1188 669h1v1h-1zM906 662h1v1h-1zM1169 671h1v1h-1zM1270 672h1v1h-1zM1343 671h1v1h-1zM1390 675h1v1h-1zM1327 671h1v1h-1zM1028 665h1v1h-1zM1131 666h1v1h-1zM936 665h1v1h-1zM924 664h1v1h-1zM1070 665h1v1h-1zM993 664h1v1h-1zM1059 666h1v1h-1zM1022 666h1v1h-1zM1047 665h1v1h-1zM1000 663h1v1h-1zM1004 666h1v1h-1zM1148 667h1v1h-1zM1387 672h1v1h-1zM958 663h1v1h-1zM1207 671h1v1h-1zM1263 671h1v1h-1zM1028 670h1v1h-1zM1082 666h1v1h-1zM972 664h1v1h-1zM1320 671h1v1h-1zM964 664h1v1h-1zM1322 671h1v1h-1zM1105 666h1v1h-1zM1119 667h1v1h-1zM1093 668h1v1h-1zM1076 667h1v1h-1zM1171 668h1v1h-1zM1113 666h1v1h-1zM1253 670h1v1h-1zM935 667h1v1h-1zM954 663h1v1h-1zM956 664h1v1h-1zM985 665h1v1h-1zM1356 671h1v1h-1zM1364 674h1v1h-1zM1285 671h1v1h-1zM1227 670h1v1h-1zM935 663h1v1h-1zM1225 671h1v1h-1zM1296 672h1v1h-1zM1152 667h1v1h-1zM1019 664h1v1h-1zM978 664h1v1h-1zM1012 664h1v1h-1zM1274 670h1v1h-1zM1407 672h1v1h-1zM1080 667h1v1h-1zM1369 673h1v1h-1zM1336 673h1v1h-1zM1223 670h1v1h-1zM900 661h1v1h-1zM1367 671h1v1h-1zM1043 664h1v1h-1zM1322 670h1v1h-1zM996 665h1v1h-1zM1249 670h1v1h-1zM1203 668h1v1h-1zM901 664h1v1h-1zM991 668h1v1h-1zM996 667h1v1h-1zM1236 668h1v1h-1zM1297 670h1v1h-1zM1313 670h1v1h-1zM929 662h1v1h-1zM1237 672h1v1h-1zM905 662h1v1h-1zM1242 670h1v1h-1zM1104 667h1v1h-1zM1257 669h1v1h-1zM1282 671h1v1h-1zM1076 665h1v1h-1zM1040 665h1v1h-1zM1289 672h1v1h-1zM1046 665h1v1h-1zM1235 669h1v1h-1zM1235 671h1v1h-1zM1381 673h1v1h-1zM1217 670h1v1h-1zM907 663h1v1h-1zM1111 667h1v1h-1zM898 662h1v1h-1zM1309 673h1v1h-1zM1397 673h1v1h-1zM944 662h1v1h-1zM1190 668h1v1h-1zM1160 667h1v1h-1zM1379 673h1v1h-1zM1070 666h1v1h-1zM1221 671h1v1h-1zM1076 665h1v1h-1zM1257 671h1v1h-1zM1106 666h1v1h-1zM946 663h1v1h-1zM930 663h1v1h-1zM1087 666h1v1h-1zM908 665h1v1h-1zM1329 671h1v1h-1zM1277 669h1v1h-1zM1107 667h1v1h-1zM974 663h1v1h-1zM1070 670h1v1h-1zM1242 671h1v1h-1zM1158 667h1v1h-1zM1094 668h1v1h-1zM920 663h1v1h-1zM983 663h1v1h-1zM1055 665h1v1h-1zM1112 667h1v1h-1zM978 664h1v1h-1zM1222 671h1v1h-1zM1363 675h1v1h-1zM1299 671h1v1h-1zM1144 670h1v1h-1zM1307 675h1v1h-1zM1389 675h1v1h-1zM1039 665h1v1h-1zM914 664h1v1h-1zM1305 673h1v1h-1zM1178 667h1v1h-1zM1242 668h1v1h-1zM1044 665h1v1h-1zM997 663h1v1h-1zM1034 665h1v1h-1zM1093 665h1v1h-1zM1152 669h1v1h-1zM906 664h1v1h-1zM1122 667h1v1h-1zM905 662h1v1h-1zM1168 669h1v1h-1zM1036 665h1v1h-1zM1327 673h1v1h-1zM1138 669h1v1h-1zM1009 666h1v1h-1zM975 665h1v1h-1zM1239 670h1v1h-1zM1233 670h1v1h-1zM1232 669h1v1h-1zM1362 674h1v1h-1zM1292 670h1v1h-1zM939 663h1v1h-1zM1000 667h1v1h-1zM1224 669h1v1h-1zM920 664h1v1h-1zM1364 671h1v1h-1zM996 665h1v1h-1zM1256 673h1v1h-1zM1041 666h1v1h-1zM1101 666h1v1h-1zM1152 667h1v1h-1zM1140 671h1v1h-1zM947 663h1v1h-1zM1364 675h1v1h-1zM928 662h1v1h-1zM897 665h1v1h-1zM1178 670h1v1h-1zM1382 673h1v1h-1zM1263 669h1v1h-1zM1150 671h1v1h-1zM956 662h1v1h-1zM1357 672h1v1h-1zM907 663h1v1h-1zM935 662h1v1h-1zM1243 670h1v1h-1zM1053 665h1v1h-1zM1095 669h1v1h-1zM1180 670h1v1h-1zM1350 672h1v1h-1zM967 663h1v1h-1zM1162 667h1v1h-1zM1084 665h1v1h-1zM1246 669h1v1h-1zM1188 673h1v1h-1zM1288 671h1v1h-1zM1077 669h1v1h-1zM965 663h1v1h-1zM1132 667h1v1h-1zM1369 672h1v1h-1zM1275 670h1v1h-1zM1079 668h1v1h-1zM1031 665h1v1h-1zM1012 666h1v1h-1zM933 664h1v1h-1zM1376 676h1v1h-1zM1302 672h1v1h-1zM1288 672h1v1h-1zM1262 669h1v1h-1zM1200 671h1v1h-1zM1243 669h1v1h-1zM1055 665h1v1h-1zM912 663h1v1h-1zM985 664h1v1h-1zM1056 665h1v1h-1zM1162 667h1v1h-1zM1376 672h1v1h-1zM1335 671h1v1h-1zM1188 668h1v1h-1zM905 664h1v1h-1zM1078 668h1v1h-1zM1375 673h1v1h-1zM1337 672h1v1h-1zM1155 669h1v1h-1zM950 664h1v1h-1zM990 667h1v1h-1zM1219 671h1v1h-1zM991 664h1v1h-1zM1002 664h1v1h-1zM1068 666h1v1h-1zM1414 674h1v1h-1zM1280 670h1v1h-1zM1284 672h1v1h-1zM1170 671h1v1h-1zM1162 667h1v1h-1zM1214 669h1v1h-1zM1243 669h1v1h-1zM1328 670h1v1h-1zM1098 665h1v1h-1zM1113 668h1v1h-1zM1045 665h1v1h-1zM930 664h1v1h-1zM1114 667h1v1h-1zM1186 673h1v1h-1zM1331 672h1v1h-1zM986 666h1v1h-1zM950 664h1v1h-1zM1016 664h1v1h-1zM1281 672h1v1h-1zM1312 670h1v1h-1zM948 663h1v1h-1zM1086 667h1v1h-1zM1308 671h1v1h-1zM1146 667h1v1h-1zM1333 673h1v1h-1zM1411 672h1v1h-1zM1321 670h1v1h-1zM1353 671h1v1h-1zM1249 669h1v1h-1zM1319 675h1v1h-1zM1017 664h1v1h-1zM983 668h1v1h-1zM1248 669h1v1h-1zM926 664h1v1h-1zM1395 674h1v1h-1zM1277 671h1v1h-1zM1141 667h1v1h-1zM1335 674h1v1h-1zM1124 667h1v1h-1zM1141 670h1v1h-1zM1128 666h1v1h-1zM902 662h1v1h-1zM1109 667h1v1h-1zM919 663h1v1h-1zM1317 672h1v1h-1zM1063 665h1v1h-1zM1209 670h1v1h-1zM1307 671h1v1h-1zM1042 664h1v1h-1zM916 662h1v1h-1zM1048 664h1v1h-1zM1366 672h1v1h-1zM1038 666h1v1h-1zM1306 672h1v1h-1zM1343 671h1v1h-1zM980 668h1v1h-1zM1306 671h1v1h-1zM1281 671h1v1h-1zM945 664h1v1h-1zM997 663h1v1h-1zM1208 668h1v1h-1zM1106 669h1v1h-1zM1081 666h1v1h-1zM960 665h1v1h-1zM914 662h1v1h-1zM1146 668h1v1h-1zM1284 671h1v1h-1zM1375 673h1v1h-1zM1163 668h1v1h-1zM1386 675h1v1h-1zM978 665h1v1h-1zM1289 670h1v1h-1zM1111 666h1v1h-1zM1161 668h1v1h-1zM1108 667h1v1h-1zM898 662h1v1h-1zM1037 667h1v1h-1zM1167 669h1v1h-1zM1096 666h1v1h-1zM1250 670h1v1h-1zM1326 670h1v1h-1zM1368 673h1v1h-1zM1362 671h1v1h-1zM1070 665h1v1h-1zM1307 672h1v1h-1zM1225 670h1v1h-1zM1197 669h1v1h-1zM1328 672h1v1h-1zM1057 666h1v1h-1zM1339 672h1v1h-1zM1043 666h1v1h-1zM1193 668h1v1h-1zM1386 674h1v1h-1zM1126 667h1v1h-1zM1015 666h1v1h-1zM1264 670h1v1h-1zM1137 670h1v1h-1zM1112 670h1v1h-1zM1205 670h1v1h-1zM1005 663h1v1h-1zM1226 670h1v1h-1zM1369 673h1v1h-1zM955 663h1v1h-1zM1171 668h1v1h-1zM1327 671h1v1h-1zM1104 668h1v1h-1zM1383 672h1v1h-1zM1386 675h1v1h-1zM1394 672h1v1h-1zM1305 672h1v1h-1zM1057 665h1v1h-1zM977 664h1v1h-1zM897 662h1v1h-1zM1381 673h1v1h-1zM1157 673h1v1h-1zM1031 664h1v1h-1zM1184 668h1v1h-1zM1058 667h1v1h-1zM1113 666h1v1h-1zM1373 672h1v1h-1zM1124 670h1v1h-1zM1076 666h1v1h-1zM1063 667h1v1h-1zM1213 668h1v1h-1zM1114 670h1v1h-1zM1199 670h1v1h-1zM1355 673h1v1h-1zM994 664h1v1h-1zM1027 664h1v1h-1zM1091 667h1v1h-1zM1408 672h1v1h-1zM1190 669h1v1h-1zM1024 664h1v1h-1zM1176 671h1v1h-1zM1061 665h1v1h-1zM1267 673h1v1h-1zM1001 663h1v1h-1zM1385 674h1v1h-1zM1196 668h1v1h-1zM899 663h1v1h-1zM1301 670h1v1h-1zM1282 671h1v1h-1zM906 667h1v1h-1zM1073 668h1v1h-1zM1062 667h1v1h-1zM1301 671h1v1h-1zM1259 671h1v1h-1zM1285 671h1v1h-1zM926 665h1v1h-1zM1329 673h1v1h-1zM1083 666h1v1h-1zM1170 668h1v1h-1zM1158 668h1v1h-1zM1287 672h1v1h-1zM1215 668h1v1h-1zM1403 674h1v1h-1zM1319 672h1v1h-1zM916 662h1v1h-1zM988 665h1v1h-1zM1292 670h1v1h-1zM1285 672h1v1h-1zM1285 674h1v1h-1zM930 662h1v1h-1zM940 663h1v1h-1zM1070 666h1v1h-1zM1370 672h1v1h-1zM1400 674h1v1h-1zM1246 669h1v1h-1zM1314 670h1v1h-1zM1107 668h1v1h-1zM1098 665h1v1h-1zM1114 669h1v1h-1zM1212 669h1v1h-1zM916 663h1v1h-1zM1272 671h1v1h-1zM1075 666h1v1h-1zM904 664h1v1h-1zM1318 671h1v1h-1zM1369 677h1v1h-1zM1202 670h1v1h-1zM928 663h1v1h-1zM1413 674h1v1h-1zM1260 670h1v1h-1zM1200 669h1v1h-1zM1064 666h1v1h-1zM986 663h1v1h-1zM1064 667h1v1h-1zM1180 668h1v1h-1zM1139 667h1v1h-1zM1256 671h1v1h-1zM930 662h1v1h-1zM1257 670h1v1h-1zM1072 668h1v1h-1zM935 664h1v1h-1zM1009 667h1v1h-1zM1241 671h1v1h-1zM903 666h1v1h-1zM1209 668h1v1h-1zM1174 671h1v1h-1zM1114 669h1v1h-1zM1233 668h1v1h-1zM1227 669h1v1h-1zM1388 675h1v1h-1zM1408 674h1v1h-1zM1249 670h1v1h-1zM952 662h1v1h-1zM1351 674h1v1h-1zM1121 667h1v1h-1zM1328 672h1v1h-1zM1378 672h1v1h-1zM919 664h1v1h-1zM1307 674h1v1h-1zM945 662h1v1h-1zM1131 667h1v1h-1zM1176 668h1v1h-1zM1351 671h1v1h-1zM1124 667h1v1h-1zM1090 665h1v1h-1zM1366 672h1v1h-1zM1185 670h1v1h-1zM931 664h1v1h-1zM1081 666h1v1h-1zM1295 671h1v1h-1zM1300 674h1v1h-1zM914 662h1v1h-1zM905 663h1v1h-1zM1214 668h1v1h-1zM1316 674h1v1h-1zM1077 667h1v1h-1zM1334 671h1v1h-1zM1213 670h1v1h-1zM1117 669h1v1h-1zM1216 670h1v1h-1zM932 663h1v1h-1zM1101 666h1v1h-1zM1214 668h1v1h-1zM911 664h1v1h-1zM1268 671h1v1h-1zM1137 672h1v1h-1zM1100 667h1v1h-1zM1197 670h1v1h-1zM937 666h1v1h-1zM1059 666h1v1h-1zM1214 669h1v1h-1zM1390 672h1v1h-1zM1070 666h1v1h-1zM1046 665h1v1h-1zM1128 667h1v1h-1zM943 664h1v1h-1zM1272 669h1v1h-1zM1092 666h1v1h-1zM1381 672h1v1h-1zM1052 669h1v1h-1zM960 664h1v1h-1zM1360 672h1v1h-1zM917 662h1v1h-1zM898 661h1v1h-1zM1393 672h1v1h-1zM1035 668h1v1h-1zM968 665h1v1h-1zM1031 667h1v1h-1zM1261 669h1v1h-1zM1402 672h1v1h-1zM980 664h1v1h-1zM1148 667h1v1h-1zM1309 671h1v1h-1zM1117 667h1v1h-1zM1064 666h1v1h-1zM1324 673h1v1h-1zM1225 671h1v1h-1zM1045 664h1v1h-1zM1262 672h1v1h-1zM1294 674h1v1h-1zM1281 672h1v1h-1zM1132 667h1v1h-1zM1240 671h1v1h-1zM1109 667h1v1h-1zM1353 675h1v1h-1zM1389 674h1v1h-1zM1394 672h1v1h-1zM976 665h1v1h-1zM1309 670h1v1h-1zM1261 670h1v1h-1zM1026 664h1v1h-1zM1354 671h1v1h-1zM1114 668h1v1h-1zM960 664h1v1h-1zM1296 670h1v1h-1zM971 663h1v1h-1zM968 664h1v1h-1zM1202 670h1v1h-1zM1373 673h1v1h-1zM1257 670h1v1h-1zM1394 674h1v1h-1zM1095 666h1v1h-1zM951 663h1v1h-1zM1138 668h1v1h-1zM1210 670h1v1h-1zM1352 673h1v1h-1zM1356 674h1v1h-1zM1143 669h1v1h-1zM1155 672h1v1h-1zM1116 669h1v1h-1zM903 664h1v1h-1zM1240 671h1v1h-1zM1010 667h1v1h-1zM1005 665h1v1h-1zM1176 667h1v1h-1zM1324 672h1v1h-1zM1352 672h1v1h-1zM1147 667h1v1h-1zM1284 671h1v1h-1zM967 666h1v1h-1zM1155 669h1v1h-1zM937 662h1v1h-1zM1184 669h1v1h-1zM1358 674h1v1h-1zM1399 672h1v1h-1zM1115 668h1v1h-1zM1234 670h1v1h-1zM1071 665h1v1h-1zM1140 670h1v1h-1zM1213 668h1v1h-1zM1073 665h1v1h-1zM1144 669h1v1h-1zM1180 668h1v1h-1zM1322 671h1v1h-1zM1042 664h1v1h-1zM1296 671h1v1h-1zM1348 672h1v1h-1zM1129 667h1v1h-1zM946 665h1v1h-1zM942 663h1v1h-1zM1378 672h1v1h-1zM1217 668h1v1h-1zM1273 670h1v1h-1zM1009 664h1v1h-1zM1293 671h1v1h-1zM1269 670h1v1h-1zM1136 667h1v1h-1zM959 663h1v1h-1zM1097 667h1v1h-1zM1327 670h1v1h-1zM1274 669h1v1h-1zM1071 667h1v1h-1zM1203 669h1v1h-1zM1097 671h1v1h-1zM1214 668h1v1h-1zM966 666h1v1h-1zM919 662h1v1h-1zM1060 668h1v1h-1zM1036 665h1v1h-1zM997 664h1v1h-1zM1139 670h1v1h-1zM1211 671h1v1h-1zM1365 671h1v1h-1zM1150 669h1v1h-1zM1332 672h1v1h-1zM1395 674h1v1h-1zM1126 669h1v1h-1zM1035 666h1v1h-1zM1233 673h1v1h-1zM970 663h1v1h-1zM941 664h1v1h-1zM1041 664h1v1h-1zM1163 667h1v1h-1zM1012 667h1v1h-1zM1300 673h1v1h-1zM1390 673h1v1h-1zM1024 665h1v1h-1zM934 664h1v1h-1zM1164 670h1v1h-1zM981 667h1v1h-1zM1018 665h1v1h-1zM1162 670h1v1h-1zM1056 667h1v1h-1zM1355 671h1v1h-1zM959 663h1v1h-1zM984 663h1v1h-1zM1385 672h1v1h-1zM1315 671h1v1h-1zM992 664h1v1h-1zM1387 673h1v1h-1zM1358 671h1v1h-1zM1358 672h1v1h-1zM1233 672h1v1h-1zM1108 670h1v1h-1zM1347 676h1v1h-1zM1027 665h1v1h-1zM1350 671h1v1h-1zM1102 666h1v1h-1zM1134 670h1v1h-1zM941 663h1v1h-1zM1104 669h1v1h-1zM1129 666h1v1h-1zM1031 665h1v1h-1zM1104 665h1v1h-1zM1139 669h1v1h-1zM1281 671h1v1h-1zM1200 669h1v1h-1zM1055 667h1v1h-1zM951 666h1v1h-1zM1005 665h1v1h-1zM1180 668h1v1h-1zM960 664h1v1h-1zM1277 670h1v1h-1zM1098 667h1v1h-1zM1066 666h1v1h-1zM918 662h1v1h-1zM1395 673h1v1h-1zM1326 671h1v1h-1zM1144 668h1v1h-1zM1216 670h1v1h-1zM897 664h1v1h-1zM1209 668h1v1h-1zM1316 670h1v1h-1zM1253 669h1v1h-1zM1075 668h1v1h-1zM945 662h1v1h-1zM968 665h1v1h-1zM1195 674h1v1h-1zM1188 668h1v1h-1zM1408 677h1v1h-1zM1020 671h1v1h-1zM1121 666h1v1h-1zM898 661h1v1h-1zM921 662h1v1h-1zM1159 668h1v1h-1zM1175 667h1v1h-1zM1335 675h1v1h-1zM1371 672h1v1h-1zM947 663h1v1h-1zM983 667h1v1h-1zM1156 667h1v1h-1zM1087 665h1v1h-1zM1350 674h1v1h-1zM938 662h1v1h-1zM972 666h1v1h-1zM1280 671h1v1h-1zM1110 670h1v1h-1zM1041 669h1v1h-1zM1174 668h1v1h-1zM995 663h1v1h-1zM1305 674h1v1h-1zM1069 665h1v1h-1zM1089 665h1v1h-1zM1207 671h1v1h-1zM1408 672h1v1h-1zM1075 667h1v1h-1zM1389 674h1v1h-1zM897 661h1v1h-1zM1173 671h1v1h-1zM1027 664h1v1h-1zM1209 669h1v1h-1zM1258 672h1v1h-1zM1153 667h1v1h-1zM1202 669h1v1h-1zM897 663h1v1h-1zM1008 666h1v1h-1zM1234 670h1v1h-1zM1250 674h1v1h-1zM1383 672h1v1h-1zM1251 670h1v1h-1zM1354 674h1v1h-1zM980 666h1v1h-1zM1100 669h1v1h-1zM1395 672h1v1h-1zM1096 667h1v1h-1zM1285 673h1v1h-1zM1301 671h1v1h-1zM1382 677h1v1h-1zM1259 669h1v1h-1zM938 665h1v1h-1zM1110 666h1v1h-1zM1319 672h1v1h-1zM933 663h1v1h-1zM1069 666h1v1h-1zM1252 672h1v1h-1zM1295 671h1v1h-1zM1296 674h1v1h-1zM1205 670h1v1h-1zM1022 665h1v1h-1zM1228 672h1v1h-1z" fill="#8d9fae" opacity="0.85"/>
<path d="M909 657h1v1h-1zM897 660h1v1h-1zM913 659h1v1h-1zM935 658h1v1h-1zM932 660h1v1h-1zM897 660h1v1h-1zM914 659h1v1h-1zM922 658h1v1h-1zM950 655h1v1h-1zM952 659h1v1h-1zM931 658h1v1h-1zM902 659h1v1h-1zM923 657h1v1h-1zM922 660h1v1h-1zM897 658h1v1h-1zM934 659h1v1h-1zM952 658h1v1h-1zM933 659h1v1h-1zM958 658h1v1h-1zM913 660h1v1h-1zM906 657h1v1h-1zM911 659h1v1h-1zM952 658h1v1h-1zM933 659h1v1h-1zM920 657h1v1h-1zM954 655h1v1h-1zM912 658h1v1h-1zM931 660h1v1h-1zM944 655h1v1h-1zM919 660h1v1h-1zM929 655h1v1h-1zM933 659h1v1h-1zM926 656h1v1h-1zM925 655h1v1h-1zM898 654h1v1h-1zM943 656h1v1h-1zM919 659h1v1h-1zM906 659h1v1h-1zM918 660h1v1h-1zM941 657h1v1h-1zM934 656h1v1h-1zM919 658h1v1h-1zM907 658h1v1h-1zM901 658h1v1h-1zM940 656h1v1h-1zM923 658h1v1h-1zM933 660h1v1h-1zM957 656h1v1h-1zM918 659h1v1h-1zM957 656h1v1h-1zM936 658h1v1h-1zM911 657h1v1h-1zM925 659h1v1h-1zM958 659h1v1h-1zM938 659h1v1h-1zM923 659h1v1h-1zM953 657h1v1h-1zM946 655h1v1h-1zM955 659h1v1h-1zM904 658h1v1h-1zM904 659h1v1h-1zM908 658h1v1h-1zM915 660h1v1h-1zM932 658h1v1h-1zM958 653h1v1h-1zM945 659h1v1h-1zM932 659h1v1h-1zM931 660h1v1h-1zM916 658h1v1h-1zM900 660h1v1h-1zM927 659h1v1h-1zM954 660h1v1h-1zM925 658h1v1h-1zM903 657h1v1h-1zM924 659h1v1h-1zM904 660h1v1h-1zM906 658h1v1h-1zM951 657h1v1h-1zM934 658h1v1h-1zM917 659h1v1h-1zM928 657h1v1h-1zM926 655h1v1h-1zM910 657h1v1h-1zM908 656h1v1h-1zM952 657h1v1h-1zM917 658h1v1h-1zM897 658h1v1h-1zM954 657h1v1h-1zM938 657h1v1h-1zM941 657h1v1h-1zM957 654h1v1h-1zM933 655h1v1h-1zM912 658h1v1h-1zM912 656h1v1h-1zM927 658h1v1h-1zM943 656h1v1h-1zM940 660h1v1h-1zM931 659h1v1h-1zM925 660h1v1h-1zM937 654h1v1h-1zM923 660h1v1h-1zM945 658h1v1h-1zM904 657h1v1h-1zM921 658h1v1h-1zM958 656h1v1h-1zM909 660h1v1h-1zM911 659h1v1h-1zM920 658h1v1h-1zM929 659h1v1h-1zM916 659h1v1h-1zM920 660h1v1h-1zM947 659h1v1h-1zM953 658h1v1h-1zM941 657h1v1h-1zM945 659h1v1h-1zM918 658h1v1h-1zM949 660h1v1h-1zM925 657h1v1h-1zM935 659h1v1h-1zM933 659h1v1h-1z" fill="#9fb0bc" opacity="0.8"/>
<path d="M604 607h1v1h-1zM604 629h1v1h-1zM604 543h1v1h-1zM605 557h1v1h-1zM604 614h1v1h-1zM602 640h1v1h-1zM605 642h1v1h-1zM606 557h1v1h-1zM605 615h1v1h-1zM607 631h1v1h-1zM605 629h1v1h-1zM604 644h1v1h-1zM606 605h1v1h-1zM603 602h1v1h-1zM606 541h1v1h-1zM603 560h1v1h-1zM602 595h1v1h-1zM607 573h1v1h-1zM607 539h1v1h-1zM604 556h1v1h-1zM606 615h1v1h-1zM606 585h1v1h-1zM603 563h1v1h-1zM603 611h1v1h-1zM604 547h1v1h-1zM603 643h1v1h-1zM605 644h1v1h-1zM603 632h1v1h-1zM602 577h1v1h-1zM602 551h1v1h-1zM604 628h1v1h-1zM604 629h1v1h-1zM605 622h1v1h-1zM608 620h1v1h-1zM604 629h1v1h-1zM605 569h1v1h-1zM605 631h1v1h-1zM604 634h1v1h-1zM603 551h1v1h-1zM607 620h1v1h-1zM606 556h1v1h-1zM604 632h1v1h-1zM605 653h1v1h-1zM603 573h1v1h-1zM607 582h1v1h-1zM601 651h1v1h-1zM604 610h1v1h-1zM606 621h1v1h-1zM604 555h1v1h-1zM604 574h1v1h-1zM607 598h1v1h-1zM603 599h1v1h-1zM603 561h1v1h-1zM605 654h1v1h-1zM604 537h1v1h-1zM605 601h1v1h-1zM604 607h1v1h-1zM605 651h1v1h-1zM603 573h1v1h-1zM605 569h1v1h-1zM607 569h1v1h-1zM607 625h1v1h-1zM605 583h1v1h-1zM604 617h1v1h-1zM606 628h1v1h-1zM603 551h1v1h-1zM603 616h1v1h-1zM605 624h1v1h-1zM604 616h1v1h-1zM605 643h1v1h-1zM604 598h1v1h-1zM606 615h1v1h-1zM602 569h1v1h-1zM605 613h1v1h-1zM604 599h1v1h-1zM603 651h1v1h-1zM605 654h1v1h-1zM603 543h1v1h-1zM604 578h1v1h-1zM607 612h1v1h-1zM601 615h1v1h-1zM601 598h1v1h-1zM606 564h1v1h-1zM604 613h1v1h-1zM607 602h1v1h-1zM604 654h1v1h-1zM604 629h1v1h-1zM604 555h1v1h-1zM604 579h1v1h-1zM605 613h1v1h-1zM602 643h1v1h-1zM604 580h1v1h-1zM604 581h1v1h-1zM604 621h1v1h-1zM603 618h1v1h-1zM607 632h1v1h-1zM603 621h1v1h-1zM605 611h1v1h-1zM604 654h1v1h-1zM604 637h1v1h-1zM603 607h1v1h-1zM605 593h1v1h-1zM602 583h1v1h-1zM604 642h1v1h-1zM604 647h1v1h-1zM604 637h1v1h-1zM605 538h1v1h-1zM604 592h1v1h-1zM605 581h1v1h-1zM602 646h1v1h-1zM606 571h1v1h-1zM604 601h1v1h-1zM605 606h1v1h-1zM606 571h1v1h-1zM606 560h1v1h-1zM605 544h1v1h-1zM603 621h1v1h-1zM603 574h1v1h-1zM606 636h1v1h-1zM603 566h1v1h-1zM603 642h1v1h-1zM605 573h1v1h-1zM602 578h1v1h-1zM605 563h1v1h-1zM605 595h1v1h-1zM605 590h1v1h-1zM604 583h1v1h-1zM607 538h1v1h-1zM605 542h1v1h-1zM605 576h1v1h-1zM604 567h1v1h-1zM603 549h1v1h-1zM606 595h1v1h-1zM604 555h1v1h-1zM605 632h1v1h-1zM605 625h1v1h-1zM603 621h1v1h-1zM604 545h1v1h-1zM604 596h1v1h-1zM605 622h1v1h-1zM604 565h1v1h-1zM606 602h1v1h-1zM604 598h1v1h-1zM603 587h1v1h-1zM607 586h1v1h-1zM605 572h1v1h-1zM605 627h1v1h-1zM602 620h1v1h-1zM604 640h1v1h-1zM606 555h1v1h-1zM606 655h1v1h-1zM604 606h1v1h-1zM603 565h1v1h-1zM603 543h1v1h-1zM605 545h1v1h-1zM604 588h1v1h-1zM605 621h1v1h-1zM606 628h1v1h-1zM606 584h1v1h-1zM606 572h1v1h-1zM605 568h1v1h-1zM604 631h1v1h-1zM606 568h1v1h-1zM604 557h1v1h-1zM605 641h1v1h-1zM605 638h1v1h-1zM607 648h1v1h-1zM605 593h1v1h-1zM607 598h1v1h-1zM605 549h1v1h-1zM604 630h1v1h-1zM605 647h1v1h-1zM605 636h1v1h-1zM604 602h1v1h-1zM602 553h1v1h-1zM604 605h1v1h-1zM604 637h1v1h-1zM606 582h1v1h-1zM604 612h1v1h-1zM604 593h1v1h-1zM604 626h1v1h-1zM606 620h1v1h-1zM605 643h1v1h-1zM606 561h1v1h-1zM605 538h1v1h-1zM605 654h1v1h-1zM605 651h1v1h-1zM606 631h1v1h-1zM605 631h1v1h-1zM604 581h1v1h-1zM604 609h1v1h-1zM605 581h1v1h-1zM606 578h1v1h-1zM603 578h1v1h-1zM603 601h1v1h-1zM606 633h1v1h-1zM604 581h1v1h-1zM606 540h1v1h-1zM605 574h1v1h-1zM606 585h1v1h-1zM605 563h1v1h-1zM606 603h1v1h-1zM605 544h1v1h-1zM604 573h1v1h-1zM604 558h1v1h-1zM604 546h1v1h-1zM604 542h1v1h-1zM604 606h1v1h-1zM604 610h1v1h-1zM603 554h1v1h-1zM604 651h1v1h-1zM604 618h1v1h-1zM604 543h1v1h-1zM606 633h1v1h-1zM605 608h1v1h-1zM603 639h1v1h-1zM605 581h1v1h-1zM604 573h1v1h-1zM605 547h1v1h-1zM603 614h1v1h-1zM602 579h1v1h-1zM605 612h1v1h-1zM603 542h1v1h-1zM607 619h1v1h-1zM604 652h1v1h-1zM605 597h1v1h-1zM602 588h1v1h-1zM604 627h1v1h-1zM603 577h1v1h-1zM603 574h1v1h-1zM605 598h1v1h-1zM604 576h1v1h-1zM604 580h1v1h-1zM603 537h1v1h-1zM606 567h1v1h-1zM604 577h1v1h-1zM605 553h1v1h-1zM605 607h1v1h-1zM604 593h1v1h-1zM604 644h1v1h-1zM605 619h1v1h-1zM605 584h1v1h-1zM605 634h1v1h-1zM605 562h1v1h-1zM605 587h1v1h-1zM604 613h1v1h-1zM603 586h1v1h-1zM603 561h1v1h-1zM604 585h1v1h-1zM606 547h1v1h-1zM602 606h1v1h-1zM601 545h1v1h-1zM603 597h1v1h-1zM604 537h1v1h-1zM603 539h1v1h-1zM604 598h1v1h-1zM605 615h1v1h-1zM605 579h1v1h-1zM607 574h1v1h-1zM604 627h1v1h-1zM606 612h1v1h-1zM602 570h1v1h-1zM605 580h1v1h-1zM600 619h1v1h-1zM604 650h1v1h-1zM603 545h1v1h-1zM603 650h1v1h-1zM604 565h1v1h-1zM606 583h1v1h-1zM605 618h1v1h-1zM603 655h1v1h-1zM603 635h1v1h-1zM606 618h1v1h-1zM606 564h1v1h-1zM604 573h1v1h-1zM606 628h1v1h-1zM603 555h1v1h-1zM602 576h1v1h-1zM604 558h1v1h-1zM604 556h1v1h-1zM603 655h1v1h-1zM606 599h1v1h-1zM603 536h1v1h-1zM604 554h1v1h-1zM604 552h1v1h-1zM604 558h1v1h-1zM604 625h1v1h-1zM605 545h1v1h-1zM603 571h1v1h-1zM605 627h1v1h-1zM605 591h1v1h-1zM605 573h1v1h-1zM605 632h1v1h-1zM603 651h1v1h-1zM603 599h1v1h-1zM603 639h1v1h-1zM605 622h1v1h-1zM605 578h1v1h-1zM606 579h1v1h-1zM604 566h1v1h-1zM605 561h1v1h-1zM606 539h1v1h-1zM605 567h1v1h-1zM604 639h1v1h-1zM604 582h1v1h-1zM603 538h1v1h-1zM605 649h1v1h-1zM605 582h1v1h-1zM602 645h1v1h-1zM605 574h1v1h-1zM605 573h1v1h-1zM605 650h1v1h-1zM605 587h1v1h-1zM604 615h1v1h-1zM605 603h1v1h-1zM607 605h1v1h-1zM604 581h1v1h-1zM605 594h1v1h-1zM604 639h1v1h-1zM603 549h1v1h-1zM605 542h1v1h-1zM606 583h1v1h-1zM605 632h1v1h-1zM608 543h1v1h-1zM602 616h1v1h-1zM605 546h1v1h-1zM604 630h1v1h-1zM603 626h1v1h-1zM603 615h1v1h-1zM604 636h1v1h-1zM604 566h1v1h-1zM604 558h1v1h-1zM605 561h1v1h-1zM604 630h1v1h-1zM603 559h1v1h-1zM604 625h1v1h-1zM606 641h1v1h-1zM605 607h1v1h-1zM603 635h1v1h-1zM601 591h1v1h-1zM602 631h1v1h-1zM607 552h1v1h-1zM605 643h1v1h-1zM606 643h1v1h-1zM607 625h1v1h-1zM603 623h1v1h-1zM604 652h1v1h-1zM602 539h1v1h-1zM606 647h1v1h-1zM604 546h1v1h-1zM894 592h1v1h-1zM895 622h1v1h-1zM892 611h1v1h-1zM893 561h1v1h-1zM894 645h1v1h-1zM894 657h1v1h-1zM895 609h1v1h-1zM895 608h1v1h-1zM895 657h1v1h-1zM895 624h1v1h-1zM895 613h1v1h-1zM894 602h1v1h-1zM895 587h1v1h-1zM897 645h1v1h-1zM895 616h1v1h-1zM893 604h1v1h-1zM897 654h1v1h-1zM895 587h1v1h-1zM892 571h1v1h-1zM894 615h1v1h-1zM894 626h1v1h-1zM894 633h1v1h-1zM895 609h1v1h-1zM895 549h1v1h-1zM895 589h1v1h-1zM896 550h1v1h-1zM896 630h1v1h-1zM893 570h1v1h-1zM894 621h1v1h-1zM895 554h1v1h-1zM894 633h1v1h-1zM895 570h1v1h-1zM892 562h1v1h-1zM894 659h1v1h-1zM896 599h1v1h-1zM896 635h1v1h-1zM894 548h1v1h-1zM893 606h1v1h-1zM896 549h1v1h-1zM894 599h1v1h-1zM894 563h1v1h-1zM896 566h1v1h-1zM895 618h1v1h-1zM892 625h1v1h-1zM895 597h1v1h-1zM893 653h1v1h-1zM894 583h1v1h-1zM897 617h1v1h-1zM894 555h1v1h-1zM895 539h1v1h-1zM896 540h1v1h-1zM894 553h1v1h-1zM895 596h1v1h-1zM894 569h1v1h-1zM891 597h1v1h-1zM896 582h1v1h-1zM895 611h1v1h-1zM895 645h1v1h-1zM896 565h1v1h-1zM895 654h1v1h-1zM894 575h1v1h-1zM896 598h1v1h-1zM894 583h1v1h-1zM893 537h1v1h-1zM892 586h1v1h-1zM894 544h1v1h-1zM894 655h1v1h-1zM895 583h1v1h-1zM894 544h1v1h-1zM895 576h1v1h-1zM893 585h1v1h-1zM893 605h1v1h-1zM895 637h1v1h-1zM895 638h1v1h-1zM893 634h1v1h-1zM895 543h1v1h-1zM894 640h1v1h-1zM896 547h1v1h-1zM895 642h1v1h-1zM894 611h1v1h-1zM893 563h1v1h-1zM895 654h1v1h-1zM895 592h1v1h-1zM895 605h1v1h-1zM896 537h1v1h-1zM894 608h1v1h-1zM894 570h1v1h-1zM895 651h1v1h-1zM895 562h1v1h-1zM892 566h1v1h-1zM896 653h1v1h-1zM893 647h1v1h-1zM895 594h1v1h-1zM895 579h1v1h-1zM893 652h1v1h-1zM894 550h1v1h-1zM895 582h1v1h-1zM894 545h1v1h-1zM894 579h1v1h-1zM896 652h1v1h-1zM894 631h1v1h-1zM893 594h1v1h-1zM896 601h1v1h-1zM893 577h1v1h-1zM894 546h1v1h-1zM896 658h1v1h-1zM896 559h1v1h-1zM895 546h1v1h-1zM894 608h1v1h-1zM896 587h1v1h-1zM894 569h1v1h-1zM894 583h1v1h-1zM896 634h1v1h-1zM896 591h1v1h-1zM895 645h1v1h-1zM895 558h1v1h-1zM895 564h1v1h-1zM896 635h1v1h-1zM892 554h1v1h-1zM895 603h1v1h-1zM895 648h1v1h-1zM894 574h1v1h-1zM893 642h1v1h-1zM896 605h1v1h-1zM895 541h1v1h-1zM895 592h1v1h-1zM894 636h1v1h-1zM894 637h1v1h-1zM896 537h1v1h-1zM894 585h1v1h-1zM894 579h1v1h-1zM896 599h1v1h-1zM895 657h1v1h-1zM897 645h1v1h-1zM896 614h1v1h-1zM894 643h1v1h-1zM893 550h1v1h-1zM895 650h1v1h-1zM894 561h1v1h-1zM894 569h1v1h-1zM894 598h1v1h-1zM894 622h1v1h-1zM894 607h1v1h-1zM894 539h1v1h-1zM896 602h1v1h-1zM894 564h1v1h-1zM895 618h1v1h-1zM895 548h1v1h-1zM896 559h1v1h-1zM894 619h1v1h-1zM896 585h1v1h-1zM895 575h1v1h-1zM897 561h1v1h-1zM895 627h1v1h-1zM895 581h1v1h-1zM897 654h1v1h-1zM893 603h1v1h-1zM896 606h1v1h-1zM897 578h1v1h-1zM894 568h1v1h-1zM896 656h1v1h-1zM892 654h1v1h-1zM895 574h1v1h-1zM894 558h1v1h-1zM894 567h1v1h-1zM895 640h1v1h-1zM897 614h1v1h-1zM895 556h1v1h-1zM895 632h1v1h-1zM897 615h1v1h-1zM894 612h1v1h-1zM897 545h1v1h-1zM893 638h1v1h-1zM894 586h1v1h-1zM893 539h1v1h-1zM895 582h1v1h-1zM893 561h1v1h-1zM894 562h1v1h-1zM895 564h1v1h-1zM895 624h1v1h-1zM894 558h1v1h-1zM894 549h1v1h-1zM894 563h1v1h-1zM894 605h1v1h-1zM896 546h1v1h-1zM894 635h1v1h-1zM895 563h1v1h-1zM894 620h1v1h-1zM894 646h1v1h-1zM894 643h1v1h-1zM894 632h1v1h-1zM893 543h1v1h-1zM894 573h1v1h-1zM895 635h1v1h-1zM894 552h1v1h-1zM895 557h1v1h-1zM895 644h1v1h-1zM895 631h1v1h-1zM894 573h1v1h-1zM895 611h1v1h-1zM893 550h1v1h-1zM895 536h1v1h-1zM895 590h1v1h-1zM895 634h1v1h-1zM896 539h1v1h-1zM897 542h1v1h-1zM894 590h1v1h-1zM893 655h1v1h-1zM895 589h1v1h-1zM894 584h1v1h-1zM893 658h1v1h-1zM895 640h1v1h-1zM895 644h1v1h-1zM894 581h1v1h-1zM894 651h1v1h-1zM895 566h1v1h-1zM894 640h1v1h-1zM894 559h1v1h-1zM895 569h1v1h-1zM896 543h1v1h-1zM893 602h1v1h-1zM893 603h1v1h-1zM896 630h1v1h-1zM896 562h1v1h-1zM894 578h1v1h-1zM894 636h1v1h-1zM894 636h1v1h-1zM894 559h1v1h-1zM895 560h1v1h-1zM896 565h1v1h-1zM895 605h1v1h-1zM892 628h1v1h-1zM894 576h1v1h-1zM892 616h1v1h-1zM893 546h1v1h-1zM894 538h1v1h-1zM895 572h1v1h-1zM894 649h1v1h-1zM893 641h1v1h-1zM895 558h1v1h-1zM895 616h1v1h-1zM896 595h1v1h-1zM894 622h1v1h-1zM892 646h1v1h-1zM895 639h1v1h-1zM895 623h1v1h-1zM896 588h1v1h-1zM895 549h1v1h-1zM895 539h1v1h-1zM895 563h1v1h-1z" fill="#8fa0b0" opacity="0.9"/>
<path d="M457 597h1v1h-1zM456 594h1v1h-1zM451 598h1v1h-1zM573 543h1v1h-1zM455 598h1v1h-1zM465 590h1v1h-1zM502 576h1v1h-1zM519 566h1v1h-1zM428 609h1v1h-1zM428 609h1v1h-1zM584 536h1v1h-1zM432 606h1v1h-1zM498 577h1v1h-1zM514 571h1v1h-1zM392 630h1v1h-1zM446 603h1v1h-1zM442 601h1v1h-1zM517 566h1v1h-1zM390 628h1v1h-1zM583 535h1v1h-1zM385 630h1v1h-1zM432 609h1v1h-1zM471 589h1v1h-1zM537 560h1v1h-1zM584 536h1v1h-1zM552 551h1v1h-1zM507 572h1v1h-1zM494 579h1v1h-1zM526 566h1v1h-1zM505 576h1v1h-1zM583 537h1v1h-1zM598 525h1v1h-1zM597 535h1v1h-1zM589 535h1v1h-1zM589 533h1v1h-1zM575 542h1v1h-1zM575 540h1v1h-1zM592 537h1v1h-1zM583 544h1v1h-1zM599 533h1v1h-1zM598 538h1v1h-1zM585 541h1v1h-1z" fill="#8fa4b0" opacity="0.9"/>
<!-- floor lines -->
<path d="M31 645.3L604 656.3" stroke="#e8b848" stroke-width="1.6"/>
<path d="M31 644L604 655" stroke="#c0a0a0" stroke-width="1" opacity="0.5"/>
<path d="M604.5 656V536Q604.5 531 609.5 531L894.5 533V659.5" fill="none" stroke="#a4aeb6" stroke-width="3"/>
<path d="M601 523.8L895 521.6" stroke="#e57878" stroke-width="1.8"/>
<path d="M894 661L1416 672.5" stroke="#e58a8a" stroke-width="2"/>
<!-- axes -->
<path d="M75.5 885V840.5H71L81 830L91 840.5H85.5V875" fill="none" stroke="#3c9c3c" stroke-width="1"/>
<path d="M75.5 885H121.5V890L131.5 880L121.5 870V875H85.5" fill="none" stroke="#b83232" stroke-width="1"/>
<!-- mouse cursor -->
<path d="M631.5 637.5V654L635.3 650.5L638.2 656.5L640.5 655.5L637.8 649.5H642.8Z" fill="#fff" stroke="#000" stroke-width="1"/>
</svg>
</body></html>
